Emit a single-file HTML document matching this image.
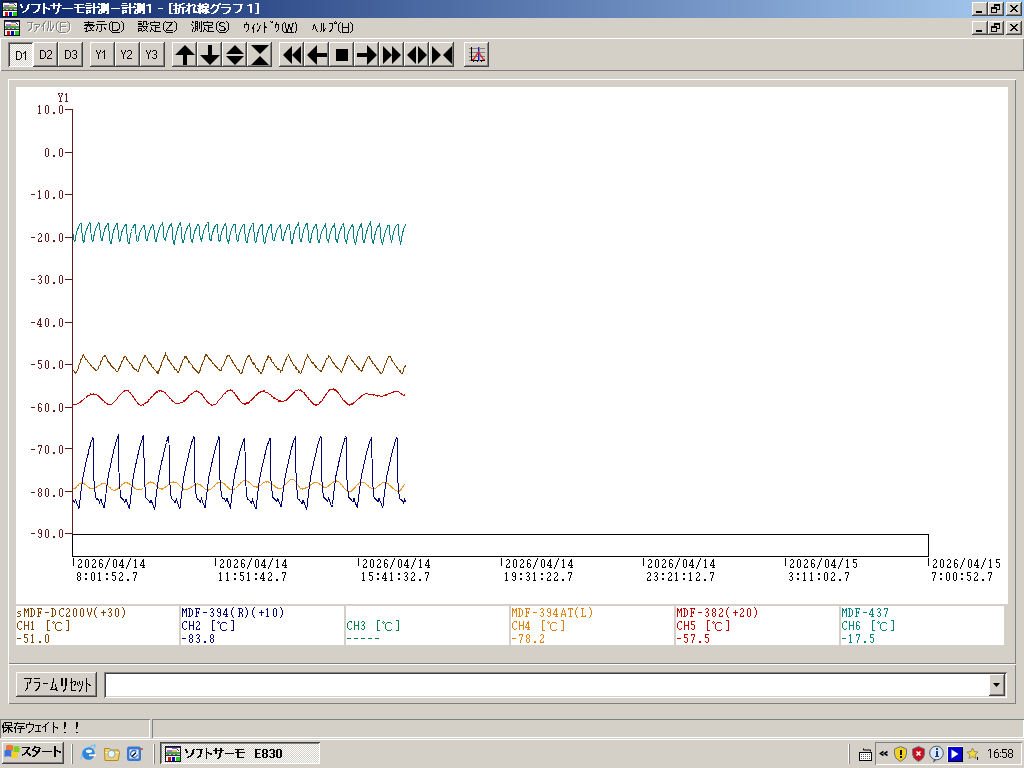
<!DOCTYPE html>
<html><head><meta charset="utf-8"><style>
html,body{margin:0;padding:0;width:1024px;height:768px;overflow:hidden;background:#D4D0C8;font-family:"Liberation Sans",sans-serif}
body>div,body>svg{position:absolute}
.b{background:#D4D0C8;box-shadow:inset -1px -1px #404040,inset 1px 1px #fff,inset -2px -2px #808080}
.bp{background-color:#fff;background-image:repeating-conic-gradient(#D4D0C8 0 25%,#fff 0 50%);background-size:2px 2px;box-shadow:inset 1px 1px #808080,inset -1px -1px #fff,inset 2px 2px #404040}
.bp2{background-color:#fff;background-image:repeating-conic-gradient(#D4D0C8 0 25%,#fff 0 50%);background-size:2px 2px;box-shadow:inset 1px 1px #404040,inset -1px -1px #fff,inset 2px 2px #808080}
.s{box-shadow:inset 1px 1px #808080,inset -1px -1px #fff,inset 2px 2px #404040,inset -2px -2px #D4D0C8}
.m{font-family:"Liberation Mono",monospace;font-size:12px;letter-spacing:-0.2px;line-height:14px;white-space:pre}
</style></head><body>
<div style="left:0;top:0;width:1024px;height:18px;background:linear-gradient(to right,#0A246A,#A6CAF0)"></div>
<div class="b" style="left:972px;top:2px;width:16px;height:14px;"></div>
<div class="b" style="left:972px;top:21px;width:16px;height:14px;"></div>
<div class="b" style="left:988px;top:2px;width:16px;height:14px;"></div>
<div class="b" style="left:988px;top:21px;width:16px;height:14px;"></div>
<div class="b" style="left:1006px;top:2px;width:16px;height:14px;"></div>
<div class="b" style="left:1006px;top:21px;width:16px;height:14px;"></div>
<div style="left:0;top:38px;width:1024px;height:33px;box-shadow:inset 1px 1px #fff,inset -1px -1px #808080"></div>
<div class="b" style="left:33px;top:42px;width:25px;height:25px;"></div>
<div class="b" style="left:58px;top:42px;width:25px;height:25px;"></div>
<div class="b" style="left:90px;top:42px;width:25px;height:25px;"></div>
<div class="b" style="left:115px;top:42px;width:25px;height:25px;"></div>
<div class="b" style="left:140px;top:42px;width:25px;height:25px;"></div>
<div class="b" style="left:172px;top:42px;width:25px;height:25px;"></div>
<div class="b" style="left:197px;top:42px;width:25px;height:25px;"></div>
<div class="b" style="left:222px;top:42px;width:25px;height:25px;"></div>
<div class="b" style="left:247px;top:42px;width:25px;height:25px;"></div>
<div class="b" style="left:279px;top:42px;width:25px;height:25px;"></div>
<div class="b" style="left:304px;top:42px;width:25px;height:25px;"></div>
<div class="b" style="left:329px;top:42px;width:25px;height:25px;"></div>
<div class="b" style="left:354px;top:42px;width:25px;height:25px;"></div>
<div class="b" style="left:379px;top:42px;width:25px;height:25px;"></div>
<div class="b" style="left:404px;top:42px;width:25px;height:25px;"></div>
<div class="b" style="left:429px;top:42px;width:25px;height:25px;"></div>
<div class="b" style="left:464px;top:42px;width:25px;height:25px;"></div>
<div class="bp" style="left:8px;top:42px;width:25px;height:25px"></div>
<div style="left:8px;top:79px;width:1008px;height:585px;box-shadow:inset 1px 1px #fff,inset -1px -1px #808080"></div>
<div style="left:16px;top:87px;width:992px;height:517px;background:#fff"></div>
<div style="left:16px;top:606px;width:163px;height:39px;background:#fff"></div>
<div style="left:181px;top:606px;width:163px;height:39px;background:#fff"></div>
<div style="left:346px;top:606px;width:163px;height:39px;background:#fff"></div>
<div style="left:511px;top:606px;width:163px;height:39px;background:#fff"></div>
<div style="left:676px;top:606px;width:163px;height:39px;background:#fff"></div>
<div style="left:841px;top:606px;width:163px;height:39px;background:#fff"></div>
<svg width="1024" height="768" style="left:0;top:0" shape-rendering="crispEdges"><line x1="72.5" y1="109" x2="72.5" y2="534" stroke="#601818"/><line x1="65" y1="109.5" x2="73" y2="109.5" stroke="#601818"/><line x1="65" y1="152.5" x2="73" y2="152.5" stroke="#601818"/><line x1="65" y1="194.5" x2="73" y2="194.5" stroke="#601818"/><line x1="65" y1="237.5" x2="73" y2="237.5" stroke="#601818"/><line x1="65" y1="279.5" x2="73" y2="279.5" stroke="#601818"/><line x1="65" y1="322.5" x2="73" y2="322.5" stroke="#601818"/><line x1="65" y1="364.5" x2="73" y2="364.5" stroke="#601818"/><line x1="65" y1="407.5" x2="73" y2="407.5" stroke="#601818"/><line x1="65" y1="448.5" x2="73" y2="448.5" stroke="#601818"/><line x1="65" y1="491.5" x2="73" y2="491.5" stroke="#601818"/><line x1="65" y1="533.5" x2="73" y2="533.5" stroke="#601818"/><rect x="72.5" y="534.5" width="856" height="22" fill="none" stroke="#000"/><line x1="73.5" y1="558" x2="73.5" y2="566" stroke="#000"/><line x1="215.5" y1="558" x2="215.5" y2="566" stroke="#000"/><line x1="358.5" y1="558" x2="358.5" y2="566" stroke="#000"/><line x1="501.5" y1="558" x2="501.5" y2="566" stroke="#000"/><line x1="643.5" y1="558" x2="643.5" y2="566" stroke="#000"/><line x1="785.5" y1="558" x2="785.5" y2="566" stroke="#000"/><line x1="928.5" y1="558" x2="928.5" y2="566" stroke="#000"/><polyline points="73.0,233.9 73.5,239.3 74.0,240.1 74.5,241.5 75.0,240.8 75.5,238.2 76.0,235.1 76.5,232.9 77.0,231.4 77.5,230.1 78.0,228.5 78.5,227.5 79.0,225.9 79.5,224.9 80.0,224.1 80.5,223.7 81.0,222.9 81.5,226.4 82.0,233.3 82.5,239.0 83.0,240.5 83.5,242.2 84.0,241.7 84.5,238.2 85.0,235.3 85.5,233.1 86.0,231.3 86.5,229.8 87.0,228.5 87.5,227.2 88.0,226.0 88.5,225.0 89.0,224.2 89.5,222.9 90.0,222.8 90.5,226.7 91.0,233.4 91.5,239.1 92.0,240.2 92.5,241.6 93.0,241.4 93.5,238.7 94.0,235.6 94.5,233.1 95.0,231.4 95.5,229.8 96.0,228.4 96.5,227.0 97.0,225.9 97.5,224.9 98.0,224.1 98.5,223.5 99.0,222.5 99.5,225.1 100.0,230.1 100.5,235.9 101.0,238.3 101.5,239.7 102.0,241.1 102.5,238.1 103.0,236.1 103.5,233.9 104.0,231.6 104.5,230.2 105.0,228.5 105.5,227.4 106.0,226.6 106.5,225.7 107.0,225.3 107.5,224.2 108.0,223.4 108.5,225.5 109.0,230.5 109.5,237.2 110.0,241.2 110.5,242.3 111.0,244.2 111.5,242.0 112.0,238.7 112.5,235.9 113.0,233.1 113.5,231.5 114.0,229.6 114.5,228.6 115.0,227.2 115.5,226.2 116.0,224.9 116.5,223.9 117.0,223.5 117.5,224.7 118.0,229.7 118.5,236.2 119.0,239.2 119.5,240.5 120.0,241.5 120.5,238.9 121.0,236.1 121.5,233.4 122.0,231.5 122.5,230.3 123.0,228.8 123.5,228.1 124.0,227.3 124.5,226.0 125.0,225.7 125.5,225.1 126.0,224.4 126.5,227.3 127.0,233.9 127.5,240.7 128.0,242.2 128.5,243.7 129.0,243.9 129.5,240.7 130.0,237.8 130.5,234.8 131.0,233.1 131.5,231.5 132.0,229.3 132.5,228.5 133.0,227.6 133.5,226.4 134.0,225.5 134.5,224.4 135.0,224.3 135.5,228.8 136.0,234.4 136.5,239.4 137.0,240.9 137.5,241.7 138.0,241.4 138.5,239.1 139.0,236.5 139.5,233.9 140.0,232.2 140.5,230.9 141.0,230.2 141.5,229.1 142.0,227.7 142.5,227.3 143.0,226.7 143.5,225.9 144.0,225.0 144.5,226.1 145.0,229.9 145.5,235.3 146.0,238.8 146.5,239.8 147.0,240.8 147.5,239.2 148.0,236.4 148.5,234.6 149.0,232.7 149.5,230.9 150.0,229.7 150.5,228.6 151.0,227.6 151.5,227.0 152.0,226.0 152.5,225.4 153.0,224.6 153.5,226.1 154.0,230.0 154.5,235.9 155.0,239.3 155.5,240.8 156.0,241.6 156.5,240.4 157.0,237.3 157.5,235.0 158.0,232.8 158.5,230.9 159.0,229.7 159.5,228.1 160.0,226.9 160.5,226.5 161.0,224.9 161.5,224.4 162.0,223.8 162.5,222.8 163.0,226.3 163.5,232.6 164.0,237.9 164.5,239.4 165.0,240.2 165.5,240.3 166.0,237.2 166.5,234.8 167.0,232.9 167.5,231.1 168.0,229.7 168.5,228.4 169.0,227.6 169.5,226.2 170.0,225.4 170.5,224.6 171.0,224.0 171.5,223.4 172.0,226.5 172.5,233.1 173.0,240.1 173.5,242.0 174.0,243.4 174.5,243.9 175.0,240.6 175.5,237.1 176.0,234.7 176.5,232.9 177.0,231.1 177.5,228.9 178.0,227.6 178.5,226.7 179.0,225.3 179.5,224.5 180.0,223.5 180.5,223.1 181.0,226.4 181.5,232.9 182.0,239.0 182.5,241.0 183.0,242.4 183.5,242.3 184.0,239.8 184.5,237.1 185.0,234.0 185.5,232.7 186.0,230.7 186.5,229.3 187.0,228.6 187.5,227.5 188.0,225.9 188.5,225.4 189.0,224.8 189.5,223.9 190.0,226.6 190.5,232.4 191.0,238.8 191.5,239.6 192.0,241.4 192.5,241.9 193.0,238.7 193.5,236.4 194.0,234.3 194.5,232.3 195.0,230.5 195.5,229.8 196.0,228.5 196.5,227.6 197.0,226.0 197.5,225.3 198.0,224.4 198.5,224.2 199.0,225.5 199.5,230.1 200.0,235.9 200.5,238.8 201.0,239.9 201.5,240.7 202.0,238.5 202.5,236.5 203.0,234.0 203.5,232.0 204.0,230.1 204.5,228.7 205.0,227.9 205.5,226.7 206.0,225.4 206.5,225.2 207.0,224.2 207.5,223.5 208.0,222.2 208.5,226.7 209.0,232.4 209.5,238.5 210.0,239.5 210.5,240.7 211.0,240.7 211.5,238.1 212.0,235.1 212.5,232.8 213.0,231.5 213.5,229.9 214.0,228.4 214.5,227.5 215.0,226.5 215.5,225.8 216.0,225.2 216.5,224.6 217.0,224.4 217.5,227.0 218.0,233.4 218.5,238.9 219.0,240.5 219.5,241.6 220.0,240.8 220.5,237.4 221.0,235.5 221.5,232.9 222.0,231.0 222.5,229.6 223.0,228.6 223.5,226.8 224.0,226.2 224.5,225.0 225.0,224.2 225.5,223.6 226.0,226.2 226.5,232.2 227.0,238.8 227.5,241.0 228.0,241.8 228.5,243.6 229.0,240.6 229.5,237.7 230.0,235.1 230.5,232.9 231.0,231.1 231.5,229.7 232.0,228.3 232.5,227.8 233.0,226.4 233.5,225.4 234.0,224.6 234.5,224.5 235.0,223.8 235.5,227.4 236.0,233.4 236.5,238.5 237.0,239.9 237.5,241.3 238.0,240.6 238.5,237.9 239.0,235.4 239.5,233.7 240.0,232.2 240.5,230.4 241.0,228.8 241.5,228.5 242.0,227.0 242.5,226.1 243.0,225.2 243.5,224.9 244.0,224.3 244.5,228.1 245.0,234.2 245.5,240.1 246.0,241.1 246.5,242.7 247.0,242.6 247.5,239.8 248.0,236.8 248.5,234.3 249.0,232.6 249.5,230.9 250.0,229.5 250.5,228.3 251.0,227.3 251.5,226.1 252.0,225.2 252.5,224.5 253.0,223.2 253.5,225.4 254.0,231.9 254.5,238.2 255.0,240.8 255.5,242.2 256.0,242.5 256.5,239.9 257.0,237.1 257.5,234.3 258.0,232.5 258.5,230.9 259.0,228.8 259.5,228.0 260.0,227.0 260.5,226.2 261.0,225.4 261.5,224.7 262.0,223.7 262.5,228.2 263.0,235.1 263.5,240.9 264.0,242.1 264.5,243.4 265.0,242.9 265.5,239.9 266.0,236.9 266.5,234.9 267.0,232.9 267.5,231.4 268.0,229.8 268.5,228.8 269.0,227.5 269.5,226.1 270.0,225.9 270.5,225.1 271.0,224.2 271.5,227.7 272.0,233.4 272.5,238.3 273.0,240.0 273.5,240.9 274.0,241.2 274.5,238.7 275.0,236.7 275.5,234.2 276.0,232.9 276.5,231.7 277.0,230.0 277.5,228.9 278.0,228.1 278.5,227.4 279.0,226.7 279.5,226.0 280.0,225.4 280.5,225.1 281.0,228.9 281.5,234.6 282.0,238.7 282.5,239.6 283.0,241.0 283.5,239.0 284.0,236.4 284.5,234.4 285.0,232.6 285.5,231.2 286.0,229.8 286.5,228.2 287.0,227.3 287.5,226.3 288.0,225.4 288.5,224.3 289.0,224.2 289.5,224.8 290.0,230.4 290.5,237.1 291.0,240.3 291.5,242.1 292.0,243.9 292.5,242.4 293.0,238.8 293.5,236.1 294.0,233.5 294.5,232.4 295.0,230.2 295.5,228.9 296.0,227.4 296.5,226.6 297.0,225.8 297.5,224.3 298.0,224.0 298.5,222.9 299.0,226.4 299.5,232.8 300.0,238.9 300.5,240.9 301.0,242.1 301.5,241.2 302.0,237.9 302.5,235.5 303.0,232.9 303.5,231.0 304.0,229.2 304.5,227.9 305.0,226.7 305.5,226.0 306.0,224.3 306.5,224.0 307.0,223.3 307.5,223.9 308.0,230.0 308.5,236.8 309.0,240.7 309.5,241.8 310.0,243.3 310.5,241.2 311.0,238.6 311.5,235.7 312.0,233.2 312.5,231.7 313.0,230.1 313.5,228.6 314.0,227.6 314.5,227.2 315.0,225.9 315.5,225.8 316.0,224.6 316.5,224.8 317.0,229.2 317.5,235.2 318.0,239.9 318.5,241.7 319.0,243.0 319.5,242.1 320.0,239.0 320.5,236.8 321.0,234.5 321.5,232.6 322.0,231.3 322.5,229.3 323.0,228.9 323.5,227.7 324.0,227.0 324.5,226.2 325.0,225.2 325.5,224.3 326.0,227.7 326.5,232.5 327.0,238.6 327.5,239.8 328.0,241.0 328.5,241.7 329.0,239.1 329.5,236.1 330.0,234.1 330.5,232.1 331.0,230.9 331.5,229.3 332.0,228.1 332.5,227.1 333.0,226.2 333.5,226.0 334.0,224.9 334.5,224.0 335.0,227.5 335.5,233.5 336.0,239.5 336.5,240.7 337.0,242.1 337.5,242.4 338.0,239.5 338.5,236.6 339.0,234.3 339.5,232.5 340.0,231.2 340.5,229.9 341.0,228.6 341.5,227.3 342.0,226.2 342.5,225.5 343.0,224.6 343.5,223.8 344.0,226.5 344.5,232.3 345.0,239.1 345.5,240.0 346.0,241.6 346.5,242.6 347.0,239.9 347.5,236.8 348.0,234.5 348.5,232.6 349.0,231.3 349.5,229.9 350.0,229.2 350.5,228.2 351.0,227.2 351.5,225.8 352.0,225.1 352.5,225.0 353.0,226.4 353.5,231.6 354.0,238.8 354.5,241.5 355.0,243.4 355.5,245.2 356.0,241.8 356.5,238.7 357.0,236.1 357.5,233.3 358.0,231.4 358.5,229.7 359.0,228.7 359.5,227.6 360.0,226.6 360.5,225.5 361.0,224.6 361.5,223.7 362.0,227.5 362.5,234.2 363.0,239.6 363.5,241.6 364.0,242.6 364.5,242.9 365.0,239.5 365.5,236.5 366.0,233.7 366.5,231.9 367.0,230.6 367.5,229.0 368.0,227.3 368.5,226.1 369.0,225.3 369.5,224.5 370.0,223.5 370.5,222.5 371.0,226.1 371.5,232.1 372.0,239.4 372.5,241.1 373.0,243.0 373.5,243.4 374.0,240.4 374.5,237.2 375.0,234.5 375.5,232.5 376.0,231.5 376.5,229.8 377.0,228.3 377.5,227.0 378.0,226.4 378.5,225.8 379.0,224.9 379.5,224.0 380.0,226.6 380.5,232.6 381.0,239.0 381.5,241.7 382.0,243.4 382.5,245.0 383.0,242.4 383.5,238.9 384.0,236.8 384.5,234.5 385.0,232.7 385.5,230.8 386.0,230.0 386.5,228.4 387.0,227.8 387.5,226.3 388.0,225.5 388.5,225.2 389.0,224.9 389.5,229.4 390.0,235.0 390.5,238.8 391.0,240.1 391.5,241.5 392.0,240.4 392.5,237.8 393.0,234.8 393.5,232.8 394.0,231.2 394.5,230.3 395.0,228.3 395.5,227.2 396.0,226.1 396.5,225.4 397.0,225.1 397.5,224.3 398.0,224.3 398.5,229.1 399.0,235.9 399.5,240.1 400.0,241.4 400.5,243.5 401.0,242.0 401.5,238.2 402.0,236.1 402.5,233.2 403.0,231.5 403.5,229.8 404.0,228.1 404.5,226.8 405.0,225.9 405.5,224.8 406.0,224.5" fill="none" stroke="#008080" stroke-width="1"/><polyline points="73.0,371.0 73.5,370.7 74.0,371.0 74.5,371.8 75.0,372.4 75.5,373.6 76.0,372.9 76.5,372.7 77.0,371.3 77.5,370.2 78.0,368.7 78.5,367.1 79.0,365.3 79.5,364.0 80.0,362.7 80.5,362.0 81.0,359.5 81.5,358.4 82.0,358.3 82.5,356.5 83.0,355.2 83.5,354.8 84.0,356.1 84.5,356.3 85.0,358.0 85.5,358.9 86.0,360.0 86.5,359.8 87.0,360.1 87.5,360.7 88.0,361.9 88.5,362.8 89.0,363.0 89.5,363.2 90.0,364.1 90.5,365.0 91.0,365.6 91.5,366.3 92.0,367.1 92.5,367.3 93.0,367.0 93.5,368.6 94.0,368.3 94.5,369.2 95.0,369.3 95.5,370.3 96.0,369.9 96.5,370.4 97.0,370.4 97.5,369.2 98.0,369.3 98.5,367.7 99.0,366.1 99.5,365.1 100.0,364.9 100.5,363.0 101.0,361.4 101.5,361.2 102.0,359.8 102.5,359.3 103.0,357.0 103.5,356.8 104.0,356.6 104.5,356.1 105.0,356.8 105.5,356.0 106.0,357.0 106.5,357.9 107.0,359.1 107.5,361.4 108.0,361.4 108.5,362.6 109.0,362.3 109.5,363.7 110.0,363.7 110.5,364.0 111.0,365.5 111.5,366.3 112.0,365.6 112.5,367.0 113.0,367.7 113.5,367.6 114.0,368.4 114.5,368.6 115.0,369.2 115.5,369.8 116.0,370.8 116.5,371.3 117.0,371.1 117.5,371.2 118.0,371.0 118.5,370.5 119.0,368.5 119.5,367.6 120.0,366.2 120.5,366.0 121.0,364.4 121.5,362.5 122.0,361.4 122.5,360.7 123.0,359.8 123.5,359.1 124.0,357.4 124.5,356.8 125.0,356.8 125.5,356.8 126.0,357.1 126.5,357.7 127.0,359.7 127.5,359.7 128.0,361.1 128.5,361.3 129.0,362.0 129.5,363.3 130.0,364.0 130.5,363.6 131.0,363.9 131.5,365.3 132.0,365.1 132.5,365.4 133.0,367.4 133.5,367.2 134.0,368.4 134.5,368.3 135.0,369.5 135.5,369.4 136.0,369.4 136.5,369.6 137.0,370.9 137.5,371.5 138.0,371.7 138.5,369.2 139.0,368.9 139.5,367.3 140.0,366.3 140.5,364.5 141.0,363.4 141.5,362.5 142.0,361.9 142.5,359.3 143.0,358.7 143.5,358.2 144.0,357.6 144.5,355.4 145.0,354.7 145.5,356.6 146.0,357.2 146.5,357.2 147.0,357.7 147.5,360.3 148.0,360.6 148.5,362.1 149.0,362.3 149.5,363.3 150.0,363.0 150.5,364.6 151.0,364.4 151.5,365.4 152.0,366.8 152.5,367.5 153.0,367.1 153.5,367.9 154.0,368.9 154.5,369.7 155.0,370.1 155.5,370.3 156.0,371.1 156.5,372.4 157.0,373.2 157.5,372.3 158.0,373.7 158.5,372.9 159.0,370.4 159.5,370.4 160.0,367.8 160.5,367.1 161.0,365.6 161.5,364.3 162.0,362.3 162.5,361.1 163.0,359.9 163.5,358.2 164.0,357.5 164.5,356.1 165.0,355.1 165.5,353.7 166.0,355.4 166.5,355.8 167.0,356.2 167.5,358.3 168.0,359.6 168.5,360.1 169.0,360.4 169.5,361.6 170.0,361.7 170.5,362.4 171.0,363.6 171.5,363.7 172.0,365.0 172.5,365.8 173.0,365.7 173.5,367.3 174.0,367.1 174.5,368.8 175.0,369.4 175.5,369.6 176.0,369.4 176.5,370.6 177.0,370.9 177.5,372.3 178.0,371.5 178.5,371.9 179.0,370.9 179.5,369.2 180.0,368.1 180.5,365.9 181.0,365.9 181.5,363.9 182.0,363.4 182.5,362.1 183.0,359.7 183.5,359.5 184.0,358.9 184.5,356.7 185.0,356.3 185.5,357.0 186.0,356.5 186.5,358.2 187.0,358.0 187.5,359.9 188.0,359.9 188.5,361.4 189.0,362.7 189.5,362.1 190.0,362.8 190.5,363.8 191.0,364.1 191.5,364.3 192.0,365.2 192.5,365.8 193.0,367.6 193.5,367.8 194.0,368.8 194.5,368.3 195.0,369.8 195.5,369.3 196.0,370.5 196.5,371.3 197.0,371.3 197.5,372.6 198.0,372.6 198.5,373.2 199.0,373.3 199.5,370.8 200.0,370.9 200.5,369.0 201.0,367.3 201.5,366.6 202.0,364.4 202.5,364.2 203.0,362.2 203.5,360.4 204.0,359.7 204.5,357.9 205.0,356.5 205.5,356.4 206.0,354.3 206.5,355.1 207.0,354.7 207.5,355.9 208.0,357.0 208.5,357.4 209.0,358.5 209.5,359.0 210.0,359.1 210.5,359.7 211.0,360.5 211.5,361.8 212.0,362.1 212.5,362.8 213.0,364.0 213.5,363.4 214.0,364.1 214.5,365.3 215.0,364.9 215.5,365.4 216.0,366.6 216.5,366.7 217.0,367.6 217.5,367.9 218.0,369.0 218.5,369.4 219.0,369.3 219.5,370.4 220.0,370.6 220.5,370.5 221.0,370.8 221.5,368.6 222.0,367.4 222.5,366.2 223.0,365.9 223.5,365.1 224.0,363.8 224.5,362.1 225.0,360.7 225.5,359.2 226.0,359.0 226.5,357.8 227.0,356.6 227.5,356.3 228.0,355.2 228.5,355.1 229.0,355.5 229.5,355.4 230.0,357.1 230.5,357.1 231.0,359.2 231.5,360.2 232.0,360.7 232.5,361.2 233.0,363.0 233.5,362.6 234.0,364.2 234.5,365.5 235.0,365.0 235.5,365.8 236.0,367.2 236.5,367.8 237.0,368.7 237.5,369.7 238.0,369.3 238.5,370.2 239.0,370.8 239.5,371.0 240.0,372.9 240.5,373.3 241.0,373.7 241.5,372.6 242.0,372.5 242.5,371.0 243.0,369.1 243.5,368.1 244.0,366.2 244.5,364.4 245.0,362.8 245.5,361.5 246.0,359.8 246.5,358.8 247.0,358.3 247.5,357.2 248.0,356.5 248.5,355.3 249.0,355.2 249.5,356.3 250.0,356.8 250.5,358.7 251.0,359.5 251.5,360.3 252.0,361.6 252.5,362.9 253.0,362.4 253.5,364.1 254.0,363.5 254.5,364.6 255.0,365.2 255.5,366.7 256.0,367.8 256.5,368.1 257.0,368.2 257.5,369.7 258.0,369.4 258.5,369.9 259.0,371.5 259.5,371.6 260.0,372.2 260.5,372.7 261.0,373.7 261.5,372.6 262.0,372.0 262.5,370.5 263.0,369.5 263.5,367.5 264.0,366.6 264.5,365.1 265.0,363.4 265.5,361.9 266.0,361.3 266.5,359.2 267.0,359.6 267.5,357.5 268.0,356.4 268.5,355.9 269.0,357.7 269.5,357.3 270.0,357.6 270.5,358.5 271.0,359.5 271.5,361.5 272.0,362.0 272.5,362.7 273.0,363.3 273.5,362.8 274.0,364.3 274.5,364.5 275.0,365.8 275.5,366.4 276.0,367.1 276.5,366.4 277.0,368.3 277.5,369.0 278.0,369.5 278.5,368.7 279.0,369.4 279.5,369.8 280.0,370.1 280.5,371.9 281.0,372.3 281.5,371.5 282.0,370.6 282.5,369.0 283.0,367.2 283.5,365.6 284.0,364.3 284.5,364.0 285.0,361.9 285.5,360.7 286.0,359.6 286.5,357.6 287.0,357.1 287.5,356.1 288.0,355.9 288.5,355.0 289.0,355.6 289.5,357.3 290.0,357.7 290.5,359.6 291.0,360.5 291.5,360.5 292.0,361.9 292.5,362.7 293.0,364.0 293.5,364.0 294.0,365.4 294.5,365.8 295.0,366.1 295.5,367.9 296.0,367.4 296.5,369.3 297.0,368.9 297.5,369.3 298.0,370.3 298.5,371.8 299.0,372.7 299.5,371.7 300.0,373.1 300.5,373.6 301.0,373.5 301.5,371.2 302.0,370.3 302.5,368.6 303.0,367.9 303.5,365.6 304.0,365.2 304.5,362.7 305.0,361.2 305.5,360.5 306.0,359.0 306.5,357.3 307.0,357.2 307.5,355.3 308.0,356.7 308.5,357.0 309.0,357.7 309.5,358.3 310.0,358.9 310.5,360.0 311.0,360.8 311.5,362.2 312.0,361.5 312.5,363.3 313.0,362.5 313.5,363.4 314.0,364.1 314.5,365.7 315.0,365.6 315.5,366.0 316.0,367.4 316.5,366.9 317.0,367.8 317.5,368.4 318.0,369.3 318.5,369.8 319.0,370.1 319.5,370.1 320.0,370.5 320.5,370.7 321.0,372.2 321.5,371.3 322.0,370.3 322.5,368.3 323.0,367.6 323.5,367.0 324.0,365.6 324.5,363.7 325.0,363.1 325.5,362.6 326.0,360.4 326.5,359.2 327.0,358.4 327.5,358.3 328.0,357.7 328.5,355.8 329.0,355.8 329.5,356.4 330.0,357.1 330.5,358.3 331.0,358.8 331.5,360.1 332.0,360.6 332.5,362.5 333.0,362.7 333.5,362.3 334.0,364.3 334.5,363.5 335.0,364.6 335.5,366.1 336.0,366.4 336.5,367.0 337.0,367.1 337.5,367.3 338.0,368.6 338.5,368.3 339.0,369.0 339.5,369.8 340.0,369.7 340.5,370.8 341.0,371.9 341.5,372.2 342.0,370.9 342.5,369.9 343.0,368.4 343.5,366.6 344.0,366.0 344.5,364.4 345.0,363.6 345.5,362.6 346.0,360.5 346.5,359.5 347.0,358.5 347.5,357.1 348.0,355.8 348.5,355.7 349.0,355.9 349.5,356.3 350.0,356.8 350.5,358.0 351.0,358.8 351.5,359.8 352.0,360.3 352.5,360.7 353.0,361.8 353.5,361.6 354.0,362.7 354.5,363.9 355.0,364.4 355.5,364.9 356.0,364.9 356.5,365.8 357.0,366.5 357.5,367.3 358.0,367.5 358.5,368.5 359.0,369.4 359.5,368.7 360.0,369.9 360.5,370.6 361.0,370.4 361.5,371.0 362.0,370.6 362.5,368.0 363.0,367.7 363.5,365.9 364.0,365.8 364.5,364.9 365.0,363.0 365.5,361.2 366.0,360.8 366.5,359.7 367.0,359.0 367.5,357.9 368.0,357.3 368.5,356.8 369.0,356.6 369.5,357.0 370.0,358.4 370.5,358.3 371.0,360.2 371.5,360.9 372.0,362.3 372.5,361.9 373.0,364.0 373.5,363.6 374.0,363.8 374.5,364.8 375.0,365.7 375.5,365.7 376.0,367.0 376.5,367.7 377.0,368.8 377.5,368.9 378.0,369.3 378.5,369.8 379.0,371.2 379.5,372.1 380.0,372.0 380.5,372.0 381.0,373.5 381.5,373.3 382.0,372.7 382.5,371.3 383.0,371.1 383.5,369.8 384.0,368.2 384.5,366.6 385.0,365.4 385.5,363.5 386.0,363.4 386.5,361.1 387.0,360.2 387.5,359.4 388.0,358.4 388.5,356.9 389.0,355.7 389.5,356.4 390.0,356.2 390.5,357.9 391.0,358.2 391.5,360.2 392.0,360.5 392.5,361.4 393.0,361.9 393.5,362.8 394.0,363.1 394.5,363.5 395.0,365.3 395.5,365.3 396.0,365.9 396.5,366.7 397.0,367.6 397.5,368.2 398.0,369.2 398.5,369.9 399.0,370.0 399.5,371.5 400.0,372.0 400.5,371.3 401.0,373.1 401.5,373.7 402.0,374.1 402.5,372.4 403.0,372.2 403.5,370.5 404.0,368.1 404.5,366.6 405.0,366.7 405.5,364.8" fill="none" stroke="#804000" stroke-width="1"/><polyline points="73.0,404.6 73.5,404.4 74.0,404.4 74.5,404.4 75.0,404.8 75.5,404.3 76.0,403.9 76.5,404.5 77.0,404.1 77.5,403.3 78.0,403.7 78.5,403.2 79.0,403.0 79.5,402.6 80.0,402.5 80.5,402.0 81.0,401.7 81.5,400.7 82.0,400.8 82.5,400.2 83.0,400.0 83.5,399.3 84.0,399.3 84.5,398.6 85.0,397.9 85.5,397.5 86.0,397.0 86.5,397.0 87.0,396.2 87.5,396.3 88.0,395.6 88.5,395.7 89.0,395.4 89.5,395.2 90.0,395.3 90.5,394.2 91.0,394.8 91.5,394.3 92.0,394.3 92.5,394.3 93.0,394.4 93.5,393.9 94.0,393.9 94.5,394.5 95.0,393.7 95.5,394.4 96.0,394.6 96.5,394.2 97.0,395.1 97.5,395.4 98.0,396.1 98.5,395.8 99.0,396.9 99.5,396.9 100.0,397.3 100.5,398.2 101.0,397.9 101.5,399.1 102.0,399.5 102.5,399.7 103.0,400.7 103.5,400.7 104.0,401.3 104.5,401.8 105.0,402.5 105.5,402.3 106.0,402.9 106.5,403.2 107.0,403.6 107.5,404.1 108.0,403.8 108.5,404.5 109.0,404.2 109.5,404.3 110.0,404.1 110.5,404.2 111.0,404.6 111.5,404.1 112.0,404.0 112.5,403.2 113.0,402.8 113.5,402.4 114.0,402.2 114.5,401.8 115.0,401.4 115.5,400.1 116.0,400.2 116.5,399.7 117.0,398.8 117.5,397.6 118.0,397.2 118.5,396.3 119.0,395.8 119.5,395.9 120.0,395.0 120.5,394.4 121.0,394.0 121.5,393.6 122.0,392.8 122.5,392.3 123.0,391.9 123.5,391.6 124.0,391.2 124.5,391.0 125.0,390.4 125.5,390.7 126.0,390.4 126.5,390.7 127.0,390.1 127.5,390.3 128.0,390.4 128.5,391.4 129.0,391.9 129.5,392.1 130.0,392.3 130.5,393.3 131.0,393.9 131.5,394.3 132.0,394.7 132.5,395.5 133.0,396.4 133.5,397.1 134.0,398.0 134.5,399.0 135.0,400.0 135.5,399.9 136.0,401.1 136.5,401.3 137.0,402.0 137.5,403.3 138.0,403.6 138.5,404.4 139.0,404.3 139.5,404.2 140.0,404.8 140.5,405.2 141.0,405.6 141.5,405.7 142.0,405.1 142.5,405.0 143.0,404.5 143.5,404.9 144.0,404.2 144.5,403.9 145.0,403.4 145.5,403.0 146.0,403.3 146.5,402.3 147.0,402.7 147.5,401.3 148.0,401.6 148.5,400.3 149.0,399.6 149.5,399.8 150.0,398.7 150.5,398.6 151.0,397.4 151.5,396.7 152.0,396.9 152.5,396.2 153.0,395.8 153.5,395.1 154.0,393.9 154.5,394.0 155.0,393.6 155.5,392.9 156.0,393.0 156.5,391.9 157.0,392.3 157.5,391.8 158.0,390.8 158.5,390.6 159.0,391.1 159.5,391.2 160.0,390.4 160.5,390.6 161.0,391.1 161.5,390.6 162.0,391.4 162.5,391.3 163.0,391.1 163.5,391.7 164.0,392.2 164.5,392.4 165.0,393.1 165.5,393.0 166.0,394.1 166.5,394.1 167.0,394.9 167.5,395.5 168.0,395.8 168.5,396.3 169.0,397.3 169.5,398.0 170.0,398.4 170.5,398.8 171.0,399.1 171.5,399.4 172.0,400.8 172.5,401.0 173.0,401.6 173.5,401.5 174.0,402.2 174.5,403.0 175.0,403.1 175.5,403.2 176.0,403.1 176.5,403.4 177.0,404.0 177.5,403.6 178.0,404.0 178.5,403.9 179.0,404.1 179.5,404.0 180.0,403.3 180.5,402.8 181.0,402.9 181.5,402.8 182.0,402.6 182.5,402.5 183.0,402.3 183.5,401.0 184.0,401.4 184.5,400.9 185.0,400.5 185.5,399.7 186.0,398.9 186.5,399.0 187.0,398.4 187.5,397.8 188.0,397.5 188.5,396.4 189.0,395.6 189.5,395.6 190.0,395.4 190.5,394.3 191.0,394.4 191.5,394.2 192.0,393.1 192.5,393.1 193.0,392.9 193.5,392.4 194.0,391.8 194.5,391.7 195.0,392.0 195.5,391.9 196.0,391.5 196.5,391.1 197.0,391.8 197.5,391.9 198.0,391.5 198.5,392.0 199.0,392.6 199.5,392.9 200.0,392.9 200.5,393.3 201.0,393.9 201.5,394.0 202.0,394.6 202.5,395.2 203.0,396.3 203.5,396.6 204.0,397.5 204.5,398.0 205.0,398.8 205.5,399.1 206.0,399.6 206.5,401.2 207.0,401.2 207.5,401.5 208.0,402.6 208.5,403.3 209.0,403.1 209.5,403.9 210.0,404.0 210.5,404.5 211.0,404.2 211.5,404.4 212.0,405.5 212.5,405.4 213.0,405.0 213.5,404.9 214.0,404.5 214.5,404.8 215.0,404.2 215.5,404.4 216.0,403.9 216.5,403.5 217.0,403.2 217.5,402.0 218.0,401.2 218.5,400.8 219.0,400.2 219.5,399.5 220.0,398.9 220.5,398.7 221.0,398.4 221.5,397.3 222.0,397.1 222.5,396.4 223.0,395.0 223.5,394.9 224.0,394.1 224.5,393.2 225.0,393.5 225.5,392.3 226.0,392.2 226.5,391.8 227.0,391.8 227.5,391.2 228.0,390.6 228.5,390.4 229.0,390.0 229.5,390.7 230.0,390.7 230.5,389.9 231.0,389.9 231.5,390.3 232.0,390.6 232.5,391.5 233.0,392.0 233.5,392.4 234.0,392.1 234.5,393.5 235.0,394.0 235.5,394.7 236.0,395.7 236.5,395.5 237.0,396.4 237.5,397.7 238.0,398.7 238.5,399.1 239.0,399.5 239.5,400.5 240.0,401.3 240.5,401.2 241.0,402.0 241.5,402.4 242.0,402.7 242.5,403.4 243.0,403.3 243.5,403.6 244.0,403.6 244.5,404.2 245.0,403.5 245.5,404.1 246.0,403.5 246.5,403.1 247.0,403.8 247.5,402.9 248.0,403.3 248.5,402.9 249.0,402.6 249.5,401.4 250.0,401.3 250.5,400.5 251.0,400.9 251.5,400.3 252.0,399.6 252.5,398.9 253.0,398.2 253.5,398.2 254.0,397.3 254.5,396.9 255.0,395.9 255.5,395.5 256.0,394.8 256.5,395.0 257.0,394.4 257.5,393.5 258.0,393.9 258.5,392.9 259.0,392.7 259.5,392.1 260.0,392.0 260.5,392.3 261.0,391.6 261.5,391.3 262.0,391.5 262.5,391.3 263.0,391.9 263.5,391.1 264.0,392.1 264.5,391.2 265.0,392.2 265.5,392.1 266.0,391.9 266.5,392.3 267.0,392.4 267.5,392.6 268.0,392.9 268.5,393.3 269.0,394.3 269.5,394.7 270.0,395.0 270.5,394.5 271.0,395.1 271.5,396.1 272.0,395.7 272.5,396.7 273.0,396.7 273.5,397.8 274.0,397.2 274.5,398.4 275.0,398.3 275.5,398.5 276.0,398.7 276.5,399.8 277.0,399.9 277.5,399.8 278.0,400.3 278.5,401.0 279.0,400.6 279.5,401.1 280.0,400.8 280.5,401.0 281.0,401.7 281.5,401.7 282.0,401.2 282.5,401.1 283.0,401.0 283.5,401.4 284.0,401.2 284.5,400.7 285.0,400.4 285.5,400.5 286.0,400.3 286.5,400.0 287.0,399.4 287.5,398.6 288.0,398.0 288.5,398.1 289.0,397.3 289.5,397.1 290.0,395.9 290.5,396.1 291.0,395.1 291.5,395.1 292.0,394.6 292.5,393.7 293.0,392.7 293.5,393.1 294.0,392.3 294.5,392.2 295.0,391.2 295.5,390.8 296.0,391.2 296.5,390.4 297.0,390.0 297.5,390.1 298.0,390.2 298.5,389.5 299.0,390.0 299.5,390.0 300.0,390.2 300.5,389.9 301.0,390.7 301.5,391.1 302.0,391.5 302.5,391.3 303.0,392.2 303.5,392.3 304.0,393.2 304.5,393.0 305.0,394.4 305.5,395.1 306.0,395.3 306.5,396.0 307.0,396.7 307.5,397.3 308.0,397.5 308.5,399.1 309.0,399.0 309.5,399.6 310.0,400.2 310.5,400.9 311.0,402.1 311.5,401.8 312.0,402.4 312.5,403.4 313.0,403.3 313.5,403.5 314.0,404.4 314.5,404.6 315.0,404.8 315.5,405.1 316.0,404.6 316.5,405.4 317.0,405.2 317.5,404.4 318.0,404.2 318.5,404.3 319.0,404.0 319.5,403.3 320.0,402.7 320.5,402.4 321.0,401.6 321.5,401.4 322.0,400.9 322.5,399.5 323.0,399.2 323.5,398.6 324.0,397.2 324.5,397.1 325.0,396.4 325.5,395.1 326.0,394.4 326.5,394.0 327.0,393.0 327.5,392.2 328.0,392.2 328.5,391.4 329.0,390.5 329.5,389.9 330.0,389.6 330.5,389.4 331.0,389.7 331.5,389.4 332.0,389.4 332.5,389.3 333.0,389.4 333.5,388.7 334.0,389.4 334.5,390.1 335.0,390.3 335.5,390.0 336.0,390.6 336.5,391.2 337.0,391.5 337.5,392.2 338.0,392.3 338.5,393.3 339.0,394.0 339.5,394.1 340.0,394.9 340.5,396.5 341.0,397.0 341.5,397.8 342.0,398.2 342.5,399.1 343.0,399.8 343.5,400.4 344.0,400.2 344.5,401.4 345.0,401.6 345.5,402.5 346.0,402.5 346.5,403.2 347.0,404.0 347.5,404.0 348.0,403.8 348.5,404.3 349.0,404.4 349.5,404.9 350.0,404.3 350.5,404.3 351.0,404.5 351.5,403.9 352.0,404.2 352.5,404.3 353.0,403.6 353.5,403.0 354.0,402.9 354.5,402.6 355.0,401.8 355.5,401.4 356.0,400.9 356.5,400.6 357.0,400.3 357.5,399.7 358.0,399.1 358.5,398.5 359.0,398.5 359.5,398.3 360.0,397.6 360.5,397.1 361.0,396.7 361.5,395.9 362.0,396.0 362.5,395.4 363.0,395.1 363.5,394.9 364.0,394.5 364.5,394.2 365.0,393.9 365.5,393.8 366.0,394.0 366.5,393.9 367.0,394.1 367.5,393.5 368.0,393.9 368.5,394.5 369.0,393.9 369.5,394.3 370.0,394.3 370.5,394.2 371.0,394.9 371.5,394.4 372.0,394.9 372.5,394.4 373.0,394.4 373.5,395.4 374.0,395.0 374.5,394.8 375.0,395.2 375.5,395.4 376.0,395.8 376.5,395.2 377.0,395.4 377.5,396.2 378.0,396.1 378.5,395.5 379.0,395.8 379.5,395.8 380.0,396.2 380.5,396.1 381.0,396.3 381.5,396.3 382.0,395.9 382.5,396.1 383.0,396.0 383.5,395.9 384.0,395.5 384.5,395.6 385.0,395.4 385.5,395.4 386.0,394.5 386.5,395.0 387.0,393.9 387.5,394.5 388.0,394.1 388.5,393.7 389.0,394.0 389.5,393.4 390.0,393.0 390.5,393.2 391.0,393.0 391.5,392.6 392.0,392.2 392.5,392.1 393.0,392.0 393.5,392.1 394.0,391.5 394.5,391.5 395.0,391.6 395.5,391.4 396.0,391.3 396.5,391.8 397.0,391.9 397.5,391.6 398.0,391.7 398.5,391.7 399.0,392.0 399.5,392.2 400.0,392.9 400.5,393.2 401.0,393.1 401.5,394.2 402.0,393.9 402.5,394.7 403.0,395.0 403.5,395.3 404.0,394.7 404.5,395.1 405.0,395.6" fill="none" stroke="#C00000" stroke-width="1"/><polyline points="73.0,488.7 73.5,488.7 74.0,488.8 74.5,488.6 75.0,488.5 75.5,488.0 76.0,487.4 76.5,487.2 77.0,486.3 77.5,485.8 78.0,485.4 78.5,484.7 79.0,484.2 79.5,483.9 80.0,483.4 80.5,483.5 81.0,483.2 81.5,483.0 82.0,482.8 82.5,483.0 83.0,483.2 83.5,483.5 84.0,483.7 84.5,484.2 85.0,484.6 85.5,484.7 86.0,485.1 86.5,485.6 87.0,486.3 87.5,486.3 88.0,486.8 88.5,487.4 89.0,487.4 89.5,487.8 90.0,488.4 90.5,488.6 91.0,488.6 91.5,488.4 92.0,488.9 92.5,488.8 93.0,488.8 93.5,488.8 94.0,488.6 94.5,488.1 95.0,487.8 95.5,487.6 96.0,487.4 96.5,487.1 97.0,486.6 97.5,486.3 98.0,486.2 98.5,485.8 99.0,485.3 99.5,485.4 100.0,484.9 100.5,484.2 101.0,484.2 101.5,484.2 102.0,483.7 102.5,483.8 103.0,483.3 103.5,483.4 104.0,483.7 104.5,483.6 105.0,483.8 105.5,483.7 106.0,484.2 106.5,484.5 107.0,484.8 107.5,485.4 108.0,485.8 108.5,486.6 109.0,486.9 109.5,487.3 110.0,487.7 110.5,488.2 111.0,489.0 111.5,489.0 112.0,489.4 112.5,489.8 113.0,490.2 113.5,490.6 114.0,490.5 114.5,490.7 115.0,490.2 115.5,490.0 116.0,490.3 116.5,489.8 117.0,489.7 117.5,489.1 118.0,488.6 118.5,488.2 119.0,487.6 119.5,487.6 120.0,486.9 120.5,486.2 121.0,485.8 121.5,485.2 122.0,484.6 122.5,484.6 123.0,484.0 123.5,483.9 124.0,483.3 124.5,483.1 125.0,482.7 125.5,482.5 126.0,483.0 126.5,482.9 127.0,482.7 127.5,483.1 128.0,483.3 128.5,483.2 129.0,483.6 129.5,484.2 130.0,484.2 130.5,484.9 131.0,484.9 131.5,485.4 132.0,486.0 132.5,486.1 133.0,486.6 133.5,487.4 134.0,487.6 134.5,488.2 135.0,488.2 135.5,488.6 136.0,489.0 136.5,489.2 137.0,489.9 137.5,489.6 138.0,489.9 138.5,489.7 139.0,490.0 139.5,489.9 140.0,489.8 140.5,489.4 141.0,489.3 141.5,489.4 142.0,488.8 142.5,488.4 143.0,487.9 143.5,487.5 144.0,487.0 144.5,486.4 145.0,486.3 145.5,485.5 146.0,484.9 146.5,484.8 147.0,483.9 147.5,483.6 148.0,483.5 148.5,482.8 149.0,482.6 149.5,482.6 150.0,482.4 150.5,481.9 151.0,481.9 151.5,482.1 152.0,482.0 152.5,482.5 153.0,482.3 153.5,483.1 154.0,483.2 154.5,483.5 155.0,484.1 155.5,484.4 156.0,485.3 156.5,485.6 157.0,486.5 157.5,486.8 158.0,487.2 158.5,487.6 159.0,488.2 159.5,488.3 160.0,488.9 160.5,488.7 161.0,489.0 161.5,489.0 162.0,488.8 162.5,489.0 163.0,488.6 163.5,488.6 164.0,488.2 164.5,487.8 165.0,487.5 165.5,486.9 166.0,486.6 166.5,486.6 167.0,485.8 167.5,485.6 168.0,484.8 168.5,484.6 169.0,484.1 169.5,483.8 170.0,483.3 170.5,482.8 171.0,482.6 171.5,482.3 172.0,482.1 172.5,482.3 173.0,481.9 173.5,481.9 174.0,482.3 174.5,482.3 175.0,482.5 175.5,482.6 176.0,482.5 176.5,482.8 177.0,483.0 177.5,483.8 178.0,484.2 178.5,484.5 179.0,485.0 179.5,485.6 180.0,486.1 180.5,486.3 181.0,487.1 181.5,487.3 182.0,487.9 182.5,488.0 183.0,488.3 183.5,489.1 184.0,489.2 184.5,489.4 185.0,489.1 185.5,489.2 186.0,489.3 186.5,489.3 187.0,489.3 187.5,489.2 188.0,488.8 188.5,488.7 189.0,488.7 189.5,488.1 190.0,488.2 190.5,487.7 191.0,487.4 191.5,486.8 192.0,486.5 192.5,486.3 193.0,485.8 193.5,485.2 194.0,485.4 194.5,485.1 195.0,484.5 195.5,484.2 196.0,484.5 196.5,484.2 197.0,483.8 197.5,483.8 198.0,483.8 198.5,484.3 199.0,484.1 199.5,484.7 200.0,484.9 200.5,484.8 201.0,485.5 201.5,485.7 202.0,486.4 202.5,486.8 203.0,487.0 203.5,487.3 204.0,488.2 204.5,488.3 205.0,489.0 205.5,489.2 206.0,489.5 206.5,489.8 207.0,489.8 207.5,489.8 208.0,489.6 208.5,490.0 209.0,489.8 209.5,489.7 210.0,489.7 210.5,489.0 211.0,489.0 211.5,488.2 212.0,488.2 212.5,487.8 213.0,487.0 213.5,486.7 214.0,486.5 214.5,485.8 215.0,485.2 215.5,484.6 216.0,484.0 216.5,483.7 217.0,483.3 217.5,482.9 218.0,482.6 218.5,482.2 219.0,482.4 219.5,482.2 220.0,481.9 220.5,481.8 221.0,482.1 221.5,482.1 222.0,482.6 222.5,482.5 223.0,482.8 223.5,483.5 224.0,483.5 224.5,484.2 225.0,484.5 225.5,485.3 226.0,485.7 226.5,486.3 227.0,486.5 227.5,487.3 228.0,487.7 228.5,488.1 229.0,488.7 229.5,489.1 230.0,489.0 230.5,489.4 231.0,489.6 231.5,489.7 232.0,489.6 232.5,489.8 233.0,489.6 233.5,489.8 234.0,489.4 234.5,489.0 235.0,488.8 235.5,488.5 236.0,488.0 236.5,487.4 237.0,486.8 237.5,486.2 238.0,486.3 238.5,485.6 239.0,484.6 239.5,484.4 240.0,484.0 240.5,483.3 241.0,482.5 241.5,482.3 242.0,481.8 242.5,481.3 243.0,481.2 243.5,480.7 244.0,481.0 244.5,480.7 245.0,480.7 245.5,480.9 246.0,480.8 246.5,480.7 247.0,480.9 247.5,481.1 248.0,481.3 248.5,482.1 249.0,482.6 249.5,482.7 250.0,483.0 250.5,483.7 251.0,484.3 251.5,484.8 252.0,484.8 252.5,485.6 253.0,486.0 253.5,486.3 254.0,486.3 254.5,486.4 255.0,487.0 255.5,486.8 256.0,486.9 256.5,487.0 257.0,486.8 257.5,487.0 258.0,486.5 258.5,486.1 259.0,486.2 259.5,485.9 260.0,485.7 260.5,485.3 261.0,485.0 261.5,484.7 262.0,484.0 262.5,483.6 263.0,483.1 263.5,482.8 264.0,482.7 264.5,482.1 265.0,482.3 265.5,481.8 266.0,481.8 266.5,482.1 267.0,481.6 267.5,481.6 268.0,481.9 268.5,481.9 269.0,482.4 269.5,482.2 270.0,483.0 270.5,483.3 271.0,483.6 271.5,483.7 272.0,484.0 272.5,484.7 273.0,485.0 273.5,485.3 274.0,485.7 274.5,486.2 275.0,486.7 275.5,487.1 276.0,487.5 276.5,487.4 277.0,487.7 277.5,488.0 278.0,488.3 278.5,488.3 279.0,488.3 279.5,488.3 280.0,488.4 280.5,488.4 281.0,488.5 281.5,488.3 282.0,488.0 282.5,487.7 283.0,487.3 283.5,486.7 284.0,486.3 284.5,485.4 285.0,485.2 285.5,484.7 286.0,483.9 286.5,483.6 287.0,483.2 287.5,482.4 288.0,482.0 288.5,481.4 289.0,480.9 289.5,480.9 290.0,480.0 290.5,479.8 291.0,479.9 291.5,479.6 292.0,479.3 292.5,479.6 293.0,479.5 293.5,479.8 294.0,480.0 294.5,480.5 295.0,481.0 295.5,481.5 296.0,482.0 296.5,482.7 297.0,483.9 297.5,484.4 298.0,484.9 298.5,486.1 299.0,486.4 299.5,487.0 300.0,487.8 300.5,488.1 301.0,488.6 301.5,488.9 302.0,488.8 302.5,489.0 303.0,488.7 303.5,488.9 304.0,488.8 304.5,488.4 305.0,488.4 305.5,488.0 306.0,487.9 306.5,487.9 307.0,487.4 307.5,487.2 308.0,486.9 308.5,486.1 309.0,486.3 309.5,485.8 310.0,485.0 310.5,485.1 311.0,484.5 311.5,484.1 312.0,484.2 312.5,483.7 313.0,483.6 313.5,482.9 314.0,483.1 314.5,482.5 315.0,482.5 315.5,482.5 316.0,482.2 316.5,482.6 317.0,482.4 317.5,482.6 318.0,483.0 318.5,483.1 319.0,483.7 319.5,483.9 320.0,484.4 320.5,484.7 321.0,485.3 321.5,485.7 322.0,485.7 322.5,486.4 323.0,486.5 323.5,487.0 324.0,487.2 324.5,487.4 325.0,487.1 325.5,487.2 326.0,487.4 326.5,487.4 327.0,487.0 327.5,486.4 328.0,486.4 328.5,485.8 329.0,485.7 329.5,485.4 330.0,484.6 330.5,484.6 331.0,484.0 331.5,483.3 332.0,482.9 332.5,482.6 333.0,482.5 333.5,482.0 334.0,481.4 334.5,481.1 335.0,481.0 335.5,481.3 336.0,480.8 336.5,481.0 337.0,481.0 337.5,481.3 338.0,481.4 338.5,481.5 339.0,482.3 339.5,482.6 340.0,483.1 340.5,483.7 341.0,484.4 341.5,484.4 342.0,485.2 342.5,485.8 343.0,486.6 343.5,487.5 344.0,488.1 344.5,488.2 345.0,488.9 345.5,489.8 346.0,490.2 346.5,490.4 347.0,490.8 347.5,490.9 348.0,491.6 348.5,491.5 349.0,491.8 349.5,491.7 350.0,491.3 350.5,491.3 351.0,491.0 351.5,491.1 352.0,490.6 352.5,489.9 353.0,489.5 353.5,489.1 354.0,488.7 354.5,488.2 355.0,487.5 355.5,486.9 356.0,486.1 356.5,485.9 357.0,485.2 357.5,484.4 358.0,484.2 358.5,484.0 359.0,483.0 359.5,482.7 360.0,482.7 360.5,482.2 361.0,482.0 361.5,482.1 362.0,481.9 362.5,482.1 363.0,482.1 363.5,482.5 364.0,482.8 364.5,482.5 365.0,483.1 365.5,483.6 366.0,484.1 366.5,484.4 367.0,484.8 367.5,485.3 368.0,485.6 368.5,486.0 369.0,486.8 369.5,487.3 370.0,487.7 370.5,487.9 371.0,488.0 371.5,488.5 372.0,488.7 372.5,488.7 373.0,488.9 373.5,488.7 374.0,488.8 374.5,488.6 375.0,488.2 375.5,488.1 376.0,487.8 376.5,487.9 377.0,487.2 377.5,486.7 378.0,486.2 378.5,485.8 379.0,485.4 379.5,484.9 380.0,484.3 380.5,484.5 381.0,483.8 381.5,483.5 382.0,483.2 382.5,482.8 383.0,482.5 383.5,482.3 384.0,482.4 384.5,482.4 385.0,482.7 385.5,482.7 386.0,483.0 386.5,482.9 387.0,483.5 387.5,483.6 388.0,483.6 388.5,484.0 389.0,484.7 389.5,485.4 390.0,485.5 390.5,486.2 391.0,486.5 391.5,487.2 392.0,487.2 392.5,488.0 393.0,488.7 393.5,488.8 394.0,489.2 394.5,489.5 395.0,489.9 395.5,490.3 396.0,490.8 396.5,490.8 397.0,491.1 397.5,491.1 398.0,491.4 398.5,491.6 399.0,491.4 399.5,490.9 400.0,490.8 400.5,490.4 401.0,489.5 401.5,488.5 402.0,488.1 402.5,487.4 403.0,486.4 403.5,485.6 404.0,485.1 404.5,484.9 405.0,484.8 405.5,484.6" fill="none" stroke="#E8952A" stroke-width="1"/><polyline points="73.0,500.6 73.5,501.0 74.0,502.3 74.5,502.6 75.0,500.9 75.5,498.9 76.0,501.0 76.5,502.1 77.0,503.8 77.5,505.3 78.0,506.0 78.5,507.0 79.0,508.5 79.5,505.4 80.0,500.0 80.5,495.4 81.0,491.3 81.5,487.8 82.0,484.3 82.5,480.2 83.0,477.2 83.5,474.0 84.0,472.2 84.5,469.3 85.0,466.9 85.5,464.7 86.0,462.4 86.5,460.6 87.0,458.5 87.5,456.0 88.0,454.6 88.5,451.8 89.0,449.4 89.5,447.7 90.0,446.5 90.5,444.9 91.0,442.4 91.5,440.6 92.0,440.0 92.5,438.2 93.0,437.7 93.5,450.9 94.0,480.9 94.5,485.9 95.0,491.7 95.5,496.7 96.0,497.9 96.5,499.0 97.0,498.6 97.5,499.7 98.0,499.6 98.5,500.6 99.0,501.2 99.5,502.6 100.0,501.3 100.5,499.6 101.0,499.2 101.5,501.8 102.0,503.1 102.5,504.0 103.0,504.8 103.5,506.1 104.0,507.4 104.5,507.1 105.0,502.3 105.5,497.7 106.0,493.7 106.5,489.3 107.0,485.2 107.5,482.3 108.0,477.8 108.5,474.9 109.0,472.2 109.5,470.6 110.0,468.2 110.5,465.3 111.0,463.4 111.5,461.2 112.0,458.4 112.5,456.2 113.0,454.2 113.5,452.3 114.0,449.4 114.5,447.9 115.0,446.0 115.5,444.0 116.0,442.4 116.5,440.9 117.0,438.6 117.5,438.0 118.0,436.1 118.5,435.2 119.0,472.4 119.5,483.3 120.0,489.4 120.5,495.0 121.0,497.7 121.5,497.9 122.0,498.5 122.5,499.8 123.0,499.4 123.5,500.8 124.0,500.7 124.5,502.2 125.0,502.3 125.5,500.1 126.0,498.7 126.5,500.3 127.0,502.1 127.5,503.9 128.0,505.0 128.5,506.4 129.0,507.8 129.5,508.2 130.0,504.3 130.5,500.2 131.0,495.5 131.5,490.2 132.0,486.9 132.5,482.9 133.0,479.4 133.5,475.3 134.0,472.8 134.5,471.4 135.0,468.4 135.5,466.6 136.0,463.5 136.5,461.5 137.0,459.0 137.5,457.0 138.0,454.6 138.5,452.8 139.0,450.1 139.5,448.4 140.0,446.4 140.5,444.3 141.0,442.7 141.5,441.1 142.0,439.7 142.5,437.9 143.0,436.4 143.5,435.9 144.0,457.7 144.5,482.1 145.0,487.1 145.5,492.5 146.0,498.0 146.5,498.3 147.0,498.8 147.5,499.7 148.0,500.1 148.5,500.8 149.0,501.1 149.5,501.7 150.0,503.3 150.5,502.1 151.0,499.8 151.5,500.5 152.0,502.5 152.5,504.1 153.0,505.3 153.5,506.4 154.0,507.4 154.5,508.6 155.0,506.9 155.5,502.8 156.0,497.6 156.5,492.9 157.0,488.8 157.5,484.8 158.0,482.0 158.5,477.3 159.0,474.9 159.5,472.9 160.0,469.8 160.5,467.8 161.0,465.3 161.5,462.8 162.0,460.5 162.5,458.2 163.0,456.7 163.5,454.4 164.0,452.3 164.5,449.2 165.0,447.9 165.5,445.8 166.0,444.3 166.5,442.5 167.0,440.5 167.5,439.7 168.0,437.4 168.5,436.9 169.0,443.3 169.5,479.7 170.0,485.2 170.5,491.0 171.0,495.7 171.5,498.4 172.0,499.0 172.5,499.2 173.0,500.0 173.5,500.2 174.0,500.8 174.5,501.6 175.0,502.6 175.5,502.4 176.0,500.5 176.5,499.3 177.0,501.1 177.5,502.9 178.0,503.8 178.5,505.7 179.0,506.6 179.5,508.1 180.0,508.5 180.5,503.9 181.0,499.0 181.5,494.4 182.0,490.7 182.5,486.6 183.0,483.0 183.5,479.3 184.0,476.1 184.5,473.2 185.0,470.8 185.5,469.2 186.0,466.5 186.5,464.4 187.0,462.3 187.5,460.1 188.0,457.9 188.5,454.9 189.0,453.1 189.5,451.3 190.0,449.2 190.5,446.8 191.0,445.1 191.5,443.4 192.0,441.5 192.5,440.1 193.0,439.3 193.5,437.8 194.0,436.4 194.5,464.8 195.0,482.6 195.5,488.5 196.0,493.5 196.5,497.5 197.0,498.0 197.5,498.8 198.0,499.3 198.5,499.1 199.0,500.2 199.5,500.4 200.0,501.5 200.5,502.1 201.0,500.5 201.5,498.3 202.0,499.9 202.5,501.2 203.0,502.6 203.5,504.2 204.0,505.0 204.5,506.3 205.0,508.1 205.5,504.8 206.0,500.4 206.5,495.7 207.0,491.8 207.5,487.2 208.0,484.1 208.5,480.7 209.0,476.4 209.5,474.0 210.0,472.0 210.5,469.6 211.0,467.0 211.5,464.4 212.0,462.5 212.5,460.2 213.0,458.4 213.5,455.8 214.0,453.7 214.5,451.8 215.0,449.7 215.5,447.4 216.0,445.7 216.5,444.2 217.0,442.8 217.5,440.3 218.0,439.7 218.5,438.2 219.0,436.5 219.5,450.3 220.0,479.7 220.5,484.7 221.0,490.6 221.5,495.5 222.0,497.2 222.5,497.7 223.0,498.5 223.5,498.9 224.0,498.6 224.5,499.6 225.0,500.3 225.5,501.2 226.0,501.5 226.5,499.0 227.0,498.1 227.5,500.6 228.0,501.4 228.5,502.7 229.0,503.9 229.5,505.5 230.0,506.5 230.5,507.6 231.0,502.8 231.5,498.1 232.0,494.3 232.5,489.8 233.0,486.5 233.5,483.0 234.0,478.8 234.5,475.4 235.0,473.0 235.5,471.5 236.0,468.6 236.5,466.4 237.0,464.8 237.5,462.4 238.0,459.8 238.5,458.3 239.0,456.3 239.5,453.9 240.0,451.4 240.5,450.0 241.0,448.0 241.5,446.5 242.0,445.2 242.5,443.4 243.0,441.8 243.5,439.8 244.0,438.8 244.5,437.8 245.0,450.9 245.5,481.8 246.0,486.4 246.5,491.6 247.0,497.0 247.5,498.5 248.0,499.6 248.5,499.7 249.0,500.2 249.5,500.6 250.0,500.7 250.5,501.7 251.0,503.2 251.5,503.1 252.0,501.0 252.5,499.5 253.0,501.4 253.5,502.6 254.0,504.3 254.5,505.4 255.0,506.7 255.5,508.0 256.0,509.1 256.5,504.4 257.0,500.4 257.5,495.3 258.0,491.5 258.5,487.6 259.0,483.5 259.5,480.2 260.0,476.8 260.5,474.4 261.0,472.3 261.5,469.8 262.0,467.5 262.5,465.8 263.0,463.0 263.5,461.3 264.0,459.2 264.5,456.9 265.0,454.6 265.5,452.9 266.0,450.3 266.5,448.9 267.0,446.4 267.5,445.1 268.0,443.6 268.5,441.3 269.0,440.8 269.5,438.7 270.0,438.0 270.5,451.0 271.0,481.0 271.5,485.8 272.0,491.2 272.5,496.2 273.0,497.6 273.5,498.1 274.0,498.2 274.5,498.6 275.0,499.7 275.5,499.5 276.0,501.1 276.5,501.2 277.0,500.6 277.5,498.5 278.0,499.0 278.5,501.1 279.0,501.8 279.5,503.3 280.0,504.1 280.5,506.0 281.0,507.0 281.5,506.0 282.0,501.4 282.5,497.6 283.0,492.5 283.5,489.1 284.0,485.0 284.5,481.4 285.0,478.1 285.5,474.7 286.0,472.7 286.5,470.0 287.0,468.5 287.5,465.7 288.0,463.9 288.5,461.0 289.0,459.5 289.5,457.5 290.0,454.8 290.5,452.2 291.0,450.4 291.5,448.7 292.0,446.5 292.5,445.1 293.0,442.9 293.5,441.6 294.0,440.3 294.5,438.7 295.0,437.7 295.5,435.9 296.0,472.9 296.5,484.1 297.0,490.3 297.5,495.7 298.0,499.3 298.5,499.3 299.0,499.6 299.5,500.1 300.0,501.0 300.5,501.2 301.0,502.3 301.5,502.3 302.0,503.6 302.5,502.3 303.0,499.8 303.5,501.1 304.0,502.4 304.5,503.7 305.0,505.1 305.5,507.0 306.0,508.2 306.5,508.8 307.0,507.6 307.5,502.1 308.0,498.1 308.5,493.9 309.0,489.2 309.5,486.2 310.0,482.2 310.5,478.0 311.0,475.2 311.5,473.0 312.0,470.5 312.5,468.7 313.0,465.8 313.5,464.1 314.0,461.3 314.5,458.9 315.0,457.2 315.5,454.5 316.0,452.7 316.5,450.8 317.0,448.5 317.5,446.6 318.0,444.4 318.5,443.1 319.0,441.0 319.5,439.9 320.0,438.1 320.5,437.2 321.0,435.7 321.5,464.5 322.0,482.3 322.5,487.1 323.0,492.5 323.5,497.5 324.0,497.4 324.5,498.4 325.0,498.9 325.5,499.0 326.0,499.1 326.5,499.7 327.0,501.3 327.5,501.5 328.0,500.1 328.5,498.0 329.0,499.1 329.5,501.1 330.0,502.1 330.5,503.7 331.0,504.9 331.5,506.0 332.0,507.1 332.5,504.5 333.0,499.7 333.5,495.1 334.0,490.7 334.5,487.4 335.0,483.4 335.5,480.2 336.0,475.6 336.5,473.9 337.0,471.1 337.5,469.1 338.0,466.6 338.5,464.4 339.0,461.6 339.5,459.9 340.0,457.2 340.5,455.1 341.0,452.7 341.5,450.8 342.0,448.8 342.5,446.7 343.0,445.5 343.5,443.0 344.0,441.7 344.5,439.6 345.0,438.6 345.5,437.5 346.0,436.2 346.5,449.3 347.0,479.6 347.5,485.3 348.0,491.0 348.5,495.4 349.0,497.5 349.5,498.1 350.0,498.7 350.5,498.7 351.0,499.7 351.5,499.8 352.0,501.1 352.5,501.1 353.0,501.8 353.5,499.1 354.0,498.4 354.5,500.2 355.0,501.6 355.5,503.4 356.0,504.5 356.5,505.3 357.0,506.7 357.5,507.0 358.0,502.6 358.5,498.1 359.0,493.7 359.5,490.0 360.0,486.4 360.5,482.6 361.0,478.8 361.5,475.3 362.0,473.4 362.5,471.2 363.0,468.8 363.5,466.5 364.0,463.8 364.5,462.0 365.0,460.1 365.5,457.9 366.0,455.1 366.5,453.6 367.0,451.1 367.5,448.8 368.0,447.9 368.5,446.0 369.0,444.3 369.5,442.1 370.0,441.1 370.5,440.0 371.0,438.7 371.5,437.4 372.0,458.2 372.5,481.7 373.0,486.7 373.5,491.7 374.0,497.4 374.5,497.9 375.0,498.4 375.5,498.3 376.0,499.4 376.5,499.5 377.0,500.4 377.5,500.4 378.0,502.2 378.5,501.2 379.0,498.5 379.5,499.3 380.0,500.6 380.5,501.8 381.0,503.2 381.5,504.2 382.0,505.7 382.5,507.4 383.0,506.5 383.5,502.1 384.0,497.3 384.5,493.3 385.0,489.2 385.5,485.5 386.0,482.2 386.5,478.6 387.0,475.0 387.5,472.5 388.0,470.8 388.5,468.7 389.0,466.0 389.5,464.0 390.0,462.0 390.5,459.9 391.0,457.0 391.5,455.3 392.0,452.7 392.5,450.7 393.0,449.4 393.5,447.3 394.0,445.8 394.5,443.9 395.0,442.1 395.5,440.4 396.0,439.3 396.5,438.6 397.0,437.1 397.5,465.3 398.0,482.7 398.5,488.2 399.0,493.9 399.5,498.0 400.0,498.7 400.5,499.3 401.0,499.1 401.5,500.2 402.0,500.0 402.5,501.3 403.0,501.6 403.5,502.6 404.0,501.7 404.5,499.0 405.0,500.0 405.5,502.4" fill="none" stroke="#000070" stroke-width="1"/></svg>
<svg width="32" height="13" viewBox="-2 -2 32 13" style="left:36px;top:103px" shape-rendering="crispEdges"><path fill="#601818" d="M1 0h1v1h-1zM0 1h2v1h-2zM1 2h1v1h-1zM1 3h1v1h-1zM1 4h1v1h-1zM1 5h1v1h-1zM1 6h1v1h-1zM1 7h1v1h-1zM0 8h3v1h-3zM8 0h2v1h-2zM7 1h1v1h-1zM10 1h1v1h-1zM7 2h1v1h-1zM10 2h1v1h-1zM7 3h1v1h-1zM10 3h1v1h-1zM7 4h1v1h-1zM10 4h1v1h-1zM7 5h1v1h-1zM10 5h1v1h-1zM7 6h1v1h-1zM10 6h1v1h-1zM7 7h1v1h-1zM10 7h1v1h-1zM8 8h2v1h-2zM15 7h2v1h-2zM15 8h2v1h-2zM22 0h2v1h-2zM21 1h1v1h-1zM24 1h1v1h-1zM21 2h1v1h-1zM24 2h1v1h-1zM21 3h1v1h-1zM24 3h1v1h-1zM21 4h1v1h-1zM24 4h1v1h-1zM21 5h1v1h-1zM24 5h1v1h-1zM21 6h1v1h-1zM24 6h1v1h-1zM21 7h1v1h-1zM24 7h1v1h-1zM22 8h2v1h-2z"/></svg>
<svg width="25" height="13" viewBox="-2 -2 25 13" style="left:43px;top:146px" shape-rendering="crispEdges"><path fill="#601818" d="M1 0h2v1h-2zM0 1h1v1h-1zM3 1h1v1h-1zM0 2h1v1h-1zM3 2h1v1h-1zM0 3h1v1h-1zM3 3h1v1h-1zM0 4h1v1h-1zM3 4h1v1h-1zM0 5h1v1h-1zM3 5h1v1h-1zM0 6h1v1h-1zM3 6h1v1h-1zM0 7h1v1h-1zM3 7h1v1h-1zM1 8h2v1h-2zM8 7h2v1h-2zM8 8h2v1h-2zM15 0h2v1h-2zM14 1h1v1h-1zM17 1h1v1h-1zM14 2h1v1h-1zM17 2h1v1h-1zM14 3h1v1h-1zM17 3h1v1h-1zM14 4h1v1h-1zM17 4h1v1h-1zM14 5h1v1h-1zM17 5h1v1h-1zM14 6h1v1h-1zM17 6h1v1h-1zM14 7h1v1h-1zM17 7h1v1h-1zM15 8h2v1h-2z"/></svg>
<svg width="39" height="13" viewBox="-2 -2 39 13" style="left:29px;top:188px" shape-rendering="crispEdges"><path fill="#601818" d="M0 4h4v1h-4zM8 0h1v1h-1zM7 1h2v1h-2zM8 2h1v1h-1zM8 3h1v1h-1zM8 4h1v1h-1zM8 5h1v1h-1zM8 6h1v1h-1zM8 7h1v1h-1zM7 8h3v1h-3zM15 0h2v1h-2zM14 1h1v1h-1zM17 1h1v1h-1zM14 2h1v1h-1zM17 2h1v1h-1zM14 3h1v1h-1zM17 3h1v1h-1zM14 4h1v1h-1zM17 4h1v1h-1zM14 5h1v1h-1zM17 5h1v1h-1zM14 6h1v1h-1zM17 6h1v1h-1zM14 7h1v1h-1zM17 7h1v1h-1zM15 8h2v1h-2zM22 7h2v1h-2zM22 8h2v1h-2zM29 0h2v1h-2zM28 1h1v1h-1zM31 1h1v1h-1zM28 2h1v1h-1zM31 2h1v1h-1zM28 3h1v1h-1zM31 3h1v1h-1zM28 4h1v1h-1zM31 4h1v1h-1zM28 5h1v1h-1zM31 5h1v1h-1zM28 6h1v1h-1zM31 6h1v1h-1zM28 7h1v1h-1zM31 7h1v1h-1zM29 8h2v1h-2z"/></svg>
<svg width="39" height="13" viewBox="-2 -2 39 13" style="left:29px;top:231px" shape-rendering="crispEdges"><path fill="#601818" d="M0 4h4v1h-4zM8 0h2v1h-2zM7 1h1v1h-1zM10 1h1v1h-1zM10 2h1v1h-1zM10 3h1v1h-1zM9 4h1v1h-1zM8 5h1v1h-1zM7 6h1v1h-1zM7 7h1v1h-1zM10 7h1v1h-1zM7 8h4v1h-4zM15 0h2v1h-2zM14 1h1v1h-1zM17 1h1v1h-1zM14 2h1v1h-1zM17 2h1v1h-1zM14 3h1v1h-1zM17 3h1v1h-1zM14 4h1v1h-1zM17 4h1v1h-1zM14 5h1v1h-1zM17 5h1v1h-1zM14 6h1v1h-1zM17 6h1v1h-1zM14 7h1v1h-1zM17 7h1v1h-1zM15 8h2v1h-2zM22 7h2v1h-2zM22 8h2v1h-2zM29 0h2v1h-2zM28 1h1v1h-1zM31 1h1v1h-1zM28 2h1v1h-1zM31 2h1v1h-1zM28 3h1v1h-1zM31 3h1v1h-1zM28 4h1v1h-1zM31 4h1v1h-1zM28 5h1v1h-1zM31 5h1v1h-1zM28 6h1v1h-1zM31 6h1v1h-1zM28 7h1v1h-1zM31 7h1v1h-1zM29 8h2v1h-2z"/></svg>
<svg width="39" height="13" viewBox="-2 -2 39 13" style="left:29px;top:273px" shape-rendering="crispEdges"><path fill="#601818" d="M0 4h4v1h-4zM8 0h2v1h-2zM7 1h1v1h-1zM10 1h1v1h-1zM10 2h1v1h-1zM9 3h1v1h-1zM8 4h2v1h-2zM10 5h1v1h-1zM10 6h1v1h-1zM7 7h1v1h-1zM10 7h1v1h-1zM8 8h2v1h-2zM15 0h2v1h-2zM14 1h1v1h-1zM17 1h1v1h-1zM14 2h1v1h-1zM17 2h1v1h-1zM14 3h1v1h-1zM17 3h1v1h-1zM14 4h1v1h-1zM17 4h1v1h-1zM14 5h1v1h-1zM17 5h1v1h-1zM14 6h1v1h-1zM17 6h1v1h-1zM14 7h1v1h-1zM17 7h1v1h-1zM15 8h2v1h-2zM22 7h2v1h-2zM22 8h2v1h-2zM29 0h2v1h-2zM28 1h1v1h-1zM31 1h1v1h-1zM28 2h1v1h-1zM31 2h1v1h-1zM28 3h1v1h-1zM31 3h1v1h-1zM28 4h1v1h-1zM31 4h1v1h-1zM28 5h1v1h-1zM31 5h1v1h-1zM28 6h1v1h-1zM31 6h1v1h-1zM28 7h1v1h-1zM31 7h1v1h-1zM29 8h2v1h-2z"/></svg>
<svg width="39" height="13" viewBox="-2 -2 39 13" style="left:29px;top:316px" shape-rendering="crispEdges"><path fill="#601818" d="M0 4h4v1h-4zM9 0h1v1h-1zM8 1h2v1h-2zM8 2h2v1h-2zM7 3h1v1h-1zM9 3h1v1h-1zM7 4h1v1h-1zM9 4h1v1h-1zM6 5h1v1h-1zM9 5h1v1h-1zM6 6h5v1h-5zM9 7h1v1h-1zM8 8h3v1h-3zM15 0h2v1h-2zM14 1h1v1h-1zM17 1h1v1h-1zM14 2h1v1h-1zM17 2h1v1h-1zM14 3h1v1h-1zM17 3h1v1h-1zM14 4h1v1h-1zM17 4h1v1h-1zM14 5h1v1h-1zM17 5h1v1h-1zM14 6h1v1h-1zM17 6h1v1h-1zM14 7h1v1h-1zM17 7h1v1h-1zM15 8h2v1h-2zM22 7h2v1h-2zM22 8h2v1h-2zM29 0h2v1h-2zM28 1h1v1h-1zM31 1h1v1h-1zM28 2h1v1h-1zM31 2h1v1h-1zM28 3h1v1h-1zM31 3h1v1h-1zM28 4h1v1h-1zM31 4h1v1h-1zM28 5h1v1h-1zM31 5h1v1h-1zM28 6h1v1h-1zM31 6h1v1h-1zM28 7h1v1h-1zM31 7h1v1h-1zM29 8h2v1h-2z"/></svg>
<svg width="39" height="13" viewBox="-2 -2 39 13" style="left:29px;top:358px" shape-rendering="crispEdges"><path fill="#601818" d="M0 4h4v1h-4zM7 0h4v1h-4zM7 1h1v1h-1zM7 2h1v1h-1zM7 3h3v1h-3zM10 4h1v1h-1zM10 5h1v1h-1zM10 6h1v1h-1zM7 7h1v1h-1zM10 7h1v1h-1zM8 8h2v1h-2zM15 0h2v1h-2zM14 1h1v1h-1zM17 1h1v1h-1zM14 2h1v1h-1zM17 2h1v1h-1zM14 3h1v1h-1zM17 3h1v1h-1zM14 4h1v1h-1zM17 4h1v1h-1zM14 5h1v1h-1zM17 5h1v1h-1zM14 6h1v1h-1zM17 6h1v1h-1zM14 7h1v1h-1zM17 7h1v1h-1zM15 8h2v1h-2zM22 7h2v1h-2zM22 8h2v1h-2zM29 0h2v1h-2zM28 1h1v1h-1zM31 1h1v1h-1zM28 2h1v1h-1zM31 2h1v1h-1zM28 3h1v1h-1zM31 3h1v1h-1zM28 4h1v1h-1zM31 4h1v1h-1zM28 5h1v1h-1zM31 5h1v1h-1zM28 6h1v1h-1zM31 6h1v1h-1zM28 7h1v1h-1zM31 7h1v1h-1zM29 8h2v1h-2z"/></svg>
<svg width="39" height="13" viewBox="-2 -2 39 13" style="left:29px;top:401px" shape-rendering="crispEdges"><path fill="#601818" d="M0 4h4v1h-4zM8 0h2v1h-2zM7 1h1v1h-1zM10 1h1v1h-1zM7 2h1v1h-1zM7 3h1v1h-1zM7 4h3v1h-3zM7 5h1v1h-1zM10 5h1v1h-1zM7 6h1v1h-1zM10 6h1v1h-1zM7 7h1v1h-1zM10 7h1v1h-1zM8 8h2v1h-2zM15 0h2v1h-2zM14 1h1v1h-1zM17 1h1v1h-1zM14 2h1v1h-1zM17 2h1v1h-1zM14 3h1v1h-1zM17 3h1v1h-1zM14 4h1v1h-1zM17 4h1v1h-1zM14 5h1v1h-1zM17 5h1v1h-1zM14 6h1v1h-1zM17 6h1v1h-1zM14 7h1v1h-1zM17 7h1v1h-1zM15 8h2v1h-2zM22 7h2v1h-2zM22 8h2v1h-2zM29 0h2v1h-2zM28 1h1v1h-1zM31 1h1v1h-1zM28 2h1v1h-1zM31 2h1v1h-1zM28 3h1v1h-1zM31 3h1v1h-1zM28 4h1v1h-1zM31 4h1v1h-1zM28 5h1v1h-1zM31 5h1v1h-1zM28 6h1v1h-1zM31 6h1v1h-1zM28 7h1v1h-1zM31 7h1v1h-1zM29 8h2v1h-2z"/></svg>
<svg width="39" height="13" viewBox="-2 -2 39 13" style="left:29px;top:443px" shape-rendering="crispEdges"><path fill="#601818" d="M0 4h4v1h-4zM7 0h4v1h-4zM7 1h1v1h-1zM10 1h1v1h-1zM10 2h1v1h-1zM9 3h1v1h-1zM9 4h1v1h-1zM9 5h1v1h-1zM8 6h1v1h-1zM8 7h1v1h-1zM8 8h1v1h-1zM15 0h2v1h-2zM14 1h1v1h-1zM17 1h1v1h-1zM14 2h1v1h-1zM17 2h1v1h-1zM14 3h1v1h-1zM17 3h1v1h-1zM14 4h1v1h-1zM17 4h1v1h-1zM14 5h1v1h-1zM17 5h1v1h-1zM14 6h1v1h-1zM17 6h1v1h-1zM14 7h1v1h-1zM17 7h1v1h-1zM15 8h2v1h-2zM22 7h2v1h-2zM22 8h2v1h-2zM29 0h2v1h-2zM28 1h1v1h-1zM31 1h1v1h-1zM28 2h1v1h-1zM31 2h1v1h-1zM28 3h1v1h-1zM31 3h1v1h-1zM28 4h1v1h-1zM31 4h1v1h-1zM28 5h1v1h-1zM31 5h1v1h-1zM28 6h1v1h-1zM31 6h1v1h-1zM28 7h1v1h-1zM31 7h1v1h-1zM29 8h2v1h-2z"/></svg>
<svg width="39" height="13" viewBox="-2 -2 39 13" style="left:29px;top:486px" shape-rendering="crispEdges"><path fill="#601818" d="M0 4h4v1h-4zM8 0h2v1h-2zM7 1h1v1h-1zM10 1h1v1h-1zM7 2h1v1h-1zM10 2h1v1h-1zM7 3h1v1h-1zM10 3h1v1h-1zM8 4h2v1h-2zM7 5h1v1h-1zM10 5h1v1h-1zM7 6h1v1h-1zM10 6h1v1h-1zM7 7h1v1h-1zM10 7h1v1h-1zM8 8h2v1h-2zM15 0h2v1h-2zM14 1h1v1h-1zM17 1h1v1h-1zM14 2h1v1h-1zM17 2h1v1h-1zM14 3h1v1h-1zM17 3h1v1h-1zM14 4h1v1h-1zM17 4h1v1h-1zM14 5h1v1h-1zM17 5h1v1h-1zM14 6h1v1h-1zM17 6h1v1h-1zM14 7h1v1h-1zM17 7h1v1h-1zM15 8h2v1h-2zM22 7h2v1h-2zM22 8h2v1h-2zM29 0h2v1h-2zM28 1h1v1h-1zM31 1h1v1h-1zM28 2h1v1h-1zM31 2h1v1h-1zM28 3h1v1h-1zM31 3h1v1h-1zM28 4h1v1h-1zM31 4h1v1h-1zM28 5h1v1h-1zM31 5h1v1h-1zM28 6h1v1h-1zM31 6h1v1h-1zM28 7h1v1h-1zM31 7h1v1h-1zM29 8h2v1h-2z"/></svg>
<svg width="39" height="13" viewBox="-2 -2 39 13" style="left:29px;top:527px" shape-rendering="crispEdges"><path fill="#601818" d="M0 4h4v1h-4zM8 0h2v1h-2zM7 1h1v1h-1zM10 1h1v1h-1zM7 2h1v1h-1zM10 2h1v1h-1zM7 3h1v1h-1zM10 3h1v1h-1zM8 4h3v1h-3zM10 5h1v1h-1zM10 6h1v1h-1zM7 7h1v1h-1zM10 7h1v1h-1zM8 8h2v1h-2zM15 0h2v1h-2zM14 1h1v1h-1zM17 1h1v1h-1zM14 2h1v1h-1zM17 2h1v1h-1zM14 3h1v1h-1zM17 3h1v1h-1zM14 4h1v1h-1zM17 4h1v1h-1zM14 5h1v1h-1zM17 5h1v1h-1zM14 6h1v1h-1zM17 6h1v1h-1zM14 7h1v1h-1zM17 7h1v1h-1zM15 8h2v1h-2zM22 7h2v1h-2zM22 8h2v1h-2zM29 0h2v1h-2zM28 1h1v1h-1zM31 1h1v1h-1zM28 2h1v1h-1zM31 2h1v1h-1zM28 3h1v1h-1zM31 3h1v1h-1zM28 4h1v1h-1zM31 4h1v1h-1zM28 5h1v1h-1zM31 5h1v1h-1zM28 6h1v1h-1zM31 6h1v1h-1zM28 7h1v1h-1zM31 7h1v1h-1zM29 8h2v1h-2z"/></svg>
<svg width="18" height="13" viewBox="-2 -2 18 13" style="left:56px;top:91px" shape-rendering="crispEdges"><path fill="#601818" d="M0 0h2v1h-2zM3 0h2v1h-2zM0 1h1v1h-1zM4 1h1v1h-1zM1 2h1v1h-1zM3 2h1v1h-1zM1 3h1v1h-1zM3 3h1v1h-1zM2 4h1v1h-1zM2 5h1v1h-1zM2 6h1v1h-1zM2 7h1v1h-1zM1 8h3v1h-3zM8 0h1v1h-1zM7 1h2v1h-2zM8 2h1v1h-1zM8 3h1v1h-1zM8 4h1v1h-1zM8 5h1v1h-1zM8 6h1v1h-1zM8 7h1v1h-1zM7 8h3v1h-3z"/></svg>
<svg width="74" height="13" viewBox="-2 -2 74 13" style="left:76px;top:557px" shape-rendering="crispEdges"><path fill="#000" d="M1 0h2v1h-2zM0 1h1v1h-1zM3 1h1v1h-1zM3 2h1v1h-1zM3 3h1v1h-1zM2 4h1v1h-1zM1 5h1v1h-1zM0 6h1v1h-1zM0 7h1v1h-1zM3 7h1v1h-1zM0 8h4v1h-4zM8 0h2v1h-2zM7 1h1v1h-1zM10 1h1v1h-1zM7 2h1v1h-1zM10 2h1v1h-1zM7 3h1v1h-1zM10 3h1v1h-1zM7 4h1v1h-1zM10 4h1v1h-1zM7 5h1v1h-1zM10 5h1v1h-1zM7 6h1v1h-1zM10 6h1v1h-1zM7 7h1v1h-1zM10 7h1v1h-1zM8 8h2v1h-2zM15 0h2v1h-2zM14 1h1v1h-1zM17 1h1v1h-1zM17 2h1v1h-1zM17 3h1v1h-1zM16 4h1v1h-1zM15 5h1v1h-1zM14 6h1v1h-1zM14 7h1v1h-1zM17 7h1v1h-1zM14 8h4v1h-4zM22 0h2v1h-2zM21 1h1v1h-1zM24 1h1v1h-1zM21 2h1v1h-1zM21 3h1v1h-1zM21 4h3v1h-3zM21 5h1v1h-1zM24 5h1v1h-1zM21 6h1v1h-1zM24 6h1v1h-1zM21 7h1v1h-1zM24 7h1v1h-1zM22 8h2v1h-2zM31 -1h1v1h-1zM31 0h1v1h-1zM30 1h1v1h-1zM30 2h1v1h-1zM29 3h1v1h-1zM29 4h1v1h-1zM29 5h1v1h-1zM28 6h1v1h-1zM28 7h1v1h-1zM27 8h1v1h-1zM27 9h1v1h-1zM36 0h2v1h-2zM35 1h1v1h-1zM38 1h1v1h-1zM35 2h1v1h-1zM38 2h1v1h-1zM35 3h1v1h-1zM38 3h1v1h-1zM35 4h1v1h-1zM38 4h1v1h-1zM35 5h1v1h-1zM38 5h1v1h-1zM35 6h1v1h-1zM38 6h1v1h-1zM35 7h1v1h-1zM38 7h1v1h-1zM36 8h2v1h-2zM44 0h1v1h-1zM43 1h2v1h-2zM43 2h2v1h-2zM42 3h1v1h-1zM44 3h1v1h-1zM42 4h1v1h-1zM44 4h1v1h-1zM41 5h1v1h-1zM44 5h1v1h-1zM41 6h5v1h-5zM44 7h1v1h-1zM43 8h3v1h-3zM52 -1h1v1h-1zM52 0h1v1h-1zM51 1h1v1h-1zM51 2h1v1h-1zM50 3h1v1h-1zM50 4h1v1h-1zM50 5h1v1h-1zM49 6h1v1h-1zM49 7h1v1h-1zM48 8h1v1h-1zM48 9h1v1h-1zM57 0h1v1h-1zM56 1h2v1h-2zM57 2h1v1h-1zM57 3h1v1h-1zM57 4h1v1h-1zM57 5h1v1h-1zM57 6h1v1h-1zM57 7h1v1h-1zM56 8h3v1h-3zM65 0h1v1h-1zM64 1h2v1h-2zM64 2h2v1h-2zM63 3h1v1h-1zM65 3h1v1h-1zM63 4h1v1h-1zM65 4h1v1h-1zM62 5h1v1h-1zM65 5h1v1h-1zM62 6h5v1h-5zM65 7h1v1h-1zM64 8h3v1h-3z"/></svg>
<svg width="67" height="13" viewBox="-2 -2 67 13" style="left:75px;top:570px" shape-rendering="crispEdges"><path fill="#000" d="M1 0h2v1h-2zM0 1h1v1h-1zM3 1h1v1h-1zM0 2h1v1h-1zM3 2h1v1h-1zM0 3h1v1h-1zM3 3h1v1h-1zM1 4h2v1h-2zM0 5h1v1h-1zM3 5h1v1h-1zM0 6h1v1h-1zM3 6h1v1h-1zM0 7h1v1h-1zM3 7h1v1h-1zM1 8h2v1h-2zM8 1h2v1h-2zM8 2h2v1h-2zM8 6h2v1h-2zM8 7h2v1h-2zM15 0h2v1h-2zM14 1h1v1h-1zM17 1h1v1h-1zM14 2h1v1h-1zM17 2h1v1h-1zM14 3h1v1h-1zM17 3h1v1h-1zM14 4h1v1h-1zM17 4h1v1h-1zM14 5h1v1h-1zM17 5h1v1h-1zM14 6h1v1h-1zM17 6h1v1h-1zM14 7h1v1h-1zM17 7h1v1h-1zM15 8h2v1h-2zM22 0h1v1h-1zM21 1h2v1h-2zM22 2h1v1h-1zM22 3h1v1h-1zM22 4h1v1h-1zM22 5h1v1h-1zM22 6h1v1h-1zM22 7h1v1h-1zM21 8h3v1h-3zM29 1h2v1h-2zM29 2h2v1h-2zM29 6h2v1h-2zM29 7h2v1h-2zM35 0h4v1h-4zM35 1h1v1h-1zM35 2h1v1h-1zM35 3h3v1h-3zM38 4h1v1h-1zM38 5h1v1h-1zM38 6h1v1h-1zM35 7h1v1h-1zM38 7h1v1h-1zM36 8h2v1h-2zM43 0h2v1h-2zM42 1h1v1h-1zM45 1h1v1h-1zM45 2h1v1h-1zM45 3h1v1h-1zM44 4h1v1h-1zM43 5h1v1h-1zM42 6h1v1h-1zM42 7h1v1h-1zM45 7h1v1h-1zM42 8h4v1h-4zM50 7h2v1h-2zM50 8h2v1h-2zM56 0h4v1h-4zM56 1h1v1h-1zM59 1h1v1h-1zM59 2h1v1h-1zM58 3h1v1h-1zM58 4h1v1h-1zM58 5h1v1h-1zM57 6h1v1h-1zM57 7h1v1h-1zM57 8h1v1h-1z"/></svg>
<svg width="74" height="13" viewBox="-2 -2 74 13" style="left:218px;top:557px" shape-rendering="crispEdges"><path fill="#000" d="M1 0h2v1h-2zM0 1h1v1h-1zM3 1h1v1h-1zM3 2h1v1h-1zM3 3h1v1h-1zM2 4h1v1h-1zM1 5h1v1h-1zM0 6h1v1h-1zM0 7h1v1h-1zM3 7h1v1h-1zM0 8h4v1h-4zM8 0h2v1h-2zM7 1h1v1h-1zM10 1h1v1h-1zM7 2h1v1h-1zM10 2h1v1h-1zM7 3h1v1h-1zM10 3h1v1h-1zM7 4h1v1h-1zM10 4h1v1h-1zM7 5h1v1h-1zM10 5h1v1h-1zM7 6h1v1h-1zM10 6h1v1h-1zM7 7h1v1h-1zM10 7h1v1h-1zM8 8h2v1h-2zM15 0h2v1h-2zM14 1h1v1h-1zM17 1h1v1h-1zM17 2h1v1h-1zM17 3h1v1h-1zM16 4h1v1h-1zM15 5h1v1h-1zM14 6h1v1h-1zM14 7h1v1h-1zM17 7h1v1h-1zM14 8h4v1h-4zM22 0h2v1h-2zM21 1h1v1h-1zM24 1h1v1h-1zM21 2h1v1h-1zM21 3h1v1h-1zM21 4h3v1h-3zM21 5h1v1h-1zM24 5h1v1h-1zM21 6h1v1h-1zM24 6h1v1h-1zM21 7h1v1h-1zM24 7h1v1h-1zM22 8h2v1h-2zM31 -1h1v1h-1zM31 0h1v1h-1zM30 1h1v1h-1zM30 2h1v1h-1zM29 3h1v1h-1zM29 4h1v1h-1zM29 5h1v1h-1zM28 6h1v1h-1zM28 7h1v1h-1zM27 8h1v1h-1zM27 9h1v1h-1zM36 0h2v1h-2zM35 1h1v1h-1zM38 1h1v1h-1zM35 2h1v1h-1zM38 2h1v1h-1zM35 3h1v1h-1zM38 3h1v1h-1zM35 4h1v1h-1zM38 4h1v1h-1zM35 5h1v1h-1zM38 5h1v1h-1zM35 6h1v1h-1zM38 6h1v1h-1zM35 7h1v1h-1zM38 7h1v1h-1zM36 8h2v1h-2zM44 0h1v1h-1zM43 1h2v1h-2zM43 2h2v1h-2zM42 3h1v1h-1zM44 3h1v1h-1zM42 4h1v1h-1zM44 4h1v1h-1zM41 5h1v1h-1zM44 5h1v1h-1zM41 6h5v1h-5zM44 7h1v1h-1zM43 8h3v1h-3zM52 -1h1v1h-1zM52 0h1v1h-1zM51 1h1v1h-1zM51 2h1v1h-1zM50 3h1v1h-1zM50 4h1v1h-1zM50 5h1v1h-1zM49 6h1v1h-1zM49 7h1v1h-1zM48 8h1v1h-1zM48 9h1v1h-1zM57 0h1v1h-1zM56 1h2v1h-2zM57 2h1v1h-1zM57 3h1v1h-1zM57 4h1v1h-1zM57 5h1v1h-1zM57 6h1v1h-1zM57 7h1v1h-1zM56 8h3v1h-3zM65 0h1v1h-1zM64 1h2v1h-2zM64 2h2v1h-2zM63 3h1v1h-1zM65 3h1v1h-1zM63 4h1v1h-1zM65 4h1v1h-1zM62 5h1v1h-1zM65 5h1v1h-1zM62 6h5v1h-5zM65 7h1v1h-1zM64 8h3v1h-3z"/></svg>
<svg width="74" height="13" viewBox="-2 -2 74 13" style="left:217px;top:570px" shape-rendering="crispEdges"><path fill="#000" d="M1 0h1v1h-1zM0 1h2v1h-2zM1 2h1v1h-1zM1 3h1v1h-1zM1 4h1v1h-1zM1 5h1v1h-1zM1 6h1v1h-1zM1 7h1v1h-1zM0 8h3v1h-3zM8 0h1v1h-1zM7 1h2v1h-2zM8 2h1v1h-1zM8 3h1v1h-1zM8 4h1v1h-1zM8 5h1v1h-1zM8 6h1v1h-1zM8 7h1v1h-1zM7 8h3v1h-3zM15 1h2v1h-2zM15 2h2v1h-2zM15 6h2v1h-2zM15 7h2v1h-2zM21 0h4v1h-4zM21 1h1v1h-1zM21 2h1v1h-1zM21 3h3v1h-3zM24 4h1v1h-1zM24 5h1v1h-1zM24 6h1v1h-1zM21 7h1v1h-1zM24 7h1v1h-1zM22 8h2v1h-2zM29 0h1v1h-1zM28 1h2v1h-2zM29 2h1v1h-1zM29 3h1v1h-1zM29 4h1v1h-1zM29 5h1v1h-1zM29 6h1v1h-1zM29 7h1v1h-1zM28 8h3v1h-3zM36 1h2v1h-2zM36 2h2v1h-2zM36 6h2v1h-2zM36 7h2v1h-2zM44 0h1v1h-1zM43 1h2v1h-2zM43 2h2v1h-2zM42 3h1v1h-1zM44 3h1v1h-1zM42 4h1v1h-1zM44 4h1v1h-1zM41 5h1v1h-1zM44 5h1v1h-1zM41 6h5v1h-5zM44 7h1v1h-1zM43 8h3v1h-3zM50 0h2v1h-2zM49 1h1v1h-1zM52 1h1v1h-1zM52 2h1v1h-1zM52 3h1v1h-1zM51 4h1v1h-1zM50 5h1v1h-1zM49 6h1v1h-1zM49 7h1v1h-1zM52 7h1v1h-1zM49 8h4v1h-4zM57 7h2v1h-2zM57 8h2v1h-2zM63 0h4v1h-4zM63 1h1v1h-1zM66 1h1v1h-1zM66 2h1v1h-1zM65 3h1v1h-1zM65 4h1v1h-1zM65 5h1v1h-1zM64 6h1v1h-1zM64 7h1v1h-1zM64 8h1v1h-1z"/></svg>
<svg width="74" height="13" viewBox="-2 -2 74 13" style="left:361px;top:557px" shape-rendering="crispEdges"><path fill="#000" d="M1 0h2v1h-2zM0 1h1v1h-1zM3 1h1v1h-1zM3 2h1v1h-1zM3 3h1v1h-1zM2 4h1v1h-1zM1 5h1v1h-1zM0 6h1v1h-1zM0 7h1v1h-1zM3 7h1v1h-1zM0 8h4v1h-4zM8 0h2v1h-2zM7 1h1v1h-1zM10 1h1v1h-1zM7 2h1v1h-1zM10 2h1v1h-1zM7 3h1v1h-1zM10 3h1v1h-1zM7 4h1v1h-1zM10 4h1v1h-1zM7 5h1v1h-1zM10 5h1v1h-1zM7 6h1v1h-1zM10 6h1v1h-1zM7 7h1v1h-1zM10 7h1v1h-1zM8 8h2v1h-2zM15 0h2v1h-2zM14 1h1v1h-1zM17 1h1v1h-1zM17 2h1v1h-1zM17 3h1v1h-1zM16 4h1v1h-1zM15 5h1v1h-1zM14 6h1v1h-1zM14 7h1v1h-1zM17 7h1v1h-1zM14 8h4v1h-4zM22 0h2v1h-2zM21 1h1v1h-1zM24 1h1v1h-1zM21 2h1v1h-1zM21 3h1v1h-1zM21 4h3v1h-3zM21 5h1v1h-1zM24 5h1v1h-1zM21 6h1v1h-1zM24 6h1v1h-1zM21 7h1v1h-1zM24 7h1v1h-1zM22 8h2v1h-2zM31 -1h1v1h-1zM31 0h1v1h-1zM30 1h1v1h-1zM30 2h1v1h-1zM29 3h1v1h-1zM29 4h1v1h-1zM29 5h1v1h-1zM28 6h1v1h-1zM28 7h1v1h-1zM27 8h1v1h-1zM27 9h1v1h-1zM36 0h2v1h-2zM35 1h1v1h-1zM38 1h1v1h-1zM35 2h1v1h-1zM38 2h1v1h-1zM35 3h1v1h-1zM38 3h1v1h-1zM35 4h1v1h-1zM38 4h1v1h-1zM35 5h1v1h-1zM38 5h1v1h-1zM35 6h1v1h-1zM38 6h1v1h-1zM35 7h1v1h-1zM38 7h1v1h-1zM36 8h2v1h-2zM44 0h1v1h-1zM43 1h2v1h-2zM43 2h2v1h-2zM42 3h1v1h-1zM44 3h1v1h-1zM42 4h1v1h-1zM44 4h1v1h-1zM41 5h1v1h-1zM44 5h1v1h-1zM41 6h5v1h-5zM44 7h1v1h-1zM43 8h3v1h-3zM52 -1h1v1h-1zM52 0h1v1h-1zM51 1h1v1h-1zM51 2h1v1h-1zM50 3h1v1h-1zM50 4h1v1h-1zM50 5h1v1h-1zM49 6h1v1h-1zM49 7h1v1h-1zM48 8h1v1h-1zM48 9h1v1h-1zM57 0h1v1h-1zM56 1h2v1h-2zM57 2h1v1h-1zM57 3h1v1h-1zM57 4h1v1h-1zM57 5h1v1h-1zM57 6h1v1h-1zM57 7h1v1h-1zM56 8h3v1h-3zM65 0h1v1h-1zM64 1h2v1h-2zM64 2h2v1h-2zM63 3h1v1h-1zM65 3h1v1h-1zM63 4h1v1h-1zM65 4h1v1h-1zM62 5h1v1h-1zM65 5h1v1h-1zM62 6h5v1h-5zM65 7h1v1h-1zM64 8h3v1h-3z"/></svg>
<svg width="74" height="13" viewBox="-2 -2 74 13" style="left:360px;top:570px" shape-rendering="crispEdges"><path fill="#000" d="M1 0h1v1h-1zM0 1h2v1h-2zM1 2h1v1h-1zM1 3h1v1h-1zM1 4h1v1h-1zM1 5h1v1h-1zM1 6h1v1h-1zM1 7h1v1h-1zM0 8h3v1h-3zM7 0h4v1h-4zM7 1h1v1h-1zM7 2h1v1h-1zM7 3h3v1h-3zM10 4h1v1h-1zM10 5h1v1h-1zM10 6h1v1h-1zM7 7h1v1h-1zM10 7h1v1h-1zM8 8h2v1h-2zM15 1h2v1h-2zM15 2h2v1h-2zM15 6h2v1h-2zM15 7h2v1h-2zM23 0h1v1h-1zM22 1h2v1h-2zM22 2h2v1h-2zM21 3h1v1h-1zM23 3h1v1h-1zM21 4h1v1h-1zM23 4h1v1h-1zM20 5h1v1h-1zM23 5h1v1h-1zM20 6h5v1h-5zM23 7h1v1h-1zM22 8h3v1h-3zM29 0h1v1h-1zM28 1h2v1h-2zM29 2h1v1h-1zM29 3h1v1h-1zM29 4h1v1h-1zM29 5h1v1h-1zM29 6h1v1h-1zM29 7h1v1h-1zM28 8h3v1h-3zM36 1h2v1h-2zM36 2h2v1h-2zM36 6h2v1h-2zM36 7h2v1h-2zM43 0h2v1h-2zM42 1h1v1h-1zM45 1h1v1h-1zM45 2h1v1h-1zM44 3h1v1h-1zM43 4h2v1h-2zM45 5h1v1h-1zM45 6h1v1h-1zM42 7h1v1h-1zM45 7h1v1h-1zM43 8h2v1h-2zM50 0h2v1h-2zM49 1h1v1h-1zM52 1h1v1h-1zM52 2h1v1h-1zM52 3h1v1h-1zM51 4h1v1h-1zM50 5h1v1h-1zM49 6h1v1h-1zM49 7h1v1h-1zM52 7h1v1h-1zM49 8h4v1h-4zM57 7h2v1h-2zM57 8h2v1h-2zM63 0h4v1h-4zM63 1h1v1h-1zM66 1h1v1h-1zM66 2h1v1h-1zM65 3h1v1h-1zM65 4h1v1h-1zM65 5h1v1h-1zM64 6h1v1h-1zM64 7h1v1h-1zM64 8h1v1h-1z"/></svg>
<svg width="74" height="13" viewBox="-2 -2 74 13" style="left:504px;top:557px" shape-rendering="crispEdges"><path fill="#000" d="M1 0h2v1h-2zM0 1h1v1h-1zM3 1h1v1h-1zM3 2h1v1h-1zM3 3h1v1h-1zM2 4h1v1h-1zM1 5h1v1h-1zM0 6h1v1h-1zM0 7h1v1h-1zM3 7h1v1h-1zM0 8h4v1h-4zM8 0h2v1h-2zM7 1h1v1h-1zM10 1h1v1h-1zM7 2h1v1h-1zM10 2h1v1h-1zM7 3h1v1h-1zM10 3h1v1h-1zM7 4h1v1h-1zM10 4h1v1h-1zM7 5h1v1h-1zM10 5h1v1h-1zM7 6h1v1h-1zM10 6h1v1h-1zM7 7h1v1h-1zM10 7h1v1h-1zM8 8h2v1h-2zM15 0h2v1h-2zM14 1h1v1h-1zM17 1h1v1h-1zM17 2h1v1h-1zM17 3h1v1h-1zM16 4h1v1h-1zM15 5h1v1h-1zM14 6h1v1h-1zM14 7h1v1h-1zM17 7h1v1h-1zM14 8h4v1h-4zM22 0h2v1h-2zM21 1h1v1h-1zM24 1h1v1h-1zM21 2h1v1h-1zM21 3h1v1h-1zM21 4h3v1h-3zM21 5h1v1h-1zM24 5h1v1h-1zM21 6h1v1h-1zM24 6h1v1h-1zM21 7h1v1h-1zM24 7h1v1h-1zM22 8h2v1h-2zM31 -1h1v1h-1zM31 0h1v1h-1zM30 1h1v1h-1zM30 2h1v1h-1zM29 3h1v1h-1zM29 4h1v1h-1zM29 5h1v1h-1zM28 6h1v1h-1zM28 7h1v1h-1zM27 8h1v1h-1zM27 9h1v1h-1zM36 0h2v1h-2zM35 1h1v1h-1zM38 1h1v1h-1zM35 2h1v1h-1zM38 2h1v1h-1zM35 3h1v1h-1zM38 3h1v1h-1zM35 4h1v1h-1zM38 4h1v1h-1zM35 5h1v1h-1zM38 5h1v1h-1zM35 6h1v1h-1zM38 6h1v1h-1zM35 7h1v1h-1zM38 7h1v1h-1zM36 8h2v1h-2zM44 0h1v1h-1zM43 1h2v1h-2zM43 2h2v1h-2zM42 3h1v1h-1zM44 3h1v1h-1zM42 4h1v1h-1zM44 4h1v1h-1zM41 5h1v1h-1zM44 5h1v1h-1zM41 6h5v1h-5zM44 7h1v1h-1zM43 8h3v1h-3zM52 -1h1v1h-1zM52 0h1v1h-1zM51 1h1v1h-1zM51 2h1v1h-1zM50 3h1v1h-1zM50 4h1v1h-1zM50 5h1v1h-1zM49 6h1v1h-1zM49 7h1v1h-1zM48 8h1v1h-1zM48 9h1v1h-1zM57 0h1v1h-1zM56 1h2v1h-2zM57 2h1v1h-1zM57 3h1v1h-1zM57 4h1v1h-1zM57 5h1v1h-1zM57 6h1v1h-1zM57 7h1v1h-1zM56 8h3v1h-3zM65 0h1v1h-1zM64 1h2v1h-2zM64 2h2v1h-2zM63 3h1v1h-1zM65 3h1v1h-1zM63 4h1v1h-1zM65 4h1v1h-1zM62 5h1v1h-1zM65 5h1v1h-1zM62 6h5v1h-5zM65 7h1v1h-1zM64 8h3v1h-3z"/></svg>
<svg width="74" height="13" viewBox="-2 -2 74 13" style="left:503px;top:570px" shape-rendering="crispEdges"><path fill="#000" d="M1 0h1v1h-1zM0 1h2v1h-2zM1 2h1v1h-1zM1 3h1v1h-1zM1 4h1v1h-1zM1 5h1v1h-1zM1 6h1v1h-1zM1 7h1v1h-1zM0 8h3v1h-3zM8 0h2v1h-2zM7 1h1v1h-1zM10 1h1v1h-1zM7 2h1v1h-1zM10 2h1v1h-1zM7 3h1v1h-1zM10 3h1v1h-1zM8 4h3v1h-3zM10 5h1v1h-1zM10 6h1v1h-1zM7 7h1v1h-1zM10 7h1v1h-1zM8 8h2v1h-2zM15 1h2v1h-2zM15 2h2v1h-2zM15 6h2v1h-2zM15 7h2v1h-2zM22 0h2v1h-2zM21 1h1v1h-1zM24 1h1v1h-1zM24 2h1v1h-1zM23 3h1v1h-1zM22 4h2v1h-2zM24 5h1v1h-1zM24 6h1v1h-1zM21 7h1v1h-1zM24 7h1v1h-1zM22 8h2v1h-2zM29 0h1v1h-1zM28 1h2v1h-2zM29 2h1v1h-1zM29 3h1v1h-1zM29 4h1v1h-1zM29 5h1v1h-1zM29 6h1v1h-1zM29 7h1v1h-1zM28 8h3v1h-3zM36 1h2v1h-2zM36 2h2v1h-2zM36 6h2v1h-2zM36 7h2v1h-2zM43 0h2v1h-2zM42 1h1v1h-1zM45 1h1v1h-1zM45 2h1v1h-1zM45 3h1v1h-1zM44 4h1v1h-1zM43 5h1v1h-1zM42 6h1v1h-1zM42 7h1v1h-1zM45 7h1v1h-1zM42 8h4v1h-4zM50 0h2v1h-2zM49 1h1v1h-1zM52 1h1v1h-1zM52 2h1v1h-1zM52 3h1v1h-1zM51 4h1v1h-1zM50 5h1v1h-1zM49 6h1v1h-1zM49 7h1v1h-1zM52 7h1v1h-1zM49 8h4v1h-4zM57 7h2v1h-2zM57 8h2v1h-2zM63 0h4v1h-4zM63 1h1v1h-1zM66 1h1v1h-1zM66 2h1v1h-1zM65 3h1v1h-1zM65 4h1v1h-1zM65 5h1v1h-1zM64 6h1v1h-1zM64 7h1v1h-1zM64 8h1v1h-1z"/></svg>
<svg width="74" height="13" viewBox="-2 -2 74 13" style="left:646px;top:557px" shape-rendering="crispEdges"><path fill="#000" d="M1 0h2v1h-2zM0 1h1v1h-1zM3 1h1v1h-1zM3 2h1v1h-1zM3 3h1v1h-1zM2 4h1v1h-1zM1 5h1v1h-1zM0 6h1v1h-1zM0 7h1v1h-1zM3 7h1v1h-1zM0 8h4v1h-4zM8 0h2v1h-2zM7 1h1v1h-1zM10 1h1v1h-1zM7 2h1v1h-1zM10 2h1v1h-1zM7 3h1v1h-1zM10 3h1v1h-1zM7 4h1v1h-1zM10 4h1v1h-1zM7 5h1v1h-1zM10 5h1v1h-1zM7 6h1v1h-1zM10 6h1v1h-1zM7 7h1v1h-1zM10 7h1v1h-1zM8 8h2v1h-2zM15 0h2v1h-2zM14 1h1v1h-1zM17 1h1v1h-1zM17 2h1v1h-1zM17 3h1v1h-1zM16 4h1v1h-1zM15 5h1v1h-1zM14 6h1v1h-1zM14 7h1v1h-1zM17 7h1v1h-1zM14 8h4v1h-4zM22 0h2v1h-2zM21 1h1v1h-1zM24 1h1v1h-1zM21 2h1v1h-1zM21 3h1v1h-1zM21 4h3v1h-3zM21 5h1v1h-1zM24 5h1v1h-1zM21 6h1v1h-1zM24 6h1v1h-1zM21 7h1v1h-1zM24 7h1v1h-1zM22 8h2v1h-2zM31 -1h1v1h-1zM31 0h1v1h-1zM30 1h1v1h-1zM30 2h1v1h-1zM29 3h1v1h-1zM29 4h1v1h-1zM29 5h1v1h-1zM28 6h1v1h-1zM28 7h1v1h-1zM27 8h1v1h-1zM27 9h1v1h-1zM36 0h2v1h-2zM35 1h1v1h-1zM38 1h1v1h-1zM35 2h1v1h-1zM38 2h1v1h-1zM35 3h1v1h-1zM38 3h1v1h-1zM35 4h1v1h-1zM38 4h1v1h-1zM35 5h1v1h-1zM38 5h1v1h-1zM35 6h1v1h-1zM38 6h1v1h-1zM35 7h1v1h-1zM38 7h1v1h-1zM36 8h2v1h-2zM44 0h1v1h-1zM43 1h2v1h-2zM43 2h2v1h-2zM42 3h1v1h-1zM44 3h1v1h-1zM42 4h1v1h-1zM44 4h1v1h-1zM41 5h1v1h-1zM44 5h1v1h-1zM41 6h5v1h-5zM44 7h1v1h-1zM43 8h3v1h-3zM52 -1h1v1h-1zM52 0h1v1h-1zM51 1h1v1h-1zM51 2h1v1h-1zM50 3h1v1h-1zM50 4h1v1h-1zM50 5h1v1h-1zM49 6h1v1h-1zM49 7h1v1h-1zM48 8h1v1h-1zM48 9h1v1h-1zM57 0h1v1h-1zM56 1h2v1h-2zM57 2h1v1h-1zM57 3h1v1h-1zM57 4h1v1h-1zM57 5h1v1h-1zM57 6h1v1h-1zM57 7h1v1h-1zM56 8h3v1h-3zM65 0h1v1h-1zM64 1h2v1h-2zM64 2h2v1h-2zM63 3h1v1h-1zM65 3h1v1h-1zM63 4h1v1h-1zM65 4h1v1h-1zM62 5h1v1h-1zM65 5h1v1h-1zM62 6h5v1h-5zM65 7h1v1h-1zM64 8h3v1h-3z"/></svg>
<svg width="74" height="13" viewBox="-2 -2 74 13" style="left:645px;top:570px" shape-rendering="crispEdges"><path fill="#000" d="M1 0h2v1h-2zM0 1h1v1h-1zM3 1h1v1h-1zM3 2h1v1h-1zM3 3h1v1h-1zM2 4h1v1h-1zM1 5h1v1h-1zM0 6h1v1h-1zM0 7h1v1h-1zM3 7h1v1h-1zM0 8h4v1h-4zM8 0h2v1h-2zM7 1h1v1h-1zM10 1h1v1h-1zM10 2h1v1h-1zM9 3h1v1h-1zM8 4h2v1h-2zM10 5h1v1h-1zM10 6h1v1h-1zM7 7h1v1h-1zM10 7h1v1h-1zM8 8h2v1h-2zM15 1h2v1h-2zM15 2h2v1h-2zM15 6h2v1h-2zM15 7h2v1h-2zM22 0h2v1h-2zM21 1h1v1h-1zM24 1h1v1h-1zM24 2h1v1h-1zM24 3h1v1h-1zM23 4h1v1h-1zM22 5h1v1h-1zM21 6h1v1h-1zM21 7h1v1h-1zM24 7h1v1h-1zM21 8h4v1h-4zM29 0h1v1h-1zM28 1h2v1h-2zM29 2h1v1h-1zM29 3h1v1h-1zM29 4h1v1h-1zM29 5h1v1h-1zM29 6h1v1h-1zM29 7h1v1h-1zM28 8h3v1h-3zM36 1h2v1h-2zM36 2h2v1h-2zM36 6h2v1h-2zM36 7h2v1h-2zM43 0h1v1h-1zM42 1h2v1h-2zM43 2h1v1h-1zM43 3h1v1h-1zM43 4h1v1h-1zM43 5h1v1h-1zM43 6h1v1h-1zM43 7h1v1h-1zM42 8h3v1h-3zM50 0h2v1h-2zM49 1h1v1h-1zM52 1h1v1h-1zM52 2h1v1h-1zM52 3h1v1h-1zM51 4h1v1h-1zM50 5h1v1h-1zM49 6h1v1h-1zM49 7h1v1h-1zM52 7h1v1h-1zM49 8h4v1h-4zM57 7h2v1h-2zM57 8h2v1h-2zM63 0h4v1h-4zM63 1h1v1h-1zM66 1h1v1h-1zM66 2h1v1h-1zM65 3h1v1h-1zM65 4h1v1h-1zM65 5h1v1h-1zM64 6h1v1h-1zM64 7h1v1h-1zM64 8h1v1h-1z"/></svg>
<svg width="74" height="13" viewBox="-2 -2 74 13" style="left:788px;top:557px" shape-rendering="crispEdges"><path fill="#000" d="M1 0h2v1h-2zM0 1h1v1h-1zM3 1h1v1h-1zM3 2h1v1h-1zM3 3h1v1h-1zM2 4h1v1h-1zM1 5h1v1h-1zM0 6h1v1h-1zM0 7h1v1h-1zM3 7h1v1h-1zM0 8h4v1h-4zM8 0h2v1h-2zM7 1h1v1h-1zM10 1h1v1h-1zM7 2h1v1h-1zM10 2h1v1h-1zM7 3h1v1h-1zM10 3h1v1h-1zM7 4h1v1h-1zM10 4h1v1h-1zM7 5h1v1h-1zM10 5h1v1h-1zM7 6h1v1h-1zM10 6h1v1h-1zM7 7h1v1h-1zM10 7h1v1h-1zM8 8h2v1h-2zM15 0h2v1h-2zM14 1h1v1h-1zM17 1h1v1h-1zM17 2h1v1h-1zM17 3h1v1h-1zM16 4h1v1h-1zM15 5h1v1h-1zM14 6h1v1h-1zM14 7h1v1h-1zM17 7h1v1h-1zM14 8h4v1h-4zM22 0h2v1h-2zM21 1h1v1h-1zM24 1h1v1h-1zM21 2h1v1h-1zM21 3h1v1h-1zM21 4h3v1h-3zM21 5h1v1h-1zM24 5h1v1h-1zM21 6h1v1h-1zM24 6h1v1h-1zM21 7h1v1h-1zM24 7h1v1h-1zM22 8h2v1h-2zM31 -1h1v1h-1zM31 0h1v1h-1zM30 1h1v1h-1zM30 2h1v1h-1zM29 3h1v1h-1zM29 4h1v1h-1zM29 5h1v1h-1zM28 6h1v1h-1zM28 7h1v1h-1zM27 8h1v1h-1zM27 9h1v1h-1zM36 0h2v1h-2zM35 1h1v1h-1zM38 1h1v1h-1zM35 2h1v1h-1zM38 2h1v1h-1zM35 3h1v1h-1zM38 3h1v1h-1zM35 4h1v1h-1zM38 4h1v1h-1zM35 5h1v1h-1zM38 5h1v1h-1zM35 6h1v1h-1zM38 6h1v1h-1zM35 7h1v1h-1zM38 7h1v1h-1zM36 8h2v1h-2zM44 0h1v1h-1zM43 1h2v1h-2zM43 2h2v1h-2zM42 3h1v1h-1zM44 3h1v1h-1zM42 4h1v1h-1zM44 4h1v1h-1zM41 5h1v1h-1zM44 5h1v1h-1zM41 6h5v1h-5zM44 7h1v1h-1zM43 8h3v1h-3zM52 -1h1v1h-1zM52 0h1v1h-1zM51 1h1v1h-1zM51 2h1v1h-1zM50 3h1v1h-1zM50 4h1v1h-1zM50 5h1v1h-1zM49 6h1v1h-1zM49 7h1v1h-1zM48 8h1v1h-1zM48 9h1v1h-1zM57 0h1v1h-1zM56 1h2v1h-2zM57 2h1v1h-1zM57 3h1v1h-1zM57 4h1v1h-1zM57 5h1v1h-1zM57 6h1v1h-1zM57 7h1v1h-1zM56 8h3v1h-3zM63 0h4v1h-4zM63 1h1v1h-1zM63 2h1v1h-1zM63 3h3v1h-3zM66 4h1v1h-1zM66 5h1v1h-1zM66 6h1v1h-1zM63 7h1v1h-1zM66 7h1v1h-1zM64 8h2v1h-2z"/></svg>
<svg width="67" height="13" viewBox="-2 -2 67 13" style="left:787px;top:570px" shape-rendering="crispEdges"><path fill="#000" d="M1 0h2v1h-2zM0 1h1v1h-1zM3 1h1v1h-1zM3 2h1v1h-1zM2 3h1v1h-1zM1 4h2v1h-2zM3 5h1v1h-1zM3 6h1v1h-1zM0 7h1v1h-1zM3 7h1v1h-1zM1 8h2v1h-2zM8 1h2v1h-2zM8 2h2v1h-2zM8 6h2v1h-2zM8 7h2v1h-2zM15 0h1v1h-1zM14 1h2v1h-2zM15 2h1v1h-1zM15 3h1v1h-1zM15 4h1v1h-1zM15 5h1v1h-1zM15 6h1v1h-1zM15 7h1v1h-1zM14 8h3v1h-3zM22 0h1v1h-1zM21 1h2v1h-2zM22 2h1v1h-1zM22 3h1v1h-1zM22 4h1v1h-1zM22 5h1v1h-1zM22 6h1v1h-1zM22 7h1v1h-1zM21 8h3v1h-3zM29 1h2v1h-2zM29 2h2v1h-2zM29 6h2v1h-2zM29 7h2v1h-2zM36 0h2v1h-2zM35 1h1v1h-1zM38 1h1v1h-1zM35 2h1v1h-1zM38 2h1v1h-1zM35 3h1v1h-1zM38 3h1v1h-1zM35 4h1v1h-1zM38 4h1v1h-1zM35 5h1v1h-1zM38 5h1v1h-1zM35 6h1v1h-1zM38 6h1v1h-1zM35 7h1v1h-1zM38 7h1v1h-1zM36 8h2v1h-2zM43 0h2v1h-2zM42 1h1v1h-1zM45 1h1v1h-1zM45 2h1v1h-1zM45 3h1v1h-1zM44 4h1v1h-1zM43 5h1v1h-1zM42 6h1v1h-1zM42 7h1v1h-1zM45 7h1v1h-1zM42 8h4v1h-4zM50 7h2v1h-2zM50 8h2v1h-2zM56 0h4v1h-4zM56 1h1v1h-1zM59 1h1v1h-1zM59 2h1v1h-1zM58 3h1v1h-1zM58 4h1v1h-1zM58 5h1v1h-1zM57 6h1v1h-1zM57 7h1v1h-1zM57 8h1v1h-1z"/></svg>
<svg width="74" height="13" viewBox="-2 -2 74 13" style="left:931px;top:557px" shape-rendering="crispEdges"><path fill="#000" d="M1 0h2v1h-2zM0 1h1v1h-1zM3 1h1v1h-1zM3 2h1v1h-1zM3 3h1v1h-1zM2 4h1v1h-1zM1 5h1v1h-1zM0 6h1v1h-1zM0 7h1v1h-1zM3 7h1v1h-1zM0 8h4v1h-4zM8 0h2v1h-2zM7 1h1v1h-1zM10 1h1v1h-1zM7 2h1v1h-1zM10 2h1v1h-1zM7 3h1v1h-1zM10 3h1v1h-1zM7 4h1v1h-1zM10 4h1v1h-1zM7 5h1v1h-1zM10 5h1v1h-1zM7 6h1v1h-1zM10 6h1v1h-1zM7 7h1v1h-1zM10 7h1v1h-1zM8 8h2v1h-2zM15 0h2v1h-2zM14 1h1v1h-1zM17 1h1v1h-1zM17 2h1v1h-1zM17 3h1v1h-1zM16 4h1v1h-1zM15 5h1v1h-1zM14 6h1v1h-1zM14 7h1v1h-1zM17 7h1v1h-1zM14 8h4v1h-4zM22 0h2v1h-2zM21 1h1v1h-1zM24 1h1v1h-1zM21 2h1v1h-1zM21 3h1v1h-1zM21 4h3v1h-3zM21 5h1v1h-1zM24 5h1v1h-1zM21 6h1v1h-1zM24 6h1v1h-1zM21 7h1v1h-1zM24 7h1v1h-1zM22 8h2v1h-2zM31 -1h1v1h-1zM31 0h1v1h-1zM30 1h1v1h-1zM30 2h1v1h-1zM29 3h1v1h-1zM29 4h1v1h-1zM29 5h1v1h-1zM28 6h1v1h-1zM28 7h1v1h-1zM27 8h1v1h-1zM27 9h1v1h-1zM36 0h2v1h-2zM35 1h1v1h-1zM38 1h1v1h-1zM35 2h1v1h-1zM38 2h1v1h-1zM35 3h1v1h-1zM38 3h1v1h-1zM35 4h1v1h-1zM38 4h1v1h-1zM35 5h1v1h-1zM38 5h1v1h-1zM35 6h1v1h-1zM38 6h1v1h-1zM35 7h1v1h-1zM38 7h1v1h-1zM36 8h2v1h-2zM44 0h1v1h-1zM43 1h2v1h-2zM43 2h2v1h-2zM42 3h1v1h-1zM44 3h1v1h-1zM42 4h1v1h-1zM44 4h1v1h-1zM41 5h1v1h-1zM44 5h1v1h-1zM41 6h5v1h-5zM44 7h1v1h-1zM43 8h3v1h-3zM52 -1h1v1h-1zM52 0h1v1h-1zM51 1h1v1h-1zM51 2h1v1h-1zM50 3h1v1h-1zM50 4h1v1h-1zM50 5h1v1h-1zM49 6h1v1h-1zM49 7h1v1h-1zM48 8h1v1h-1zM48 9h1v1h-1zM57 0h1v1h-1zM56 1h2v1h-2zM57 2h1v1h-1zM57 3h1v1h-1zM57 4h1v1h-1zM57 5h1v1h-1zM57 6h1v1h-1zM57 7h1v1h-1zM56 8h3v1h-3zM63 0h4v1h-4zM63 1h1v1h-1zM63 2h1v1h-1zM63 3h3v1h-3zM66 4h1v1h-1zM66 5h1v1h-1zM66 6h1v1h-1zM63 7h1v1h-1zM66 7h1v1h-1zM64 8h2v1h-2z"/></svg>
<svg width="67" height="13" viewBox="-2 -2 67 13" style="left:930px;top:570px" shape-rendering="crispEdges"><path fill="#000" d="M0 0h4v1h-4zM0 1h1v1h-1zM3 1h1v1h-1zM3 2h1v1h-1zM2 3h1v1h-1zM2 4h1v1h-1zM2 5h1v1h-1zM1 6h1v1h-1zM1 7h1v1h-1zM1 8h1v1h-1zM8 1h2v1h-2zM8 2h2v1h-2zM8 6h2v1h-2zM8 7h2v1h-2zM15 0h2v1h-2zM14 1h1v1h-1zM17 1h1v1h-1zM14 2h1v1h-1zM17 2h1v1h-1zM14 3h1v1h-1zM17 3h1v1h-1zM14 4h1v1h-1zM17 4h1v1h-1zM14 5h1v1h-1zM17 5h1v1h-1zM14 6h1v1h-1zM17 6h1v1h-1zM14 7h1v1h-1zM17 7h1v1h-1zM15 8h2v1h-2zM22 0h2v1h-2zM21 1h1v1h-1zM24 1h1v1h-1zM21 2h1v1h-1zM24 2h1v1h-1zM21 3h1v1h-1zM24 3h1v1h-1zM21 4h1v1h-1zM24 4h1v1h-1zM21 5h1v1h-1zM24 5h1v1h-1zM21 6h1v1h-1zM24 6h1v1h-1zM21 7h1v1h-1zM24 7h1v1h-1zM22 8h2v1h-2zM29 1h2v1h-2zM29 2h2v1h-2zM29 6h2v1h-2zM29 7h2v1h-2zM35 0h4v1h-4zM35 1h1v1h-1zM35 2h1v1h-1zM35 3h3v1h-3zM38 4h1v1h-1zM38 5h1v1h-1zM38 6h1v1h-1zM35 7h1v1h-1zM38 7h1v1h-1zM36 8h2v1h-2zM43 0h2v1h-2zM42 1h1v1h-1zM45 1h1v1h-1zM45 2h1v1h-1zM45 3h1v1h-1zM44 4h1v1h-1zM43 5h1v1h-1zM42 6h1v1h-1zM42 7h1v1h-1zM45 7h1v1h-1zM42 8h4v1h-4zM50 7h2v1h-2zM50 8h2v1h-2zM56 0h4v1h-4zM56 1h1v1h-1zM59 1h1v1h-1zM59 2h1v1h-1zM58 3h1v1h-1zM58 4h1v1h-1zM58 5h1v1h-1zM57 6h1v1h-1zM57 7h1v1h-1zM57 8h1v1h-1z"/></svg>
<svg width="116" height="13" viewBox="-2 -2 116 13" style="left:15px;top:606px" shape-rendering="crispEdges"><path fill="#804000" d="M1 3h3v1h-3zM0 4h1v1h-1zM1 5h2v1h-2zM3 6h1v1h-1zM3 7h1v1h-1zM0 8h3v1h-3zM7 0h1v1h-1zM11 0h1v1h-1zM7 1h2v1h-2zM10 1h2v1h-2zM7 2h2v1h-2zM10 2h2v1h-2zM7 3h1v1h-1zM9 3h1v1h-1zM11 3h1v1h-1zM7 4h1v1h-1zM9 4h1v1h-1zM11 4h1v1h-1zM7 5h1v1h-1zM11 5h1v1h-1zM7 6h1v1h-1zM11 6h1v1h-1zM7 7h1v1h-1zM11 7h1v1h-1zM7 8h1v1h-1zM11 8h1v1h-1zM13 0h3v1h-3zM14 1h1v1h-1zM16 1h1v1h-1zM14 2h1v1h-1zM17 2h1v1h-1zM14 3h1v1h-1zM17 3h1v1h-1zM14 4h1v1h-1zM17 4h1v1h-1zM14 5h1v1h-1zM17 5h1v1h-1zM14 6h1v1h-1zM17 6h1v1h-1zM14 7h1v1h-1zM16 7h1v1h-1zM13 8h3v1h-3zM20 0h5v1h-5zM21 1h1v1h-1zM24 1h1v1h-1zM21 2h1v1h-1zM21 3h1v1h-1zM23 3h1v1h-1zM21 4h3v1h-3zM21 5h1v1h-1zM23 5h1v1h-1zM21 6h1v1h-1zM21 7h1v1h-1zM20 8h3v1h-3zM28 4h4v1h-4zM34 0h3v1h-3zM35 1h1v1h-1zM37 1h1v1h-1zM35 2h1v1h-1zM38 2h1v1h-1zM35 3h1v1h-1zM38 3h1v1h-1zM35 4h1v1h-1zM38 4h1v1h-1zM35 5h1v1h-1zM38 5h1v1h-1zM35 6h1v1h-1zM38 6h1v1h-1zM35 7h1v1h-1zM37 7h1v1h-1zM34 8h3v1h-3zM44 0h3v1h-3zM43 1h1v1h-1zM46 1h1v1h-1zM42 2h1v1h-1zM42 3h1v1h-1zM42 4h1v1h-1zM42 5h1v1h-1zM42 6h1v1h-1zM43 7h1v1h-1zM46 7h1v1h-1zM44 8h2v1h-2zM50 0h2v1h-2zM49 1h1v1h-1zM52 1h1v1h-1zM52 2h1v1h-1zM52 3h1v1h-1zM51 4h1v1h-1zM50 5h1v1h-1zM49 6h1v1h-1zM49 7h1v1h-1zM52 7h1v1h-1zM49 8h4v1h-4zM57 0h2v1h-2zM56 1h1v1h-1zM59 1h1v1h-1zM56 2h1v1h-1zM59 2h1v1h-1zM56 3h1v1h-1zM59 3h1v1h-1zM56 4h1v1h-1zM59 4h1v1h-1zM56 5h1v1h-1zM59 5h1v1h-1zM56 6h1v1h-1zM59 6h1v1h-1zM56 7h1v1h-1zM59 7h1v1h-1zM57 8h2v1h-2zM64 0h2v1h-2zM63 1h1v1h-1zM66 1h1v1h-1zM63 2h1v1h-1zM66 2h1v1h-1zM63 3h1v1h-1zM66 3h1v1h-1zM63 4h1v1h-1zM66 4h1v1h-1zM63 5h1v1h-1zM66 5h1v1h-1zM63 6h1v1h-1zM66 6h1v1h-1zM63 7h1v1h-1zM66 7h1v1h-1zM64 8h2v1h-2zM70 0h1v1h-1zM74 0h1v1h-1zM70 1h1v1h-1zM74 1h1v1h-1zM70 2h1v1h-1zM74 2h1v1h-1zM70 3h1v1h-1zM74 3h1v1h-1zM71 4h1v1h-1zM73 4h1v1h-1zM71 5h1v1h-1zM73 5h1v1h-1zM71 6h1v1h-1zM73 6h1v1h-1zM72 7h1v1h-1zM72 8h1v1h-1zM79 -1h1v1h-1zM78 0h1v1h-1zM78 1h1v1h-1zM77 2h1v1h-1zM77 3h1v1h-1zM77 4h1v1h-1zM77 5h1v1h-1zM77 6h1v1h-1zM78 7h1v1h-1zM78 8h1v1h-1zM79 9h1v1h-1zM86 2h1v1h-1zM86 3h1v1h-1zM84 4h5v1h-5zM86 5h1v1h-1zM86 6h1v1h-1zM86 7h1v1h-1zM92 0h2v1h-2zM91 1h1v1h-1zM94 1h1v1h-1zM94 2h1v1h-1zM93 3h1v1h-1zM92 4h2v1h-2zM94 5h1v1h-1zM94 6h1v1h-1zM91 7h1v1h-1zM94 7h1v1h-1zM92 8h2v1h-2zM99 0h2v1h-2zM98 1h1v1h-1zM101 1h1v1h-1zM98 2h1v1h-1zM101 2h1v1h-1zM98 3h1v1h-1zM101 3h1v1h-1zM98 4h1v1h-1zM101 4h1v1h-1zM98 5h1v1h-1zM101 5h1v1h-1zM98 6h1v1h-1zM101 6h1v1h-1zM98 7h1v1h-1zM101 7h1v1h-1zM99 8h2v1h-2zM105 -1h1v1h-1zM106 0h1v1h-1zM106 1h1v1h-1zM107 2h1v1h-1zM107 3h1v1h-1zM107 4h1v1h-1zM107 5h1v1h-1zM107 6h1v1h-1zM106 7h1v1h-1zM106 8h1v1h-1zM105 9h1v1h-1z"/></svg>
<svg width="60" height="13" viewBox="-2 -2 60 13" style="left:15px;top:619px" shape-rendering="crispEdges"><path fill="#804000" d="M2 0h3v1h-3zM1 1h1v1h-1zM4 1h1v1h-1zM0 2h1v1h-1zM0 3h1v1h-1zM0 4h1v1h-1zM0 5h1v1h-1zM0 6h1v1h-1zM1 7h1v1h-1zM4 7h1v1h-1zM2 8h2v1h-2zM7 0h1v1h-1zM11 0h1v1h-1zM7 1h1v1h-1zM11 1h1v1h-1zM7 2h1v1h-1zM11 2h1v1h-1zM7 3h1v1h-1zM11 3h1v1h-1zM7 4h5v1h-5zM7 5h1v1h-1zM11 5h1v1h-1zM7 6h1v1h-1zM11 6h1v1h-1zM7 7h1v1h-1zM11 7h1v1h-1zM7 8h1v1h-1zM11 8h1v1h-1zM15 0h1v1h-1zM14 1h2v1h-2zM15 2h1v1h-1zM15 3h1v1h-1zM15 4h1v1h-1zM15 5h1v1h-1zM15 6h1v1h-1zM15 7h1v1h-1zM14 8h3v1h-3zM30 -1h3v1h-3zM30 0h1v1h-1zM30 1h1v1h-1zM30 2h1v1h-1zM30 3h1v1h-1zM30 4h1v1h-1zM30 5h1v1h-1zM30 6h1v1h-1zM30 7h1v1h-1zM30 8h1v1h-1zM30 9h3v1h-3zM36 0h1v1h-1zM35 1h1v1h-1zM37 1h1v1h-1zM40 1h4v1h-4zM36 2h1v1h-1zM39 2h1v1h-1zM44 2h1v1h-1zM38 3h1v1h-1zM38 4h1v1h-1zM38 5h1v1h-1zM38 6h1v1h-1zM38 7h1v1h-1zM39 8h1v1h-1zM44 8h1v1h-1zM40 9h4v1h-4zM49 -1h3v1h-3zM51 0h1v1h-1zM51 1h1v1h-1zM51 2h1v1h-1zM51 3h1v1h-1zM51 4h1v1h-1zM51 5h1v1h-1zM51 6h1v1h-1zM51 7h1v1h-1zM51 8h1v1h-1zM49 9h3v1h-3z"/></svg>
<svg width="39" height="13" viewBox="-2 -2 39 13" style="left:15px;top:632px" shape-rendering="crispEdges"><path fill="#804000" d="M0 4h4v1h-4zM7 0h4v1h-4zM7 1h1v1h-1zM7 2h1v1h-1zM7 3h3v1h-3zM10 4h1v1h-1zM10 5h1v1h-1zM10 6h1v1h-1zM7 7h1v1h-1zM10 7h1v1h-1zM8 8h2v1h-2zM15 0h1v1h-1zM14 1h2v1h-2zM15 2h1v1h-1zM15 3h1v1h-1zM15 4h1v1h-1zM15 5h1v1h-1zM15 6h1v1h-1zM15 7h1v1h-1zM14 8h3v1h-3zM22 7h2v1h-2zM22 8h2v1h-2zM29 0h2v1h-2zM28 1h1v1h-1zM31 1h1v1h-1zM28 2h1v1h-1zM31 2h1v1h-1zM28 3h1v1h-1zM31 3h1v1h-1zM28 4h1v1h-1zM31 4h1v1h-1zM28 5h1v1h-1zM31 5h1v1h-1zM28 6h1v1h-1zM31 6h1v1h-1zM28 7h1v1h-1zM31 7h1v1h-1zM29 8h2v1h-2z"/></svg>
<svg width="109" height="13" viewBox="-2 -2 109 13" style="left:180px;top:606px" shape-rendering="crispEdges"><path fill="#000070" d="M0 0h1v1h-1zM4 0h1v1h-1zM0 1h2v1h-2zM3 1h2v1h-2zM0 2h2v1h-2zM3 2h2v1h-2zM0 3h1v1h-1zM2 3h1v1h-1zM4 3h1v1h-1zM0 4h1v1h-1zM2 4h1v1h-1zM4 4h1v1h-1zM0 5h1v1h-1zM4 5h1v1h-1zM0 6h1v1h-1zM4 6h1v1h-1zM0 7h1v1h-1zM4 7h1v1h-1zM0 8h1v1h-1zM4 8h1v1h-1zM6 0h3v1h-3zM7 1h1v1h-1zM9 1h1v1h-1zM7 2h1v1h-1zM10 2h1v1h-1zM7 3h1v1h-1zM10 3h1v1h-1zM7 4h1v1h-1zM10 4h1v1h-1zM7 5h1v1h-1zM10 5h1v1h-1zM7 6h1v1h-1zM10 6h1v1h-1zM7 7h1v1h-1zM9 7h1v1h-1zM6 8h3v1h-3zM13 0h5v1h-5zM14 1h1v1h-1zM17 1h1v1h-1zM14 2h1v1h-1zM14 3h1v1h-1zM16 3h1v1h-1zM14 4h3v1h-3zM14 5h1v1h-1zM16 5h1v1h-1zM14 6h1v1h-1zM14 7h1v1h-1zM13 8h3v1h-3zM21 4h4v1h-4zM29 0h2v1h-2zM28 1h1v1h-1zM31 1h1v1h-1zM31 2h1v1h-1zM30 3h1v1h-1zM29 4h2v1h-2zM31 5h1v1h-1zM31 6h1v1h-1zM28 7h1v1h-1zM31 7h1v1h-1zM29 8h2v1h-2zM36 0h2v1h-2zM35 1h1v1h-1zM38 1h1v1h-1zM35 2h1v1h-1zM38 2h1v1h-1zM35 3h1v1h-1zM38 3h1v1h-1zM36 4h3v1h-3zM38 5h1v1h-1zM38 6h1v1h-1zM35 7h1v1h-1zM38 7h1v1h-1zM36 8h2v1h-2zM44 0h1v1h-1zM43 1h2v1h-2zM43 2h2v1h-2zM42 3h1v1h-1zM44 3h1v1h-1zM42 4h1v1h-1zM44 4h1v1h-1zM41 5h1v1h-1zM44 5h1v1h-1zM41 6h5v1h-5zM44 7h1v1h-1zM43 8h3v1h-3zM51 -1h1v1h-1zM50 0h1v1h-1zM50 1h1v1h-1zM49 2h1v1h-1zM49 3h1v1h-1zM49 4h1v1h-1zM49 5h1v1h-1zM49 6h1v1h-1zM50 7h1v1h-1zM50 8h1v1h-1zM51 9h1v1h-1zM56 0h4v1h-4zM57 1h1v1h-1zM60 1h1v1h-1zM57 2h1v1h-1zM60 2h1v1h-1zM57 3h1v1h-1zM60 3h1v1h-1zM57 4h3v1h-3zM57 5h1v1h-1zM59 5h1v1h-1zM57 6h1v1h-1zM60 6h1v1h-1zM57 7h1v1h-1zM60 7h1v1h-1zM56 8h2v1h-2zM60 8h1v1h-1zM63 -1h1v1h-1zM64 0h1v1h-1zM64 1h1v1h-1zM65 2h1v1h-1zM65 3h1v1h-1zM65 4h1v1h-1zM65 5h1v1h-1zM65 6h1v1h-1zM64 7h1v1h-1zM64 8h1v1h-1zM63 9h1v1h-1zM72 -1h1v1h-1zM71 0h1v1h-1zM71 1h1v1h-1zM70 2h1v1h-1zM70 3h1v1h-1zM70 4h1v1h-1zM70 5h1v1h-1zM70 6h1v1h-1zM71 7h1v1h-1zM71 8h1v1h-1zM72 9h1v1h-1zM79 2h1v1h-1zM79 3h1v1h-1zM77 4h5v1h-5zM79 5h1v1h-1zM79 6h1v1h-1zM79 7h1v1h-1zM85 0h1v1h-1zM84 1h2v1h-2zM85 2h1v1h-1zM85 3h1v1h-1zM85 4h1v1h-1zM85 5h1v1h-1zM85 6h1v1h-1zM85 7h1v1h-1zM84 8h3v1h-3zM92 0h2v1h-2zM91 1h1v1h-1zM94 1h1v1h-1zM91 2h1v1h-1zM94 2h1v1h-1zM91 3h1v1h-1zM94 3h1v1h-1zM91 4h1v1h-1zM94 4h1v1h-1zM91 5h1v1h-1zM94 5h1v1h-1zM91 6h1v1h-1zM94 6h1v1h-1zM91 7h1v1h-1zM94 7h1v1h-1zM92 8h2v1h-2zM98 -1h1v1h-1zM99 0h1v1h-1zM99 1h1v1h-1zM100 2h1v1h-1zM100 3h1v1h-1zM100 4h1v1h-1zM100 5h1v1h-1zM100 6h1v1h-1zM99 7h1v1h-1zM99 8h1v1h-1zM98 9h1v1h-1z"/></svg>
<svg width="60" height="13" viewBox="-2 -2 60 13" style="left:180px;top:619px" shape-rendering="crispEdges"><path fill="#000070" d="M2 0h3v1h-3zM1 1h1v1h-1zM4 1h1v1h-1zM0 2h1v1h-1zM0 3h1v1h-1zM0 4h1v1h-1zM0 5h1v1h-1zM0 6h1v1h-1zM1 7h1v1h-1zM4 7h1v1h-1zM2 8h2v1h-2zM7 0h1v1h-1zM11 0h1v1h-1zM7 1h1v1h-1zM11 1h1v1h-1zM7 2h1v1h-1zM11 2h1v1h-1zM7 3h1v1h-1zM11 3h1v1h-1zM7 4h5v1h-5zM7 5h1v1h-1zM11 5h1v1h-1zM7 6h1v1h-1zM11 6h1v1h-1zM7 7h1v1h-1zM11 7h1v1h-1zM7 8h1v1h-1zM11 8h1v1h-1zM15 0h2v1h-2zM14 1h1v1h-1zM17 1h1v1h-1zM17 2h1v1h-1zM17 3h1v1h-1zM16 4h1v1h-1zM15 5h1v1h-1zM14 6h1v1h-1zM14 7h1v1h-1zM17 7h1v1h-1zM14 8h4v1h-4zM30 -1h3v1h-3zM30 0h1v1h-1zM30 1h1v1h-1zM30 2h1v1h-1zM30 3h1v1h-1zM30 4h1v1h-1zM30 5h1v1h-1zM30 6h1v1h-1zM30 7h1v1h-1zM30 8h1v1h-1zM30 9h3v1h-3zM36 0h1v1h-1zM35 1h1v1h-1zM37 1h1v1h-1zM40 1h4v1h-4zM36 2h1v1h-1zM39 2h1v1h-1zM44 2h1v1h-1zM38 3h1v1h-1zM38 4h1v1h-1zM38 5h1v1h-1zM38 6h1v1h-1zM38 7h1v1h-1zM39 8h1v1h-1zM44 8h1v1h-1zM40 9h4v1h-4zM49 -1h3v1h-3zM51 0h1v1h-1zM51 1h1v1h-1zM51 2h1v1h-1zM51 3h1v1h-1zM51 4h1v1h-1zM51 5h1v1h-1zM51 6h1v1h-1zM51 7h1v1h-1zM51 8h1v1h-1zM49 9h3v1h-3z"/></svg>
<svg width="39" height="13" viewBox="-2 -2 39 13" style="left:180px;top:632px" shape-rendering="crispEdges"><path fill="#000070" d="M0 4h4v1h-4zM8 0h2v1h-2zM7 1h1v1h-1zM10 1h1v1h-1zM7 2h1v1h-1zM10 2h1v1h-1zM7 3h1v1h-1zM10 3h1v1h-1zM8 4h2v1h-2zM7 5h1v1h-1zM10 5h1v1h-1zM7 6h1v1h-1zM10 6h1v1h-1zM7 7h1v1h-1zM10 7h1v1h-1zM8 8h2v1h-2zM15 0h2v1h-2zM14 1h1v1h-1zM17 1h1v1h-1zM17 2h1v1h-1zM16 3h1v1h-1zM15 4h2v1h-2zM17 5h1v1h-1zM17 6h1v1h-1zM14 7h1v1h-1zM17 7h1v1h-1zM15 8h2v1h-2zM22 7h2v1h-2zM22 8h2v1h-2zM29 0h2v1h-2zM28 1h1v1h-1zM31 1h1v1h-1zM28 2h1v1h-1zM31 2h1v1h-1zM28 3h1v1h-1zM31 3h1v1h-1zM29 4h2v1h-2zM28 5h1v1h-1zM31 5h1v1h-1zM28 6h1v1h-1zM31 6h1v1h-1zM28 7h1v1h-1zM31 7h1v1h-1zM29 8h2v1h-2z"/></svg>
<svg width="60" height="13" viewBox="-2 -2 60 13" style="left:345px;top:619px" shape-rendering="crispEdges"><path fill="#008040" d="M2 0h3v1h-3zM1 1h1v1h-1zM4 1h1v1h-1zM0 2h1v1h-1zM0 3h1v1h-1zM0 4h1v1h-1zM0 5h1v1h-1zM0 6h1v1h-1zM1 7h1v1h-1zM4 7h1v1h-1zM2 8h2v1h-2zM7 0h1v1h-1zM11 0h1v1h-1zM7 1h1v1h-1zM11 1h1v1h-1zM7 2h1v1h-1zM11 2h1v1h-1zM7 3h1v1h-1zM11 3h1v1h-1zM7 4h5v1h-5zM7 5h1v1h-1zM11 5h1v1h-1zM7 6h1v1h-1zM11 6h1v1h-1zM7 7h1v1h-1zM11 7h1v1h-1zM7 8h1v1h-1zM11 8h1v1h-1zM15 0h2v1h-2zM14 1h1v1h-1zM17 1h1v1h-1zM17 2h1v1h-1zM16 3h1v1h-1zM15 4h2v1h-2zM17 5h1v1h-1zM17 6h1v1h-1zM14 7h1v1h-1zM17 7h1v1h-1zM15 8h2v1h-2zM30 -1h3v1h-3zM30 0h1v1h-1zM30 1h1v1h-1zM30 2h1v1h-1zM30 3h1v1h-1zM30 4h1v1h-1zM30 5h1v1h-1zM30 6h1v1h-1zM30 7h1v1h-1zM30 8h1v1h-1zM30 9h3v1h-3zM36 0h1v1h-1zM35 1h1v1h-1zM37 1h1v1h-1zM40 1h4v1h-4zM36 2h1v1h-1zM39 2h1v1h-1zM44 2h1v1h-1zM38 3h1v1h-1zM38 4h1v1h-1zM38 5h1v1h-1zM38 6h1v1h-1zM38 7h1v1h-1zM39 8h1v1h-1zM44 8h1v1h-1zM40 9h4v1h-4zM49 -1h3v1h-3zM51 0h1v1h-1zM51 1h1v1h-1zM51 2h1v1h-1zM51 3h1v1h-1zM51 4h1v1h-1zM51 5h1v1h-1zM51 6h1v1h-1zM51 7h1v1h-1zM51 8h1v1h-1zM49 9h3v1h-3z"/></svg>
<svg width="39" height="13" viewBox="-2 -2 39 13" style="left:345px;top:632px" shape-rendering="crispEdges"><path fill="#008040" d="M0 4h4v1h-4zM7 4h4v1h-4zM14 4h4v1h-4zM21 4h4v1h-4zM28 4h4v1h-4z"/></svg>
<svg width="88" height="13" viewBox="-2 -2 88 13" style="left:510px;top:606px" shape-rendering="crispEdges"><path fill="#E08010" d="M0 0h1v1h-1zM4 0h1v1h-1zM0 1h2v1h-2zM3 1h2v1h-2zM0 2h2v1h-2zM3 2h2v1h-2zM0 3h1v1h-1zM2 3h1v1h-1zM4 3h1v1h-1zM0 4h1v1h-1zM2 4h1v1h-1zM4 4h1v1h-1zM0 5h1v1h-1zM4 5h1v1h-1zM0 6h1v1h-1zM4 6h1v1h-1zM0 7h1v1h-1zM4 7h1v1h-1zM0 8h1v1h-1zM4 8h1v1h-1zM6 0h3v1h-3zM7 1h1v1h-1zM9 1h1v1h-1zM7 2h1v1h-1zM10 2h1v1h-1zM7 3h1v1h-1zM10 3h1v1h-1zM7 4h1v1h-1zM10 4h1v1h-1zM7 5h1v1h-1zM10 5h1v1h-1zM7 6h1v1h-1zM10 6h1v1h-1zM7 7h1v1h-1zM9 7h1v1h-1zM6 8h3v1h-3zM13 0h5v1h-5zM14 1h1v1h-1zM17 1h1v1h-1zM14 2h1v1h-1zM14 3h1v1h-1zM16 3h1v1h-1zM14 4h3v1h-3zM14 5h1v1h-1zM16 5h1v1h-1zM14 6h1v1h-1zM14 7h1v1h-1zM13 8h3v1h-3zM21 4h4v1h-4zM29 0h2v1h-2zM28 1h1v1h-1zM31 1h1v1h-1zM31 2h1v1h-1zM30 3h1v1h-1zM29 4h2v1h-2zM31 5h1v1h-1zM31 6h1v1h-1zM28 7h1v1h-1zM31 7h1v1h-1zM29 8h2v1h-2zM36 0h2v1h-2zM35 1h1v1h-1zM38 1h1v1h-1zM35 2h1v1h-1zM38 2h1v1h-1zM35 3h1v1h-1zM38 3h1v1h-1zM36 4h3v1h-3zM38 5h1v1h-1zM38 6h1v1h-1zM35 7h1v1h-1zM38 7h1v1h-1zM36 8h2v1h-2zM44 0h1v1h-1zM43 1h2v1h-2zM43 2h2v1h-2zM42 3h1v1h-1zM44 3h1v1h-1zM42 4h1v1h-1zM44 4h1v1h-1zM41 5h1v1h-1zM44 5h1v1h-1zM41 6h5v1h-5zM44 7h1v1h-1zM43 8h3v1h-3zM51 0h1v1h-1zM51 1h1v1h-1zM50 2h1v1h-1zM52 2h1v1h-1zM50 3h1v1h-1zM52 3h1v1h-1zM50 4h1v1h-1zM52 4h1v1h-1zM49 5h1v1h-1zM53 5h1v1h-1zM49 6h5v1h-5zM49 7h1v1h-1zM53 7h1v1h-1zM49 8h1v1h-1zM53 8h1v1h-1zM56 0h5v1h-5zM56 1h1v1h-1zM58 1h1v1h-1zM60 1h1v1h-1zM58 2h1v1h-1zM58 3h1v1h-1zM58 4h1v1h-1zM58 5h1v1h-1zM58 6h1v1h-1zM58 7h1v1h-1zM57 8h3v1h-3zM65 -1h1v1h-1zM64 0h1v1h-1zM64 1h1v1h-1zM63 2h1v1h-1zM63 3h1v1h-1zM63 4h1v1h-1zM63 5h1v1h-1zM63 6h1v1h-1zM64 7h1v1h-1zM64 8h1v1h-1zM65 9h1v1h-1zM69 0h3v1h-3zM70 1h1v1h-1zM70 2h1v1h-1zM70 3h1v1h-1zM70 4h1v1h-1zM70 5h1v1h-1zM70 6h1v1h-1zM70 7h1v1h-1zM73 7h1v1h-1zM69 8h5v1h-5zM77 -1h1v1h-1zM78 0h1v1h-1zM78 1h1v1h-1zM79 2h1v1h-1zM79 3h1v1h-1zM79 4h1v1h-1zM79 5h1v1h-1zM79 6h1v1h-1zM78 7h1v1h-1zM78 8h1v1h-1zM77 9h1v1h-1z"/></svg>
<svg width="60" height="13" viewBox="-2 -2 60 13" style="left:510px;top:619px" shape-rendering="crispEdges"><path fill="#E08010" d="M2 0h3v1h-3zM1 1h1v1h-1zM4 1h1v1h-1zM0 2h1v1h-1zM0 3h1v1h-1zM0 4h1v1h-1zM0 5h1v1h-1zM0 6h1v1h-1zM1 7h1v1h-1zM4 7h1v1h-1zM2 8h2v1h-2zM7 0h1v1h-1zM11 0h1v1h-1zM7 1h1v1h-1zM11 1h1v1h-1zM7 2h1v1h-1zM11 2h1v1h-1zM7 3h1v1h-1zM11 3h1v1h-1zM7 4h5v1h-5zM7 5h1v1h-1zM11 5h1v1h-1zM7 6h1v1h-1zM11 6h1v1h-1zM7 7h1v1h-1zM11 7h1v1h-1zM7 8h1v1h-1zM11 8h1v1h-1zM16 0h1v1h-1zM15 1h2v1h-2zM15 2h2v1h-2zM14 3h1v1h-1zM16 3h1v1h-1zM14 4h1v1h-1zM16 4h1v1h-1zM13 5h1v1h-1zM16 5h1v1h-1zM13 6h5v1h-5zM16 7h1v1h-1zM15 8h3v1h-3zM30 -1h3v1h-3zM30 0h1v1h-1zM30 1h1v1h-1zM30 2h1v1h-1zM30 3h1v1h-1zM30 4h1v1h-1zM30 5h1v1h-1zM30 6h1v1h-1zM30 7h1v1h-1zM30 8h1v1h-1zM30 9h3v1h-3zM36 0h1v1h-1zM35 1h1v1h-1zM37 1h1v1h-1zM40 1h4v1h-4zM36 2h1v1h-1zM39 2h1v1h-1zM44 2h1v1h-1zM38 3h1v1h-1zM38 4h1v1h-1zM38 5h1v1h-1zM38 6h1v1h-1zM38 7h1v1h-1zM39 8h1v1h-1zM44 8h1v1h-1zM40 9h4v1h-4zM49 -1h3v1h-3zM51 0h1v1h-1zM51 1h1v1h-1zM51 2h1v1h-1zM51 3h1v1h-1zM51 4h1v1h-1zM51 5h1v1h-1zM51 6h1v1h-1zM51 7h1v1h-1zM51 8h1v1h-1zM49 9h3v1h-3z"/></svg>
<svg width="39" height="13" viewBox="-2 -2 39 13" style="left:510px;top:632px" shape-rendering="crispEdges"><path fill="#E08010" d="M0 4h4v1h-4zM7 0h4v1h-4zM7 1h1v1h-1zM10 1h1v1h-1zM10 2h1v1h-1zM9 3h1v1h-1zM9 4h1v1h-1zM9 5h1v1h-1zM8 6h1v1h-1zM8 7h1v1h-1zM8 8h1v1h-1zM15 0h2v1h-2zM14 1h1v1h-1zM17 1h1v1h-1zM14 2h1v1h-1zM17 2h1v1h-1zM14 3h1v1h-1zM17 3h1v1h-1zM15 4h2v1h-2zM14 5h1v1h-1zM17 5h1v1h-1zM14 6h1v1h-1zM17 6h1v1h-1zM14 7h1v1h-1zM17 7h1v1h-1zM15 8h2v1h-2zM22 7h2v1h-2zM22 8h2v1h-2zM29 0h2v1h-2zM28 1h1v1h-1zM31 1h1v1h-1zM31 2h1v1h-1zM31 3h1v1h-1zM30 4h1v1h-1zM29 5h1v1h-1zM28 6h1v1h-1zM28 7h1v1h-1zM31 7h1v1h-1zM28 8h4v1h-4z"/></svg>
<svg width="88" height="13" viewBox="-2 -2 88 13" style="left:675px;top:606px" shape-rendering="crispEdges"><path fill="#C00000" d="M0 0h1v1h-1zM4 0h1v1h-1zM0 1h2v1h-2zM3 1h2v1h-2zM0 2h2v1h-2zM3 2h2v1h-2zM0 3h1v1h-1zM2 3h1v1h-1zM4 3h1v1h-1zM0 4h1v1h-1zM2 4h1v1h-1zM4 4h1v1h-1zM0 5h1v1h-1zM4 5h1v1h-1zM0 6h1v1h-1zM4 6h1v1h-1zM0 7h1v1h-1zM4 7h1v1h-1zM0 8h1v1h-1zM4 8h1v1h-1zM6 0h3v1h-3zM7 1h1v1h-1zM9 1h1v1h-1zM7 2h1v1h-1zM10 2h1v1h-1zM7 3h1v1h-1zM10 3h1v1h-1zM7 4h1v1h-1zM10 4h1v1h-1zM7 5h1v1h-1zM10 5h1v1h-1zM7 6h1v1h-1zM10 6h1v1h-1zM7 7h1v1h-1zM9 7h1v1h-1zM6 8h3v1h-3zM13 0h5v1h-5zM14 1h1v1h-1zM17 1h1v1h-1zM14 2h1v1h-1zM14 3h1v1h-1zM16 3h1v1h-1zM14 4h3v1h-3zM14 5h1v1h-1zM16 5h1v1h-1zM14 6h1v1h-1zM14 7h1v1h-1zM13 8h3v1h-3zM21 4h4v1h-4zM29 0h2v1h-2zM28 1h1v1h-1zM31 1h1v1h-1zM31 2h1v1h-1zM30 3h1v1h-1zM29 4h2v1h-2zM31 5h1v1h-1zM31 6h1v1h-1zM28 7h1v1h-1zM31 7h1v1h-1zM29 8h2v1h-2zM36 0h2v1h-2zM35 1h1v1h-1zM38 1h1v1h-1zM35 2h1v1h-1zM38 2h1v1h-1zM35 3h1v1h-1zM38 3h1v1h-1zM36 4h2v1h-2zM35 5h1v1h-1zM38 5h1v1h-1zM35 6h1v1h-1zM38 6h1v1h-1zM35 7h1v1h-1zM38 7h1v1h-1zM36 8h2v1h-2zM43 0h2v1h-2zM42 1h1v1h-1zM45 1h1v1h-1zM45 2h1v1h-1zM45 3h1v1h-1zM44 4h1v1h-1zM43 5h1v1h-1zM42 6h1v1h-1zM42 7h1v1h-1zM45 7h1v1h-1zM42 8h4v1h-4zM51 -1h1v1h-1zM50 0h1v1h-1zM50 1h1v1h-1zM49 2h1v1h-1zM49 3h1v1h-1zM49 4h1v1h-1zM49 5h1v1h-1zM49 6h1v1h-1zM50 7h1v1h-1zM50 8h1v1h-1zM51 9h1v1h-1zM58 2h1v1h-1zM58 3h1v1h-1zM56 4h5v1h-5zM58 5h1v1h-1zM58 6h1v1h-1zM58 7h1v1h-1zM64 0h2v1h-2zM63 1h1v1h-1zM66 1h1v1h-1zM66 2h1v1h-1zM66 3h1v1h-1zM65 4h1v1h-1zM64 5h1v1h-1zM63 6h1v1h-1zM63 7h1v1h-1zM66 7h1v1h-1zM63 8h4v1h-4zM71 0h2v1h-2zM70 1h1v1h-1zM73 1h1v1h-1zM70 2h1v1h-1zM73 2h1v1h-1zM70 3h1v1h-1zM73 3h1v1h-1zM70 4h1v1h-1zM73 4h1v1h-1zM70 5h1v1h-1zM73 5h1v1h-1zM70 6h1v1h-1zM73 6h1v1h-1zM70 7h1v1h-1zM73 7h1v1h-1zM71 8h2v1h-2zM77 -1h1v1h-1zM78 0h1v1h-1zM78 1h1v1h-1zM79 2h1v1h-1zM79 3h1v1h-1zM79 4h1v1h-1zM79 5h1v1h-1zM79 6h1v1h-1zM78 7h1v1h-1zM78 8h1v1h-1zM77 9h1v1h-1z"/></svg>
<svg width="60" height="13" viewBox="-2 -2 60 13" style="left:675px;top:619px" shape-rendering="crispEdges"><path fill="#C00000" d="M2 0h3v1h-3zM1 1h1v1h-1zM4 1h1v1h-1zM0 2h1v1h-1zM0 3h1v1h-1zM0 4h1v1h-1zM0 5h1v1h-1zM0 6h1v1h-1zM1 7h1v1h-1zM4 7h1v1h-1zM2 8h2v1h-2zM7 0h1v1h-1zM11 0h1v1h-1zM7 1h1v1h-1zM11 1h1v1h-1zM7 2h1v1h-1zM11 2h1v1h-1zM7 3h1v1h-1zM11 3h1v1h-1zM7 4h5v1h-5zM7 5h1v1h-1zM11 5h1v1h-1zM7 6h1v1h-1zM11 6h1v1h-1zM7 7h1v1h-1zM11 7h1v1h-1zM7 8h1v1h-1zM11 8h1v1h-1zM14 0h4v1h-4zM14 1h1v1h-1zM14 2h1v1h-1zM14 3h3v1h-3zM17 4h1v1h-1zM17 5h1v1h-1zM17 6h1v1h-1zM14 7h1v1h-1zM17 7h1v1h-1zM15 8h2v1h-2zM30 -1h3v1h-3zM30 0h1v1h-1zM30 1h1v1h-1zM30 2h1v1h-1zM30 3h1v1h-1zM30 4h1v1h-1zM30 5h1v1h-1zM30 6h1v1h-1zM30 7h1v1h-1zM30 8h1v1h-1zM30 9h3v1h-3zM36 0h1v1h-1zM35 1h1v1h-1zM37 1h1v1h-1zM40 1h4v1h-4zM36 2h1v1h-1zM39 2h1v1h-1zM44 2h1v1h-1zM38 3h1v1h-1zM38 4h1v1h-1zM38 5h1v1h-1zM38 6h1v1h-1zM38 7h1v1h-1zM39 8h1v1h-1zM44 8h1v1h-1zM40 9h4v1h-4zM49 -1h3v1h-3zM51 0h1v1h-1zM51 1h1v1h-1zM51 2h1v1h-1zM51 3h1v1h-1zM51 4h1v1h-1zM51 5h1v1h-1zM51 6h1v1h-1zM51 7h1v1h-1zM51 8h1v1h-1zM49 9h3v1h-3z"/></svg>
<svg width="39" height="13" viewBox="-2 -2 39 13" style="left:675px;top:632px" shape-rendering="crispEdges"><path fill="#C00000" d="M0 4h4v1h-4zM7 0h4v1h-4zM7 1h1v1h-1zM7 2h1v1h-1zM7 3h3v1h-3zM10 4h1v1h-1zM10 5h1v1h-1zM10 6h1v1h-1zM7 7h1v1h-1zM10 7h1v1h-1zM8 8h2v1h-2zM14 0h4v1h-4zM14 1h1v1h-1zM17 1h1v1h-1zM17 2h1v1h-1zM16 3h1v1h-1zM16 4h1v1h-1zM16 5h1v1h-1zM15 6h1v1h-1zM15 7h1v1h-1zM15 8h1v1h-1zM22 7h2v1h-2zM22 8h2v1h-2zM28 0h4v1h-4zM28 1h1v1h-1zM28 2h1v1h-1zM28 3h3v1h-3zM31 4h1v1h-1zM31 5h1v1h-1zM31 6h1v1h-1zM28 7h1v1h-1zM31 7h1v1h-1zM29 8h2v1h-2z"/></svg>
<svg width="53" height="13" viewBox="-2 -2 53 13" style="left:840px;top:606px" shape-rendering="crispEdges"><path fill="#008080" d="M0 0h1v1h-1zM4 0h1v1h-1zM0 1h2v1h-2zM3 1h2v1h-2zM0 2h2v1h-2zM3 2h2v1h-2zM0 3h1v1h-1zM2 3h1v1h-1zM4 3h1v1h-1zM0 4h1v1h-1zM2 4h1v1h-1zM4 4h1v1h-1zM0 5h1v1h-1zM4 5h1v1h-1zM0 6h1v1h-1zM4 6h1v1h-1zM0 7h1v1h-1zM4 7h1v1h-1zM0 8h1v1h-1zM4 8h1v1h-1zM6 0h3v1h-3zM7 1h1v1h-1zM9 1h1v1h-1zM7 2h1v1h-1zM10 2h1v1h-1zM7 3h1v1h-1zM10 3h1v1h-1zM7 4h1v1h-1zM10 4h1v1h-1zM7 5h1v1h-1zM10 5h1v1h-1zM7 6h1v1h-1zM10 6h1v1h-1zM7 7h1v1h-1zM9 7h1v1h-1zM6 8h3v1h-3zM13 0h5v1h-5zM14 1h1v1h-1zM17 1h1v1h-1zM14 2h1v1h-1zM14 3h1v1h-1zM16 3h1v1h-1zM14 4h3v1h-3zM14 5h1v1h-1zM16 5h1v1h-1zM14 6h1v1h-1zM14 7h1v1h-1zM13 8h3v1h-3zM21 4h4v1h-4zM30 0h1v1h-1zM29 1h2v1h-2zM29 2h2v1h-2zM28 3h1v1h-1zM30 3h1v1h-1zM28 4h1v1h-1zM30 4h1v1h-1zM27 5h1v1h-1zM30 5h1v1h-1zM27 6h5v1h-5zM30 7h1v1h-1zM29 8h3v1h-3zM36 0h2v1h-2zM35 1h1v1h-1zM38 1h1v1h-1zM38 2h1v1h-1zM37 3h1v1h-1zM36 4h2v1h-2zM38 5h1v1h-1zM38 6h1v1h-1zM35 7h1v1h-1zM38 7h1v1h-1zM36 8h2v1h-2zM42 0h4v1h-4zM42 1h1v1h-1zM45 1h1v1h-1zM45 2h1v1h-1zM44 3h1v1h-1zM44 4h1v1h-1zM44 5h1v1h-1zM43 6h1v1h-1zM43 7h1v1h-1zM43 8h1v1h-1z"/></svg>
<svg width="60" height="13" viewBox="-2 -2 60 13" style="left:840px;top:619px" shape-rendering="crispEdges"><path fill="#008080" d="M2 0h3v1h-3zM1 1h1v1h-1zM4 1h1v1h-1zM0 2h1v1h-1zM0 3h1v1h-1zM0 4h1v1h-1zM0 5h1v1h-1zM0 6h1v1h-1zM1 7h1v1h-1zM4 7h1v1h-1zM2 8h2v1h-2zM7 0h1v1h-1zM11 0h1v1h-1zM7 1h1v1h-1zM11 1h1v1h-1zM7 2h1v1h-1zM11 2h1v1h-1zM7 3h1v1h-1zM11 3h1v1h-1zM7 4h5v1h-5zM7 5h1v1h-1zM11 5h1v1h-1zM7 6h1v1h-1zM11 6h1v1h-1zM7 7h1v1h-1zM11 7h1v1h-1zM7 8h1v1h-1zM11 8h1v1h-1zM15 0h2v1h-2zM14 1h1v1h-1zM17 1h1v1h-1zM14 2h1v1h-1zM14 3h1v1h-1zM14 4h3v1h-3zM14 5h1v1h-1zM17 5h1v1h-1zM14 6h1v1h-1zM17 6h1v1h-1zM14 7h1v1h-1zM17 7h1v1h-1zM15 8h2v1h-2zM30 -1h3v1h-3zM30 0h1v1h-1zM30 1h1v1h-1zM30 2h1v1h-1zM30 3h1v1h-1zM30 4h1v1h-1zM30 5h1v1h-1zM30 6h1v1h-1zM30 7h1v1h-1zM30 8h1v1h-1zM30 9h3v1h-3zM36 0h1v1h-1zM35 1h1v1h-1zM37 1h1v1h-1zM40 1h4v1h-4zM36 2h1v1h-1zM39 2h1v1h-1zM44 2h1v1h-1zM38 3h1v1h-1zM38 4h1v1h-1zM38 5h1v1h-1zM38 6h1v1h-1zM38 7h1v1h-1zM39 8h1v1h-1zM44 8h1v1h-1zM40 9h4v1h-4zM49 -1h3v1h-3zM51 0h1v1h-1zM51 1h1v1h-1zM51 2h1v1h-1zM51 3h1v1h-1zM51 4h1v1h-1zM51 5h1v1h-1zM51 6h1v1h-1zM51 7h1v1h-1zM51 8h1v1h-1zM49 9h3v1h-3z"/></svg>
<svg width="39" height="13" viewBox="-2 -2 39 13" style="left:840px;top:632px" shape-rendering="crispEdges"><path fill="#008080" d="M0 4h4v1h-4zM8 0h1v1h-1zM7 1h2v1h-2zM8 2h1v1h-1zM8 3h1v1h-1zM8 4h1v1h-1zM8 5h1v1h-1zM8 6h1v1h-1zM8 7h1v1h-1zM7 8h3v1h-3zM14 0h4v1h-4zM14 1h1v1h-1zM17 1h1v1h-1zM17 2h1v1h-1zM16 3h1v1h-1zM16 4h1v1h-1zM16 5h1v1h-1zM15 6h1v1h-1zM15 7h1v1h-1zM15 8h1v1h-1zM22 7h2v1h-2zM22 8h2v1h-2zM28 0h4v1h-4zM28 1h1v1h-1zM28 2h1v1h-1zM28 3h3v1h-3zM31 4h1v1h-1zM31 5h1v1h-1zM31 6h1v1h-1zM28 7h1v1h-1zM31 7h1v1h-1zM29 8h2v1h-2z"/></svg>
<div style="left:8px;top:664px;width:1008px;height:40px;box-shadow:inset 1px 1px #fff,inset -1px -1px #808080"></div>
<div class="b" style="left:16px;top:672px;width:81px;height:25px;"></div>
<div class="s" style="left:104px;top:672px;width:903px;height:26px;background:#fff"></div>
<div class="b" style="left:989px;top:674px;width:16px;height:22px;"></div>
<div style="left:0;top:719px;width:150px;height:19px;box-shadow:inset 1px 1px #808080,inset -1px -1px #fff"></div>
<div style="left:152px;top:719px;width:872px;height:19px;box-shadow:inset 1px 1px #808080,inset -1px -1px #fff"></div>
<div style="left:0;top:739px;width:1024px;height:1px;background:#fff"></div>
<div class="b" style="left:2px;top:742px;width:62px;height:22px;"></div>
<div class="bp2" style="left:160px;top:742px;width:160px;height:22px"></div>
<div style="left:875px;top:742px;width:147px;height:23px;box-shadow:inset 1px 1px #808080,inset -1px -1px #fff"></div>
<svg width="16" height="16" style="left:2px;top:1px" shape-rendering="crispEdges"><rect x="0" y="0" width="16" height="16" fill="#101018"/><rect x="1" y="1" width="14" height="9" fill="#f4f4f4"/><rect x="1" y="1" width="14" height="1" fill="#303070"/><rect x="2" y="2" width="5" height="2" fill="#ffffff"/><rect x="7" y="2" width="5" height="1" fill="#7070c0"/><rect x="2" y="4" width="5" height="2" fill="#b070c0"/><rect x="7" y="4" width="5" height="2" fill="#d0c070"/><rect x="12" y="3" width="1" height="1" fill="#500050"/><rect x="13" y="4" width="1" height="1" fill="#503070"/><rect x="1" y="6" width="14" height="2" fill="#50a050"/><rect x="1" y="8" width="14" height="1" fill="#c8c8c8"/><rect x="2" y="8" width="2" height="1" fill="#606060"/><rect x="6" y="8" width="2" height="1" fill="#606060"/><rect x="10" y="8" width="2" height="1" fill="#606060"/><rect x="1" y="9" width="14" height="1" fill="#303030"/><rect x="1" y="10" width="14" height="5" fill="#ffffff"/><rect x="3" y="11" width="3" height="4" fill="#d01010"/><rect x="7" y="11" width="3" height="4" fill="#0000c0"/><rect x="11" y="11" width="4" height="4" fill="#20d020"/></svg>
<svg width="16" height="16" style="left:4px;top:20px" shape-rendering="crispEdges"><rect x="0" y="0" width="16" height="16" fill="#101018"/><rect x="1" y="1" width="14" height="9" fill="#f4f4f4"/><rect x="1" y="1" width="14" height="1" fill="#303070"/><rect x="2" y="2" width="5" height="2" fill="#ffffff"/><rect x="7" y="2" width="5" height="1" fill="#7070c0"/><rect x="2" y="4" width="5" height="2" fill="#b070c0"/><rect x="7" y="4" width="5" height="2" fill="#d0c070"/><rect x="12" y="3" width="1" height="1" fill="#500050"/><rect x="13" y="4" width="1" height="1" fill="#503070"/><rect x="1" y="6" width="14" height="2" fill="#50a050"/><rect x="1" y="8" width="14" height="1" fill="#c8c8c8"/><rect x="2" y="8" width="2" height="1" fill="#606060"/><rect x="6" y="8" width="2" height="1" fill="#606060"/><rect x="10" y="8" width="2" height="1" fill="#606060"/><rect x="1" y="9" width="14" height="1" fill="#303030"/><rect x="1" y="10" width="14" height="5" fill="#ffffff"/><rect x="3" y="11" width="3" height="4" fill="#d01010"/><rect x="7" y="11" width="3" height="4" fill="#0000c0"/><rect x="11" y="11" width="4" height="4" fill="#20d020"/></svg>
<svg width="241" height="13" style="left:20px;top:3px" shape-rendering="crispEdges"><path fill="#fff" d="M23 0h2v1h-2zM33 0h2v1h-2zM38 0h2v1h-2zM66 0h5v1h-5zM73 0h2v1h-2zM78 0h2v1h-2zM81 0h4v1h-4zM87 0h2v1h-2zM102 0h5v1h-5zM109 0h2v1h-2zM114 0h2v1h-2zM117 0h4v1h-4zM123 0h2v1h-2zM149 0h4v1h-4zM155 0h2v1h-2zM162 0h3v1h-3zM168 0h2v1h-2zM179 0h2v1h-2zM185 0h2v1h-2zM199 0h2v1h-2zM235 0h4v1h-4zM0 1h2v1h-2zM8 1h2v1h-2zM11 1h10v1h-10zM23 1h2v1h-2zM33 1h2v1h-2zM38 1h2v1h-2zM54 1h10v1h-10zM73 1h2v1h-2zM78 1h11v1h-11zM109 1h2v1h-2zM114 1h11v1h-11zM128 1h3v1h-3zM149 1h2v1h-2zM155 1h2v1h-2zM159 1h4v1h-4zM168 1h2v1h-2zM172 1h3v1h-3zM179 1h2v1h-2zM182 1h7v1h-7zM193 1h2v1h-2zM198 1h3v1h-3zM202 1h8v1h-8zM213 1h10v1h-10zM229 1h3v1h-3zM237 1h2v1h-2zM0 2h2v1h-2zM7 2h2v1h-2zM18 2h2v1h-2zM23 2h2v1h-2zM30 2h12v1h-12zM57 2h2v1h-2zM65 2h7v1h-7zM73 2h2v1h-2zM81 2h8v1h-8zM101 2h7v1h-7zM109 2h2v1h-2zM117 2h8v1h-8zM126 2h5v1h-5zM149 2h2v1h-2zM153 2h8v1h-8zM166 2h7v1h-7zM174 2h2v1h-2zM177 2h7v1h-7zM187 2h2v1h-2zM192 2h7v1h-7zM220 2h2v1h-2zM227 2h5v1h-5zM237 2h2v1h-2zM1 3h2v1h-2zM7 3h2v1h-2zM18 3h2v1h-2zM23 3h2v1h-2zM33 3h2v1h-2zM38 3h2v1h-2zM57 3h2v1h-2zM73 3h2v1h-2zM77 3h2v1h-2zM81 3h8v1h-8zM109 3h2v1h-2zM113 3h2v1h-2zM117 3h8v1h-8zM129 3h2v1h-2zM149 3h2v1h-2zM155 3h2v1h-2zM159 3h2v1h-2zM168 3h3v1h-3zM174 3h2v1h-2zM178 3h11v1h-11zM192 3h2v1h-2zM197 3h2v1h-2zM220 3h2v1h-2zM230 3h2v1h-2zM237 3h2v1h-2zM1 4h2v1h-2zM7 4h2v1h-2zM18 4h2v1h-2zM23 4h4v1h-4zM33 4h2v1h-2zM38 4h2v1h-2zM54 4h11v1h-11zM66 4h14v1h-14zM81 4h8v1h-8zM102 4h14v1h-14zM117 4h8v1h-8zM129 4h2v1h-2zM149 4h2v1h-2zM155 4h2v1h-2zM159 4h7v1h-7zM168 4h2v1h-2zM173 4h2v1h-2zM179 4h10v1h-10zM191 4h2v1h-2zM197 4h2v1h-2zM201 4h10v1h-10zM220 4h2v1h-2zM230 4h2v1h-2zM237 4h2v1h-2zM6 5h3v1h-3zM18 5h2v1h-2zM23 5h2v1h-2zM26 5h4v1h-4zM33 5h2v1h-2zM37 5h2v1h-2zM42 5h11v1h-11zM57 5h2v1h-2zM66 5h5v1h-5zM73 5h2v1h-2zM81 5h8v1h-8zM91 5h9v1h-9zM102 5h5v1h-5zM109 5h2v1h-2zM117 5h8v1h-8zM129 5h2v1h-2zM138 5h5v1h-5zM149 5h2v1h-2zM155 5h5v1h-5zM162 5h2v1h-2zM167 5h3v1h-3zM173 5h2v1h-2zM177 5h6v1h-6zM185 5h2v1h-2zM190 5h2v1h-2zM197 5h2v1h-2zM209 5h2v1h-2zM220 5h2v1h-2zM230 5h2v1h-2zM237 5h2v1h-2zM6 6h2v1h-2zM17 6h2v1h-2zM23 6h2v1h-2zM28 6h2v1h-2zM37 6h2v1h-2zM57 6h2v1h-2zM73 6h2v1h-2zM79 6h10v1h-10zM109 6h2v1h-2zM115 6h10v1h-10zM129 6h2v1h-2zM149 6h2v1h-2zM153 6h4v1h-4zM158 6h2v1h-2zM162 6h2v1h-2zM167 6h3v1h-3zM173 6h2v1h-2zM178 6h3v1h-3zM182 6h7v1h-7zM196 6h2v1h-2zM209 6h2v1h-2zM219 6h2v1h-2zM230 6h2v1h-2zM237 6h2v1h-2zM5 7h2v1h-2zM16 7h3v1h-3zM23 7h2v1h-2zM37 7h2v1h-2zM57 7h2v1h-2zM66 7h5v1h-5zM73 7h2v1h-2zM79 7h10v1h-10zM102 7h5v1h-5zM109 7h2v1h-2zM115 7h10v1h-10zM129 7h2v1h-2zM149 7h2v1h-2zM155 7h2v1h-2zM158 7h2v1h-2zM162 7h2v1h-2zM166 7h4v1h-4zM173 7h2v1h-2zM178 7h10v1h-10zM195 7h3v1h-3zM208 7h2v1h-2zM218 7h3v1h-3zM230 7h2v1h-2zM237 7h2v1h-2zM3 8h3v1h-3zM15 8h3v1h-3zM23 8h2v1h-2zM37 8h2v1h-2zM57 8h2v1h-2zM66 8h2v1h-2zM69 8h2v1h-2zM73 8h2v1h-2zM78 8h2v1h-2zM81 8h4v1h-4zM87 8h2v1h-2zM102 8h2v1h-2zM105 8h2v1h-2zM109 8h2v1h-2zM114 8h2v1h-2zM117 8h4v1h-4zM123 8h2v1h-2zM129 8h2v1h-2zM149 8h2v1h-2zM155 8h2v1h-2zM158 8h2v1h-2zM162 8h2v1h-2zM165 8h2v1h-2zM168 8h2v1h-2zM173 8h4v1h-4zM178 8h11v1h-11zM194 8h3v1h-3zM207 8h3v1h-3zM217 8h3v1h-3zM230 8h2v1h-2zM237 8h2v1h-2zM2 9h2v1h-2zM13 9h3v1h-3zM23 9h2v1h-2zM36 9h2v1h-2zM57 9h7v1h-7zM66 9h5v1h-5zM73 9h2v1h-2zM78 9h2v1h-2zM81 9h4v1h-4zM87 9h2v1h-2zM102 9h5v1h-5zM109 9h2v1h-2zM114 9h2v1h-2zM117 9h4v1h-4zM123 9h2v1h-2zM129 9h2v1h-2zM149 9h2v1h-2zM155 9h2v1h-2zM158 9h2v1h-2zM162 9h2v1h-2zM168 9h2v1h-2zM173 9h8v1h-8zM182 9h2v1h-2zM185 9h5v1h-5zM193 9h3v1h-3zM206 9h3v1h-3zM215 9h3v1h-3zM230 9h2v1h-2zM237 9h2v1h-2zM23 10h2v1h-2zM35 10h2v1h-2zM66 10h2v1h-2zM73 10h2v1h-2zM78 10h4v1h-4zM86 10h3v1h-3zM102 10h2v1h-2zM109 10h2v1h-2zM114 10h4v1h-4zM122 10h3v1h-3zM149 10h4v1h-4zM154 10h5v1h-5zM162 10h2v1h-2zM168 10h2v1h-2zM179 10h2v1h-2zM184 10h3v1h-3zM191 10h3v1h-3zM203 10h4v1h-4zM235 10h4v1h-4z"/></svg>
<svg width="1024" height="40" style="left:0;top:0" shape-rendering="crispEdges"><rect x="976" y="11" width="6" height="2"/><rect x="994" y="4" width="6" height="2"/><rect x="994" y="6" width="1" height="1"/><rect x="999" y="6" width="1" height="4"/><rect x="997" y="9" width="3" height="1"/><rect x="991" y="7" width="6" height="2"/><rect x="991" y="9" width="1" height="4"/><rect x="996" y="9" width="1" height="4"/><rect x="991" y="12" width="6" height="1"/><rect x="1010" y="5" width="1" height="1"/><rect x="1011" y="5" width="1" height="1"/><rect x="1016" y="5" width="1" height="1"/><rect x="1017" y="5" width="1" height="1"/><rect x="1011" y="6" width="1" height="1"/><rect x="1012" y="6" width="1" height="1"/><rect x="1015" y="6" width="1" height="1"/><rect x="1016" y="6" width="1" height="1"/><rect x="1012" y="7" width="1" height="1"/><rect x="1013" y="7" width="1" height="1"/><rect x="1014" y="7" width="1" height="1"/><rect x="1015" y="7" width="1" height="1"/><rect x="1013" y="8" width="1" height="1"/><rect x="1014" y="8" width="1" height="1"/><rect x="1012" y="9" width="1" height="1"/><rect x="1013" y="9" width="1" height="1"/><rect x="1014" y="9" width="1" height="1"/><rect x="1015" y="9" width="1" height="1"/><rect x="1011" y="10" width="1" height="1"/><rect x="1012" y="10" width="1" height="1"/><rect x="1015" y="10" width="1" height="1"/><rect x="1016" y="10" width="1" height="1"/><rect x="1010" y="11" width="1" height="1"/><rect x="1011" y="11" width="1" height="1"/><rect x="1016" y="11" width="1" height="1"/><rect x="1017" y="11" width="1" height="1"/><rect x="976" y="30" width="6" height="2"/><rect x="994" y="23" width="6" height="2"/><rect x="994" y="25" width="1" height="1"/><rect x="999" y="25" width="1" height="4"/><rect x="997" y="28" width="3" height="1"/><rect x="991" y="26" width="6" height="2"/><rect x="991" y="28" width="1" height="4"/><rect x="996" y="28" width="1" height="4"/><rect x="991" y="31" width="6" height="1"/><rect x="1010" y="24" width="1" height="1"/><rect x="1011" y="24" width="1" height="1"/><rect x="1016" y="24" width="1" height="1"/><rect x="1017" y="24" width="1" height="1"/><rect x="1011" y="25" width="1" height="1"/><rect x="1012" y="25" width="1" height="1"/><rect x="1015" y="25" width="1" height="1"/><rect x="1016" y="25" width="1" height="1"/><rect x="1012" y="26" width="1" height="1"/><rect x="1013" y="26" width="1" height="1"/><rect x="1014" y="26" width="1" height="1"/><rect x="1015" y="26" width="1" height="1"/><rect x="1013" y="27" width="1" height="1"/><rect x="1014" y="27" width="1" height="1"/><rect x="1012" y="28" width="1" height="1"/><rect x="1013" y="28" width="1" height="1"/><rect x="1014" y="28" width="1" height="1"/><rect x="1015" y="28" width="1" height="1"/><rect x="1011" y="29" width="1" height="1"/><rect x="1012" y="29" width="1" height="1"/><rect x="1015" y="29" width="1" height="1"/><rect x="1016" y="29" width="1" height="1"/><rect x="1010" y="30" width="1" height="1"/><rect x="1011" y="30" width="1" height="1"/><rect x="1016" y="30" width="1" height="1"/><rect x="1017" y="30" width="1" height="1"/></svg>
<svg width="45" height="13" style="left:27px;top:21px" shape-rendering="crispEdges"><path fill="#fff" transform="translate(1,1)" d="M18 0h1v1h-1zM21 0h1v1h-1zM23 0h1v1h-1zM31 0h1v1h-1zM40 0h1v1h-1zM0 1h6v1h-6zM17 1h1v1h-1zM21 1h1v1h-1zM23 1h1v1h-1zM30 1h1v1h-1zM33 1h6v1h-6zM41 1h1v1h-1zM4 2h1v1h-1zM16 2h2v1h-2zM21 2h1v1h-1zM23 2h1v1h-1zM29 2h1v1h-1zM33 2h1v1h-1zM42 2h1v1h-1zM4 3h1v1h-1zM7 3h6v1h-6zM16 3h1v1h-1zM21 3h1v1h-1zM23 3h1v1h-1zM29 3h1v1h-1zM33 3h1v1h-1zM42 3h1v1h-1zM4 4h1v1h-1zM12 4h1v1h-1zM15 4h2v1h-2zM21 4h1v1h-1zM23 4h1v1h-1zM26 4h1v1h-1zM29 4h1v1h-1zM33 4h1v1h-1zM42 4h1v1h-1zM4 5h1v1h-1zM9 5h1v1h-1zM11 5h1v1h-1zM14 5h1v1h-1zM16 5h1v1h-1zM21 5h1v1h-1zM23 5h1v1h-1zM26 5h1v1h-1zM29 5h1v1h-1zM33 5h6v1h-6zM42 5h1v1h-1zM4 6h1v1h-1zM9 6h2v1h-2zM16 6h1v1h-1zM21 6h1v1h-1zM23 6h1v1h-1zM25 6h2v1h-2zM29 6h1v1h-1zM33 6h1v1h-1zM42 6h1v1h-1zM3 7h2v1h-2zM9 7h1v1h-1zM16 7h1v1h-1zM20 7h1v1h-1zM23 7h1v1h-1zM25 7h1v1h-1zM29 7h1v1h-1zM33 7h1v1h-1zM42 7h1v1h-1zM2 8h2v1h-2zM9 8h1v1h-1zM16 8h1v1h-1zM20 8h1v1h-1zM23 8h2v1h-2zM29 8h1v1h-1zM33 8h1v1h-1zM42 8h1v1h-1zM1 9h2v1h-2zM8 9h1v1h-1zM16 9h1v1h-1zM20 9h1v1h-1zM23 9h2v1h-2zM30 9h1v1h-1zM33 9h1v1h-1zM41 9h1v1h-1zM7 10h1v1h-1zM31 10h1v1h-1zM40 10h1v1h-1z"/><path fill="#808080" d="M18 0h1v1h-1zM21 0h1v1h-1zM23 0h1v1h-1zM31 0h1v1h-1zM40 0h1v1h-1zM0 1h6v1h-6zM17 1h1v1h-1zM21 1h1v1h-1zM23 1h1v1h-1zM30 1h1v1h-1zM33 1h6v1h-6zM41 1h1v1h-1zM4 2h1v1h-1zM16 2h2v1h-2zM21 2h1v1h-1zM23 2h1v1h-1zM29 2h1v1h-1zM33 2h1v1h-1zM42 2h1v1h-1zM4 3h1v1h-1zM7 3h6v1h-6zM16 3h1v1h-1zM21 3h1v1h-1zM23 3h1v1h-1zM29 3h1v1h-1zM33 3h1v1h-1zM42 3h1v1h-1zM4 4h1v1h-1zM12 4h1v1h-1zM15 4h2v1h-2zM21 4h1v1h-1zM23 4h1v1h-1zM26 4h1v1h-1zM29 4h1v1h-1zM33 4h1v1h-1zM42 4h1v1h-1zM4 5h1v1h-1zM9 5h1v1h-1zM11 5h1v1h-1zM14 5h1v1h-1zM16 5h1v1h-1zM21 5h1v1h-1zM23 5h1v1h-1zM26 5h1v1h-1zM29 5h1v1h-1zM33 5h6v1h-6zM42 5h1v1h-1zM4 6h1v1h-1zM9 6h2v1h-2zM16 6h1v1h-1zM21 6h1v1h-1zM23 6h1v1h-1zM25 6h2v1h-2zM29 6h1v1h-1zM33 6h1v1h-1zM42 6h1v1h-1zM3 7h2v1h-2zM9 7h1v1h-1zM16 7h1v1h-1zM20 7h1v1h-1zM23 7h1v1h-1zM25 7h1v1h-1zM29 7h1v1h-1zM33 7h1v1h-1zM42 7h1v1h-1zM2 8h2v1h-2zM9 8h1v1h-1zM16 8h1v1h-1zM20 8h1v1h-1zM23 8h2v1h-2zM29 8h1v1h-1zM33 8h1v1h-1zM42 8h1v1h-1zM1 9h2v1h-2zM8 9h1v1h-1zM16 9h1v1h-1zM20 9h1v1h-1zM23 9h2v1h-2zM30 9h1v1h-1zM33 9h1v1h-1zM41 9h1v1h-1zM7 10h1v1h-1zM31 10h1v1h-1zM40 10h1v1h-1z"/></svg>
<div style="left:59px;top:32px;width:7px;height:1px;background:#808080"></div><div style="left:60px;top:33px;width:7px;height:1px;background:#fff"></div>
<svg width="42" height="13" style="left:84px;top:21px" shape-rendering="crispEdges"><path fill="#000" d="M4 0h1v1h-1zM13 0h8v1h-8zM27 0h1v1h-1zM37 0h1v1h-1zM0 1h10v1h-10zM26 1h1v1h-1zM28 1h6v1h-6zM38 1h1v1h-1zM4 2h1v1h-1zM25 2h1v1h-1zM28 2h1v1h-1zM34 2h1v1h-1zM39 2h1v1h-1zM1 3h8v1h-8zM12 3h11v1h-11zM25 3h1v1h-1zM28 3h1v1h-1zM35 3h1v1h-1zM39 3h1v1h-1zM0 4h11v1h-11zM17 4h1v1h-1zM25 4h1v1h-1zM28 4h1v1h-1zM35 4h1v1h-1zM39 4h1v1h-1zM3 5h1v1h-1zM5 5h1v1h-1zM9 5h1v1h-1zM13 5h1v1h-1zM17 5h1v1h-1zM25 5h1v1h-1zM28 5h1v1h-1zM35 5h1v1h-1zM39 5h1v1h-1zM2 6h1v1h-1zM6 6h1v1h-1zM8 6h1v1h-1zM13 6h1v1h-1zM17 6h1v1h-1zM20 6h1v1h-1zM25 6h1v1h-1zM28 6h1v1h-1zM35 6h1v1h-1zM39 6h1v1h-1zM0 7h3v1h-3zM6 7h2v1h-2zM13 7h1v1h-1zM17 7h1v1h-1zM20 7h2v1h-2zM25 7h1v1h-1zM28 7h1v1h-1zM35 7h1v1h-1zM39 7h1v1h-1zM2 8h1v1h-1zM7 8h1v1h-1zM12 8h1v1h-1zM17 8h1v1h-1zM21 8h1v1h-1zM25 8h1v1h-1zM28 8h1v1h-1zM33 8h2v1h-2zM39 8h1v1h-1zM2 9h1v1h-1zM4 9h3v1h-3zM8 9h2v1h-2zM12 9h1v1h-1zM17 9h1v1h-1zM26 9h1v1h-1zM28 9h6v1h-6zM38 9h1v1h-1zM1 10h3v1h-3zM15 10h2v1h-2zM27 10h1v1h-1zM37 10h1v1h-1z"/></svg>
<div style="left:112px;top:32px;width:8px;height:1px;background:#000"></div>
<svg width="41" height="13" style="left:138px;top:21px" shape-rendering="crispEdges"><path fill="#000" d="M0 0h4v1h-4zM5 0h4v1h-4zM16 0h1v1h-1zM27 0h1v1h-1zM36 0h1v1h-1zM5 1h1v1h-1zM8 1h1v1h-1zM12 1h10v1h-10zM26 1h1v1h-1zM28 1h7v1h-7zM37 1h1v1h-1zM0 2h4v1h-4zM5 2h1v1h-1zM8 2h1v1h-1zM10 2h1v1h-1zM12 2h1v1h-1zM21 2h1v1h-1zM25 2h1v1h-1zM33 2h1v1h-1zM38 2h1v1h-1zM0 3h4v1h-4zM5 3h1v1h-1zM8 3h2v1h-2zM12 3h1v1h-1zM21 3h1v1h-1zM25 3h1v1h-1zM32 3h2v1h-2zM38 3h1v1h-1zM4 4h1v1h-1zM13 4h8v1h-8zM25 4h1v1h-1zM31 4h2v1h-2zM38 4h1v1h-1zM0 5h10v1h-10zM17 5h1v1h-1zM25 5h1v1h-1zM31 5h1v1h-1zM38 5h1v1h-1zM5 6h1v1h-1zM8 6h1v1h-1zM13 6h1v1h-1zM17 6h5v1h-5zM25 6h1v1h-1zM30 6h1v1h-1zM38 6h1v1h-1zM0 7h4v1h-4zM6 7h1v1h-1zM8 7h1v1h-1zM13 7h1v1h-1zM17 7h1v1h-1zM25 7h1v1h-1zM29 7h1v1h-1zM38 7h1v1h-1zM0 8h1v1h-1zM3 8h1v1h-1zM7 8h1v1h-1zM13 8h2v1h-2zM17 8h1v1h-1zM25 8h1v1h-1zM28 8h1v1h-1zM38 8h1v1h-1zM0 9h4v1h-4zM5 9h2v1h-2zM8 9h1v1h-1zM12 9h1v1h-1zM15 9h1v1h-1zM17 9h1v1h-1zM26 9h1v1h-1zM28 9h7v1h-7zM37 9h1v1h-1zM0 10h1v1h-1zM4 10h1v1h-1zM9 10h1v1h-1zM12 10h1v1h-1zM16 10h7v1h-7zM27 10h1v1h-1zM36 10h1v1h-1z"/></svg>
<div style="left:166px;top:32px;width:7px;height:1px;background:#000"></div>
<svg width="40" height="13" style="left:191px;top:21px" shape-rendering="crispEdges"><path fill="#000" d="M1 0h1v1h-1zM4 0h3v1h-3zM10 0h1v1h-1zM16 0h1v1h-1zM27 0h1v1h-1zM35 0h1v1h-1zM1 1h2v1h-2zM4 1h1v1h-1zM6 1h1v1h-1zM8 1h1v1h-1zM10 1h1v1h-1zM12 1h10v1h-10zM26 1h1v1h-1zM29 1h4v1h-4zM36 1h1v1h-1zM4 2h3v1h-3zM8 2h1v1h-1zM10 2h1v1h-1zM12 2h1v1h-1zM21 2h1v1h-1zM25 2h1v1h-1zM28 2h2v1h-2zM33 2h1v1h-1zM37 2h1v1h-1zM0 3h1v1h-1zM4 3h1v1h-1zM6 3h1v1h-1zM8 3h1v1h-1zM10 3h1v1h-1zM12 3h1v1h-1zM21 3h1v1h-1zM25 3h1v1h-1zM28 3h1v1h-1zM37 3h1v1h-1zM1 4h1v1h-1zM4 4h1v1h-1zM6 4h1v1h-1zM8 4h1v1h-1zM10 4h1v1h-1zM13 4h8v1h-8zM25 4h1v1h-1zM28 4h2v1h-2zM37 4h1v1h-1zM4 5h3v1h-3zM8 5h1v1h-1zM10 5h1v1h-1zM17 5h1v1h-1zM25 5h1v1h-1zM30 5h3v1h-3zM37 5h1v1h-1zM2 6h1v1h-1zM4 6h1v1h-1zM6 6h1v1h-1zM8 6h1v1h-1zM10 6h1v1h-1zM13 6h1v1h-1zM17 6h5v1h-5zM25 6h1v1h-1zM33 6h1v1h-1zM37 6h1v1h-1zM2 7h1v1h-1zM4 7h3v1h-3zM8 7h1v1h-1zM10 7h1v1h-1zM13 7h1v1h-1zM17 7h1v1h-1zM25 7h1v1h-1zM33 7h2v1h-2zM37 7h1v1h-1zM1 8h1v1h-1zM4 8h1v1h-1zM6 8h1v1h-1zM10 8h1v1h-1zM13 8h2v1h-2zM17 8h1v1h-1zM25 8h1v1h-1zM28 8h1v1h-1zM33 8h2v1h-2zM37 8h1v1h-1zM1 9h1v1h-1zM4 9h1v1h-1zM6 9h1v1h-1zM10 9h1v1h-1zM12 9h1v1h-1zM15 9h1v1h-1zM17 9h1v1h-1zM26 9h1v1h-1zM29 9h5v1h-5zM36 9h1v1h-1zM1 10h1v1h-1zM3 10h1v1h-1zM9 10h2v1h-2zM12 10h1v1h-1zM16 10h7v1h-7zM27 10h1v1h-1zM35 10h1v1h-1z"/></svg>
<div style="left:219px;top:32px;width:7px;height:1px;background:#000"></div>
<svg width="55" height="14" style="left:244px;top:21px" shape-rendering="crispEdges"><path fill="#000" d="M26 0h1v1h-1zM28 0h1v1h-1zM2 1h1v1h-1zM20 1h1v1h-1zM27 1h2v1h-2zM32 1h1v1h-1zM40 1h1v1h-1zM51 1h1v1h-1zM2 2h1v1h-1zM13 2h1v1h-1zM20 2h1v1h-1zM32 2h1v1h-1zM39 2h1v1h-1zM41 2h1v1h-1zM48 2h2v1h-2zM51 2h1v1h-1zM0 3h5v1h-5zM10 3h1v1h-1zM13 3h1v1h-1zM20 3h1v1h-1zM31 3h4v1h-4zM38 3h1v1h-1zM41 3h1v1h-1zM44 3h2v1h-2zM48 3h1v1h-1zM52 3h1v1h-1zM0 4h1v1h-1zM4 4h1v1h-1zM9 4h1v1h-1zM16 4h1v1h-1zM20 4h1v1h-1zM31 4h1v1h-1zM34 4h1v1h-1zM38 4h1v1h-1zM41 4h1v1h-1zM44 4h2v1h-2zM48 4h1v1h-1zM52 4h1v1h-1zM0 5h1v1h-1zM4 5h1v1h-1zM9 5h1v1h-1zM15 5h1v1h-1zM20 5h2v1h-2zM31 5h1v1h-1zM34 5h1v1h-1zM38 5h1v1h-1zM41 5h1v1h-1zM44 5h2v1h-2zM48 5h1v1h-1zM52 5h1v1h-1zM0 6h1v1h-1zM4 6h1v1h-1zM8 6h2v1h-2zM15 6h1v1h-1zM20 6h3v1h-3zM31 6h1v1h-1zM34 6h1v1h-1zM38 6h1v1h-1zM41 6h1v1h-1zM44 6h1v1h-1zM46 6h2v1h-2zM52 6h1v1h-1zM4 7h1v1h-1zM8 7h2v1h-2zM15 7h1v1h-1zM20 7h1v1h-1zM34 7h1v1h-1zM38 7h1v1h-1zM42 7h1v1h-1zM44 7h1v1h-1zM46 7h2v1h-2zM52 7h1v1h-1zM4 8h1v1h-1zM9 8h1v1h-1zM14 8h1v1h-1zM20 8h1v1h-1zM34 8h1v1h-1zM38 8h1v1h-1zM42 8h2v1h-2zM46 8h2v1h-2zM52 8h1v1h-1zM3 9h1v1h-1zM9 9h1v1h-1zM13 9h2v1h-2zM20 9h1v1h-1zM33 9h1v1h-1zM38 9h1v1h-1zM42 9h2v1h-2zM47 9h1v1h-1zM52 9h1v1h-1zM2 10h1v1h-1zM9 10h1v1h-1zM13 10h1v1h-1zM20 10h1v1h-1zM32 10h1v1h-1zM39 10h1v1h-1zM42 10h2v1h-2zM47 10h1v1h-1zM51 10h1v1h-1zM9 11h1v1h-1zM20 11h1v1h-1zM40 11h1v1h-1zM51 11h1v1h-1z"/></svg>
<div style="left:285px;top:32px;width:9px;height:1px;background:#000"></div>
<svg width="43" height="14" style="left:312px;top:21px" shape-rendering="crispEdges"><path fill="#000" d="M23 0h1v1h-1zM22 1h1v1h-1zM24 1h1v1h-1zM28 1h1v1h-1zM38 1h1v1h-1zM9 2h1v1h-1zM11 2h1v1h-1zM17 2h4v1h-4zM22 2h3v1h-3zM27 2h1v1h-1zM30 2h1v1h-1zM36 2h1v1h-1zM39 2h1v1h-1zM2 3h1v1h-1zM9 3h1v1h-1zM11 3h1v1h-1zM20 3h1v1h-1zM26 3h1v1h-1zM30 3h1v1h-1zM36 3h1v1h-1zM40 3h1v1h-1zM1 4h2v1h-2zM9 4h1v1h-1zM11 4h1v1h-1zM20 4h1v1h-1zM26 4h1v1h-1zM30 4h1v1h-1zM36 4h1v1h-1zM40 4h1v1h-1zM1 5h1v1h-1zM3 5h1v1h-1zM9 5h1v1h-1zM11 5h1v1h-1zM20 5h1v1h-1zM26 5h1v1h-1zM30 5h1v1h-1zM36 5h1v1h-1zM40 5h1v1h-1zM1 6h1v1h-1zM3 6h1v1h-1zM9 6h1v1h-1zM11 6h1v1h-1zM20 6h1v1h-1zM26 6h1v1h-1zM30 6h7v1h-7zM40 6h1v1h-1zM1 7h1v1h-1zM3 7h1v1h-1zM9 7h1v1h-1zM11 7h1v1h-1zM13 7h1v1h-1zM20 7h1v1h-1zM26 7h1v1h-1zM30 7h1v1h-1zM36 7h1v1h-1zM40 7h1v1h-1zM0 8h1v1h-1zM4 8h1v1h-1zM9 8h1v1h-1zM11 8h2v1h-2zM19 8h1v1h-1zM26 8h1v1h-1zM30 8h1v1h-1zM36 8h1v1h-1zM40 8h1v1h-1zM4 9h1v1h-1zM9 9h1v1h-1zM11 9h2v1h-2zM18 9h2v1h-2zM26 9h1v1h-1zM30 9h1v1h-1zM36 9h1v1h-1zM40 9h1v1h-1zM5 10h1v1h-1zM8 10h1v1h-1zM11 10h1v1h-1zM17 10h2v1h-2zM27 10h1v1h-1zM30 10h1v1h-1zM36 10h1v1h-1zM39 10h1v1h-1zM28 11h1v1h-1zM38 11h1v1h-1z"/></svg>
<div style="left:342px;top:32px;width:7px;height:1px;background:#000"></div>
<svg width="11" height="9" style="left:16px;top:51px" shape-rendering="crispEdges"><path d="M0 0h1v1h-1zM1 0h1v1h-1zM2 0h1v1h-1zM3 0h1v1h-1zM0 1h1v1h-1zM4 1h1v1h-1zM0 2h1v1h-1zM5 2h1v1h-1zM0 3h1v1h-1zM5 3h1v1h-1zM0 4h1v1h-1zM5 4h1v1h-1zM0 5h1v1h-1zM5 5h1v1h-1zM0 6h1v1h-1zM5 6h1v1h-1zM0 7h1v1h-1zM4 7h1v1h-1zM0 8h1v1h-1zM1 8h1v1h-1zM2 8h1v1h-1zM3 8h1v1h-1zM9 0h1v1h-1zM8 1h1v1h-1zM9 1h1v1h-1zM7 2h1v1h-1zM9 2h1v1h-1zM9 3h1v1h-1zM9 4h1v1h-1zM9 5h1v1h-1zM9 6h1v1h-1zM9 7h1v1h-1zM9 8h1v1h-1z"/></svg>
<svg width="13" height="9" style="left:40px;top:50px" shape-rendering="crispEdges"><path d="M0 0h1v1h-1zM1 0h1v1h-1zM2 0h1v1h-1zM3 0h1v1h-1zM0 1h1v1h-1zM4 1h1v1h-1zM0 2h1v1h-1zM5 2h1v1h-1zM0 3h1v1h-1zM5 3h1v1h-1zM0 4h1v1h-1zM5 4h1v1h-1zM0 5h1v1h-1zM5 5h1v1h-1zM0 6h1v1h-1zM5 6h1v1h-1zM0 7h1v1h-1zM4 7h1v1h-1zM0 8h1v1h-1zM1 8h1v1h-1zM2 8h1v1h-1zM3 8h1v1h-1zM8 0h1v1h-1zM9 0h1v1h-1zM10 0h1v1h-1zM7 1h1v1h-1zM11 1h1v1h-1zM11 2h1v1h-1zM11 3h1v1h-1zM10 4h1v1h-1zM9 5h1v1h-1zM8 6h1v1h-1zM7 7h1v1h-1zM7 8h1v1h-1zM8 8h1v1h-1zM9 8h1v1h-1zM10 8h1v1h-1zM11 8h1v1h-1z"/></svg>
<svg width="13" height="9" style="left:65px;top:50px" shape-rendering="crispEdges"><path d="M0 0h1v1h-1zM1 0h1v1h-1zM2 0h1v1h-1zM3 0h1v1h-1zM0 1h1v1h-1zM4 1h1v1h-1zM0 2h1v1h-1zM5 2h1v1h-1zM0 3h1v1h-1zM5 3h1v1h-1zM0 4h1v1h-1zM5 4h1v1h-1zM0 5h1v1h-1zM5 5h1v1h-1zM0 6h1v1h-1zM5 6h1v1h-1zM0 7h1v1h-1zM4 7h1v1h-1zM0 8h1v1h-1zM1 8h1v1h-1zM2 8h1v1h-1zM3 8h1v1h-1zM8 0h1v1h-1zM9 0h1v1h-1zM10 0h1v1h-1zM7 1h1v1h-1zM11 1h1v1h-1zM11 2h1v1h-1zM11 3h1v1h-1zM9 4h1v1h-1zM10 4h1v1h-1zM11 5h1v1h-1zM11 6h1v1h-1zM7 7h1v1h-1zM11 7h1v1h-1zM8 8h1v1h-1zM9 8h1v1h-1zM10 8h1v1h-1z"/></svg>
<svg width="10" height="9" style="left:96px;top:50px" shape-rendering="crispEdges"><path d="M0 0h1v1h-1zM4 0h1v1h-1zM0 1h1v1h-1zM4 1h1v1h-1zM1 2h1v1h-1zM3 2h1v1h-1zM1 3h1v1h-1zM3 3h1v1h-1zM2 4h1v1h-1zM2 5h1v1h-1zM2 6h1v1h-1zM2 7h1v1h-1zM2 8h1v1h-1zM8 0h1v1h-1zM7 1h1v1h-1zM8 1h1v1h-1zM6 2h1v1h-1zM8 2h1v1h-1zM8 3h1v1h-1zM8 4h1v1h-1zM8 5h1v1h-1zM8 6h1v1h-1zM8 7h1v1h-1zM8 8h1v1h-1z"/></svg>
<svg width="12" height="9" style="left:121px;top:50px" shape-rendering="crispEdges"><path d="M0 0h1v1h-1zM4 0h1v1h-1zM0 1h1v1h-1zM4 1h1v1h-1zM1 2h1v1h-1zM3 2h1v1h-1zM1 3h1v1h-1zM3 3h1v1h-1zM2 4h1v1h-1zM2 5h1v1h-1zM2 6h1v1h-1zM2 7h1v1h-1zM2 8h1v1h-1zM7 0h1v1h-1zM8 0h1v1h-1zM9 0h1v1h-1zM6 1h1v1h-1zM10 1h1v1h-1zM10 2h1v1h-1zM10 3h1v1h-1zM9 4h1v1h-1zM8 5h1v1h-1zM7 6h1v1h-1zM6 7h1v1h-1zM6 8h1v1h-1zM7 8h1v1h-1zM8 8h1v1h-1zM9 8h1v1h-1zM10 8h1v1h-1z"/></svg>
<svg width="12" height="9" style="left:146px;top:50px" shape-rendering="crispEdges"><path d="M0 0h1v1h-1zM4 0h1v1h-1zM0 1h1v1h-1zM4 1h1v1h-1zM1 2h1v1h-1zM3 2h1v1h-1zM1 3h1v1h-1zM3 3h1v1h-1zM2 4h1v1h-1zM2 5h1v1h-1zM2 6h1v1h-1zM2 7h1v1h-1zM2 8h1v1h-1zM7 0h1v1h-1zM8 0h1v1h-1zM9 0h1v1h-1zM6 1h1v1h-1zM10 1h1v1h-1zM10 2h1v1h-1zM10 3h1v1h-1zM8 4h1v1h-1zM9 4h1v1h-1zM10 5h1v1h-1zM10 6h1v1h-1zM6 7h1v1h-1zM10 7h1v1h-1zM7 8h1v1h-1zM8 8h1v1h-1zM9 8h1v1h-1z"/></svg>
<svg width="1024" height="80" style="left:0;top:0"><path d="M175 55H195L185 45z M183 55h4v10h-4z"/><path d="M208 45h4v10h-4z M200 55H220L210 65z"/><path d="M226 54H244L235 45z M226 56H244L235 65z"/><path d="M251 45H269L260 54z M260 56L269 65H251z"/><path d="M283 55L292 46V64z M292 55L301 46V64z"/><path d="M307 55L317 45V65z M317 53h10v4h-10z"/><rect x="336" y="49" width="12" height="12"/><path d="M357 53h10v4h-10z M367 45V65L377 55z"/><path d="M383 46V64L392 55z M392 46V64L401 55z"/><path d="M407 55L416 46V64z M418 46V64L427 55z"/><path d="M432 46V64L441 55z M443 55L452 46V64z"/><g shape-rendering="crispEdges"><rect x="469" y="48" width="16" height="1" fill="#808080"/><rect x="469" y="52" width="16" height="1" fill="#808080"/><rect x="469" y="56" width="16" height="1" fill="#808080"/><rect x="469" y="60" width="16" height="1" fill="#808080"/><rect x="471" y="47" width="1" height="14" fill="#000"/><rect x="471" y="60" width="14" height="1" fill="#000"/><rect x="473" y="61" width="1" height="1" fill="#000"/><rect x="477" y="61" width="1" height="1" fill="#000"/><rect x="481" y="61" width="1" height="1" fill="#000"/><rect x="478" y="47" width="1" height="14" fill="#2020b0"/><rect x="479" y="47" width="1" height="14" fill="#8080d0"/></g><path d="M472 59.5h1.5l5-7.5 5 7.5h1.5" fill="none" stroke="#d82020" stroke-width="1.3"/></svg>
<svg width="69" height="16" style="left:24px;top:678px" shape-rendering="crispEdges"><path fill="#000" d="M0 0h8v1h-8zM10 0h6v1h-6zM29 0h1v1h-1zM37 0h2v1h-2zM41 0h2v1h-2zM47 0h1v1h-1zM62 0h1v1h-1zM6 1h1v1h-1zM29 1h1v1h-1zM37 1h2v1h-2zM41 1h2v1h-2zM47 1h1v1h-1zM62 1h1v1h-1zM6 2h1v1h-1zM29 2h1v1h-1zM37 2h2v1h-2zM41 2h2v1h-2zM47 2h1v1h-1zM62 2h1v1h-1zM6 3h1v1h-1zM29 3h1v1h-1zM37 3h2v1h-2zM41 3h2v1h-2zM47 3h1v1h-1zM49 3h3v1h-3zM55 3h1v1h-1zM58 3h1v1h-1zM62 3h1v1h-1zM3 4h1v1h-1zM5 4h2v1h-2zM10 4h6v1h-6zM28 4h2v1h-2zM37 4h2v1h-2zM41 4h2v1h-2zM46 4h3v1h-3zM51 4h1v1h-1zM53 4h1v1h-1zM55 4h1v1h-1zM58 4h1v1h-1zM62 4h1v1h-1zM3 5h1v1h-1zM5 5h1v1h-1zM15 5h1v1h-1zM19 5h5v1h-5zM28 5h1v1h-1zM37 5h2v1h-2zM41 5h2v1h-2zM47 5h1v1h-1zM51 5h1v1h-1zM53 5h1v1h-1zM55 5h1v1h-1zM58 5h1v1h-1zM62 5h2v1h-2zM3 6h1v1h-1zM15 6h1v1h-1zM28 6h1v1h-1zM31 6h1v1h-1zM37 6h2v1h-2zM41 6h2v1h-2zM47 6h1v1h-1zM50 6h2v1h-2zM53 6h1v1h-1zM56 6h1v1h-1zM58 6h1v1h-1zM62 6h1v1h-1zM64 6h2v1h-2zM3 7h1v1h-1zM15 7h1v1h-1zM28 7h1v1h-1zM31 7h1v1h-1zM37 7h2v1h-2zM41 7h2v1h-2zM47 7h1v1h-1zM50 7h1v1h-1zM54 7h1v1h-1zM58 7h1v1h-1zM62 7h1v1h-1zM65 7h2v1h-2zM3 8h1v1h-1zM14 8h2v1h-2zM28 8h1v1h-1zM31 8h1v1h-1zM41 8h1v1h-1zM47 8h1v1h-1zM57 8h1v1h-1zM62 8h1v1h-1zM3 9h1v1h-1zM14 9h1v1h-1zM27 9h2v1h-2zM32 9h1v1h-1zM41 9h1v1h-1zM47 9h1v1h-1zM57 9h1v1h-1zM62 9h1v1h-1zM2 10h2v1h-2zM13 10h2v1h-2zM27 10h1v1h-1zM31 10h2v1h-2zM41 10h1v1h-1zM47 10h1v1h-1zM57 10h1v1h-1zM62 10h1v1h-1zM2 11h1v1h-1zM12 11h2v1h-2zM26 11h7v1h-7zM40 11h2v1h-2zM47 11h1v1h-1zM56 11h1v1h-1zM62 11h1v1h-1zM1 12h1v1h-1zM11 12h2v1h-2zM32 12h2v1h-2zM39 12h2v1h-2zM47 12h5v1h-5zM55 12h2v1h-2zM62 12h1v1h-1zM39 13h1v1h-1zM55 13h1v1h-1zM62 13h1v1h-1z"/></svg>
<svg width="10" height="6" style="left:993px;top:683px"><path d="M0 0h7L3.5 4z" fill="#000"/></svg>
<svg width="78" height="13" style="left:2px;top:722px" shape-rendering="crispEdges"><path fill="#000" d="M2 0h8v1h-8zM15 0h1v1h-1zM27 0h1v1h-1zM46 0h1v1h-1zM51 0h1v1h-1zM62 0h2v1h-2zM74 0h2v1h-2zM1 1h1v1h-1zM3 1h1v1h-1zM9 1h1v1h-1zM12 1h11v1h-11zM27 1h1v1h-1zM45 1h1v1h-1zM51 1h1v1h-1zM62 1h2v1h-2zM74 1h2v1h-2zM1 2h1v1h-1zM3 2h1v1h-1zM9 2h1v1h-1zM14 2h1v1h-1zM24 2h8v1h-8zM43 2h2v1h-2zM51 2h1v1h-1zM62 2h2v1h-2zM74 2h2v1h-2zM0 3h2v1h-2zM3 3h7v1h-7zM14 3h1v1h-1zM24 3h1v1h-1zM31 3h1v1h-1zM33 3h6v1h-6zM43 3h1v1h-1zM51 3h1v1h-1zM62 3h2v1h-2zM74 3h2v1h-2zM0 4h2v1h-2zM6 4h1v1h-1zM13 4h1v1h-1zM16 4h6v1h-6zM24 4h1v1h-1zM31 4h1v1h-1zM36 4h1v1h-1zM41 4h3v1h-3zM51 4h2v1h-2zM62 4h2v1h-2zM74 4h2v1h-2zM0 5h11v1h-11zM12 5h2v1h-2zM19 5h1v1h-1zM24 5h1v1h-1zM31 5h1v1h-1zM36 5h1v1h-1zM40 5h1v1h-1zM43 5h1v1h-1zM51 5h1v1h-1zM53 5h3v1h-3zM62 5h1v1h-1zM74 5h1v1h-1zM1 6h1v1h-1zM5 6h3v1h-3zM12 6h2v1h-2zM15 6h8v1h-8zM30 6h1v1h-1zM36 6h1v1h-1zM43 6h1v1h-1zM51 6h1v1h-1zM55 6h1v1h-1zM62 6h1v1h-1zM74 6h1v1h-1zM1 7h1v1h-1zM4 7h1v1h-1zM6 7h3v1h-3zM13 7h1v1h-1zM18 7h1v1h-1zM30 7h1v1h-1zM36 7h1v1h-1zM43 7h1v1h-1zM51 7h1v1h-1zM1 8h1v1h-1zM3 8h2v1h-2zM6 8h1v1h-1zM8 8h2v1h-2zM13 8h1v1h-1zM18 8h1v1h-1zM29 8h1v1h-1zM36 8h1v1h-1zM43 8h1v1h-1zM51 8h1v1h-1zM1 9h3v1h-3zM6 9h1v1h-1zM9 9h2v1h-2zM13 9h1v1h-1zM18 9h1v1h-1zM27 9h2v1h-2zM33 9h6v1h-6zM43 9h1v1h-1zM51 9h1v1h-1zM1 10h1v1h-1zM6 10h1v1h-1zM13 10h1v1h-1zM17 10h2v1h-2zM26 10h2v1h-2zM51 10h1v1h-1zM62 10h2v1h-2zM74 10h2v1h-2z"/></svg>
<div style="left:71px;top:744px;width:1px;height:20px;background:#fff"></div><div style="left:72px;top:744px;width:1px;height:20px;background:#808080"></div>
<div style="left:153px;top:744px;width:1px;height:20px;background:#fff"></div><div style="left:154px;top:744px;width:1px;height:20px;background:#808080"></div>
<div style="left:848px;top:744px;width:1px;height:20px;background:#fff"></div><div style="left:849px;top:744px;width:1px;height:20px;background:#808080"></div>
<svg width="41" height="13" style="left:22px;top:746px" shape-rendering="crispEdges"><path fill="#000" d="M12 0h2v1h-2zM32 0h2v1h-2zM0 1h8v1h-8zM12 1h6v1h-6zM32 1h2v1h-2zM6 2h2v1h-2zM11 2h2v1h-2zM17 2h2v1h-2zM32 2h2v1h-2zM5 3h2v1h-2zM10 3h2v1h-2zM16 3h2v1h-2zM32 3h2v1h-2zM4 4h2v1h-2zM10 4h4v1h-4zM16 4h2v1h-2zM32 4h4v1h-4zM4 5h2v1h-2zM13 5h5v1h-5zM20 5h10v1h-10zM32 5h2v1h-2zM35 5h4v1h-4zM3 6h3v1h-3zM14 6h3v1h-3zM32 6h2v1h-2zM37 6h2v1h-2zM2 7h2v1h-2zM5 7h3v1h-3zM14 7h2v1h-2zM32 7h2v1h-2zM0 8h3v1h-3zM6 8h3v1h-3zM13 8h2v1h-2zM32 8h2v1h-2zM0 9h1v1h-1zM7 9h2v1h-2zM11 9h3v1h-3zM32 9h2v1h-2zM10 10h3v1h-3zM32 10h2v1h-2z"/></svg>
<svg width="16" height="16" style="left:165px;top:746px" shape-rendering="crispEdges"><rect x="0" y="0" width="16" height="16" fill="#101018"/><rect x="1" y="1" width="14" height="9" fill="#f4f4f4"/><rect x="1" y="1" width="14" height="1" fill="#303070"/><rect x="2" y="2" width="5" height="2" fill="#ffffff"/><rect x="7" y="2" width="5" height="1" fill="#7070c0"/><rect x="2" y="4" width="5" height="2" fill="#b070c0"/><rect x="7" y="4" width="5" height="2" fill="#d0c070"/><rect x="12" y="3" width="1" height="1" fill="#500050"/><rect x="13" y="4" width="1" height="1" fill="#503070"/><rect x="1" y="6" width="14" height="2" fill="#50a050"/><rect x="1" y="8" width="14" height="1" fill="#c8c8c8"/><rect x="2" y="8" width="2" height="1" fill="#606060"/><rect x="6" y="8" width="2" height="1" fill="#606060"/><rect x="10" y="8" width="2" height="1" fill="#606060"/><rect x="1" y="9" width="14" height="1" fill="#303030"/><rect x="1" y="10" width="14" height="5" fill="#ffffff"/><rect x="3" y="11" width="3" height="4" fill="#d01010"/><rect x="7" y="11" width="3" height="4" fill="#0000c0"/><rect x="11" y="11" width="4" height="4" fill="#20d020"/></svg>
<svg width="62" height="13" style="left:185px;top:748px" shape-rendering="crispEdges"><path fill="#000" d="M21 0h1v1h-1zM30 0h2v1h-2zM35 0h2v1h-2zM0 1h2v1h-2zM8 1h2v1h-2zM11 1h7v1h-7zM21 1h1v1h-1zM30 1h2v1h-2zM35 1h2v1h-2zM50 1h9v1h-9zM0 2h2v1h-2zM7 2h2v1h-2zM15 2h2v1h-2zM21 2h1v1h-1zM28 2h11v1h-11zM52 2h2v1h-2zM1 3h2v1h-2zM7 3h2v1h-2zM15 3h2v1h-2zM21 3h1v1h-1zM30 3h2v1h-2zM35 3h2v1h-2zM52 3h2v1h-2zM1 4h2v1h-2zM7 4h2v1h-2zM15 4h2v1h-2zM21 4h3v1h-3zM30 4h2v1h-2zM35 4h2v1h-2zM50 4h10v1h-10zM6 5h3v1h-3zM15 5h2v1h-2zM21 5h1v1h-1zM23 5h4v1h-4zM30 5h2v1h-2zM34 5h2v1h-2zM40 5h9v1h-9zM52 5h2v1h-2zM6 6h2v1h-2zM15 6h1v1h-1zM21 6h1v1h-1zM25 6h2v1h-2zM34 6h2v1h-2zM52 6h2v1h-2zM5 7h2v1h-2zM14 7h2v1h-2zM21 7h1v1h-1zM34 7h2v1h-2zM52 7h2v1h-2zM3 8h3v1h-3zM13 8h3v1h-3zM21 8h1v1h-1zM34 8h2v1h-2zM52 8h2v1h-2zM2 9h2v1h-2zM12 9h2v1h-2zM21 9h1v1h-1zM33 9h2v1h-2zM52 9h7v1h-7zM21 10h1v1h-1zM32 10h2v1h-2z"/></svg>
<svg width="1024" height="768" style="left:0;top:0" shape-rendering="crispEdges"><path d="M255 749h1v1h-1zM256 749h1v1h-1zM257 749h1v1h-1zM258 749h1v1h-1zM259 749h1v1h-1zM260 749h1v1h-1zM255 750h1v1h-1zM256 750h1v1h-1zM255 751h1v1h-1zM256 751h1v1h-1zM255 752h1v1h-1zM256 752h1v1h-1zM255 753h1v1h-1zM256 753h1v1h-1zM257 753h1v1h-1zM258 753h1v1h-1zM259 753h1v1h-1zM255 754h1v1h-1zM256 754h1v1h-1zM255 755h1v1h-1zM256 755h1v1h-1zM255 756h1v1h-1zM256 756h1v1h-1zM255 757h1v1h-1zM256 757h1v1h-1zM257 757h1v1h-1zM258 757h1v1h-1zM259 757h1v1h-1zM260 757h1v1h-1zM263 749h1v1h-1zM264 749h1v1h-1zM265 749h1v1h-1zM266 749h1v1h-1zM262 750h1v1h-1zM263 750h1v1h-1zM266 750h1v1h-1zM267 750h1v1h-1zM262 751h1v1h-1zM263 751h1v1h-1zM266 751h1v1h-1zM267 751h1v1h-1zM262 752h1v1h-1zM263 752h1v1h-1zM266 752h1v1h-1zM267 752h1v1h-1zM263 753h1v1h-1zM264 753h1v1h-1zM265 753h1v1h-1zM266 753h1v1h-1zM262 754h1v1h-1zM263 754h1v1h-1zM266 754h1v1h-1zM267 754h1v1h-1zM262 755h1v1h-1zM263 755h1v1h-1zM266 755h1v1h-1zM267 755h1v1h-1zM262 756h1v1h-1zM263 756h1v1h-1zM266 756h1v1h-1zM267 756h1v1h-1zM263 757h1v1h-1zM264 757h1v1h-1zM265 757h1v1h-1zM266 757h1v1h-1zM270 749h1v1h-1zM271 749h1v1h-1zM272 749h1v1h-1zM273 749h1v1h-1zM269 750h1v1h-1zM270 750h1v1h-1zM273 750h1v1h-1zM274 750h1v1h-1zM273 751h1v1h-1zM274 751h1v1h-1zM273 752h1v1h-1zM274 752h1v1h-1zM271 753h1v1h-1zM272 753h1v1h-1zM273 753h1v1h-1zM273 754h1v1h-1zM274 754h1v1h-1zM273 755h1v1h-1zM274 755h1v1h-1zM269 756h1v1h-1zM270 756h1v1h-1zM273 756h1v1h-1zM274 756h1v1h-1zM270 757h1v1h-1zM271 757h1v1h-1zM272 757h1v1h-1zM273 757h1v1h-1zM277 749h1v1h-1zM278 749h1v1h-1zM279 749h1v1h-1zM280 749h1v1h-1zM276 750h1v1h-1zM277 750h1v1h-1zM280 750h1v1h-1zM281 750h1v1h-1zM276 751h1v1h-1zM277 751h1v1h-1zM280 751h1v1h-1zM281 751h1v1h-1zM276 752h1v1h-1zM277 752h1v1h-1zM280 752h1v1h-1zM281 752h1v1h-1zM276 753h1v1h-1zM277 753h1v1h-1zM280 753h1v1h-1zM281 753h1v1h-1zM276 754h1v1h-1zM277 754h1v1h-1zM280 754h1v1h-1zM281 754h1v1h-1zM276 755h1v1h-1zM277 755h1v1h-1zM280 755h1v1h-1zM281 755h1v1h-1zM276 756h1v1h-1zM277 756h1v1h-1zM280 756h1v1h-1zM281 756h1v1h-1zM277 757h1v1h-1zM278 757h1v1h-1zM279 757h1v1h-1zM280 757h1v1h-1z"/></svg>
<svg width="1024" height="30" style="left:0;top:738px"><path d="M6 7.5q3.5-1.5 7 0v5.5q-3.5-1.5-7 0z" fill="#F07830"/><path d="M13.5 8.5q3-1.2 6 0v6q-3-1.2-6 0z" fill="#80D020"/><path d="M4.5 12.5q3.5-1.5 7 0v6.5q-3.5-1.5-7 0z" fill="#4070E0"/><path d="M11.5 14.5q3-1.2 6 0v6q-3-1.2-6 0z" fill="#F8D020"/><path d="M81.5 21.5q-1.5-2.5 3-8 5-6 11-6.5-1 3.5-3.5 5" fill="none" stroke="#7CC4F4" stroke-width="1.3"/><circle cx="88.5" cy="15.5" r="6.3" fill="#2F86D8"/><ellipse cx="89" cy="13.3" rx="3.2" ry="1.7" fill="#fff"/><rect x="89" y="16.4" width="7" height="1.8" fill="#fff"/><path d="M82.5 12.5q3-4 8-4" fill="none" stroke="#8FD0FF" stroke-width="1"/><path d="M104.5 10.5h5l1.5 1.5h7.5l1 3-1.5 7.5h-13z" fill="#F0D070" stroke="#B08A28" stroke-width="1"/><path d="M105 14.5h14" stroke="#FFF0B0" stroke-width="1"/><circle cx="111.5" cy="16" r="3.6" fill="#E8F8FF" stroke="#7AA0B0" stroke-width="0.9"/><rect x="127" y="8.5" width="14" height="14.5" rx="2.5" fill="#3A78D0"/><path d="M129.5 11.5h9v9h-9z" fill="#F0F8FF"/><path d="M136.5 13.5a3.5 3.5 0 1 0 1 3" fill="none" stroke="#3A70C0" stroke-width="1.3"/><path d="M132 18.5l4-4" stroke="#000" stroke-width="1.2"/><rect x="141" y="10" width="2" height="2" fill="#E06040"/><path d="M863.5 10.5v1.5h7v1.5" fill="none" stroke="#000" stroke-width="1"/><rect x="859.5" y="14.5" width="12" height="8" fill="#fff" stroke="#000" stroke-width="1"/><path d="M861 16.5h9M861 18.5h9M861 20.5h9" stroke="#606060" stroke-width="1" stroke-dasharray="1 1"/><path d="M883.5 13.5l-3 2 3 2M887.5 13.5l-3 2 3 2" fill="none" stroke="#000" stroke-width="1.6"/><path d="M900.5 8.5l6 2.5v5q0 4.5-6 7.5-6-3-6-7.5v-5z" fill="#F0D020" stroke="#707080" stroke-width="1"/><rect x="900" y="12" width="2" height="5" fill="#000"/><rect x="900" y="18" width="2" height="2" fill="#000"/><path d="M918.5 8.5l6 2.5v5q0 4.5-6 7.5-6-3-6-7.5v-5z" fill="#C81020" stroke="#707080" stroke-width="1"/><path d="M916.5 13.5l4 4M920.5 13.5l-4 4" stroke="#fff" stroke-width="1.6"/><circle cx="936.5" cy="15" r="6.8" fill="#D8E8F8" stroke="#303040" stroke-width="0.8"/><path d="M934 22l-1 2.5 3-2" fill="#303040"/><rect x="936" y="13" width="2" height="6" fill="#1A3A80"/><rect x="936" y="10" width="2" height="2" fill="#1A3A80"/><rect x="935" y="18" width="4" height="1" fill="#1A3A80"/><g shape-rendering="crispEdges"><rect x="947" y="8" width="16" height="16" fill="#fff"/><rect x="948" y="9" width="15" height="15" fill="#000"/><rect x="948" y="9" width="14" height="14" fill="#0000D0"/></g><path d="M951.5 11.5v9l7-4.5z" fill="#fff"/><path d="M972.5 10l1.6 3.6 3.9.4-2.9 2.6.9 3.9-3.5-2-3.5 2 .9-3.9-2.9-2.6 3.9-.4z" fill="#F0D840" stroke="#807040" stroke-width="0.7"/><rect x="977" y="19" width="1" height="3" fill="#000"/></svg>
<svg width="1024" height="768" style="left:0;top:0" shape-rendering="crispEdges"><path d="M989 749h1v1h-1zM990 749h1v1h-1zM988 750h1v1h-1zM990 750h1v1h-1zM990 751h1v1h-1zM990 752h1v1h-1zM990 753h1v1h-1zM990 754h1v1h-1zM990 755h1v1h-1zM990 756h1v1h-1zM990 757h1v1h-1zM996 749h1v1h-1zM997 749h1v1h-1zM995 750h1v1h-1zM994 751h1v1h-1zM994 752h1v1h-1zM995 752h1v1h-1zM996 752h1v1h-1zM997 752h1v1h-1zM994 753h1v1h-1zM998 753h1v1h-1zM994 754h1v1h-1zM998 754h1v1h-1zM994 755h1v1h-1zM998 755h1v1h-1zM994 756h1v1h-1zM998 756h1v1h-1zM995 757h1v1h-1zM996 757h1v1h-1zM997 757h1v1h-1zM1000 752h1v1h-1zM1000 756h1v1h-1zM1002 749h1v1h-1zM1003 749h1v1h-1zM1004 749h1v1h-1zM1005 749h1v1h-1zM1006 749h1v1h-1zM1002 750h1v1h-1zM1002 751h1v1h-1zM1002 752h1v1h-1zM1003 752h1v1h-1zM1004 752h1v1h-1zM1005 752h1v1h-1zM1006 753h1v1h-1zM1006 754h1v1h-1zM1006 755h1v1h-1zM1002 756h1v1h-1zM1006 756h1v1h-1zM1003 757h1v1h-1zM1004 757h1v1h-1zM1005 757h1v1h-1zM1009 749h1v1h-1zM1010 749h1v1h-1zM1011 749h1v1h-1zM1008 750h1v1h-1zM1012 750h1v1h-1zM1008 751h1v1h-1zM1012 751h1v1h-1zM1008 752h1v1h-1zM1012 752h1v1h-1zM1009 753h1v1h-1zM1010 753h1v1h-1zM1011 753h1v1h-1zM1008 754h1v1h-1zM1012 754h1v1h-1zM1008 755h1v1h-1zM1012 755h1v1h-1zM1008 756h1v1h-1zM1012 756h1v1h-1zM1009 757h1v1h-1zM1010 757h1v1h-1zM1011 757h1v1h-1z"/></svg>
</body></html>
